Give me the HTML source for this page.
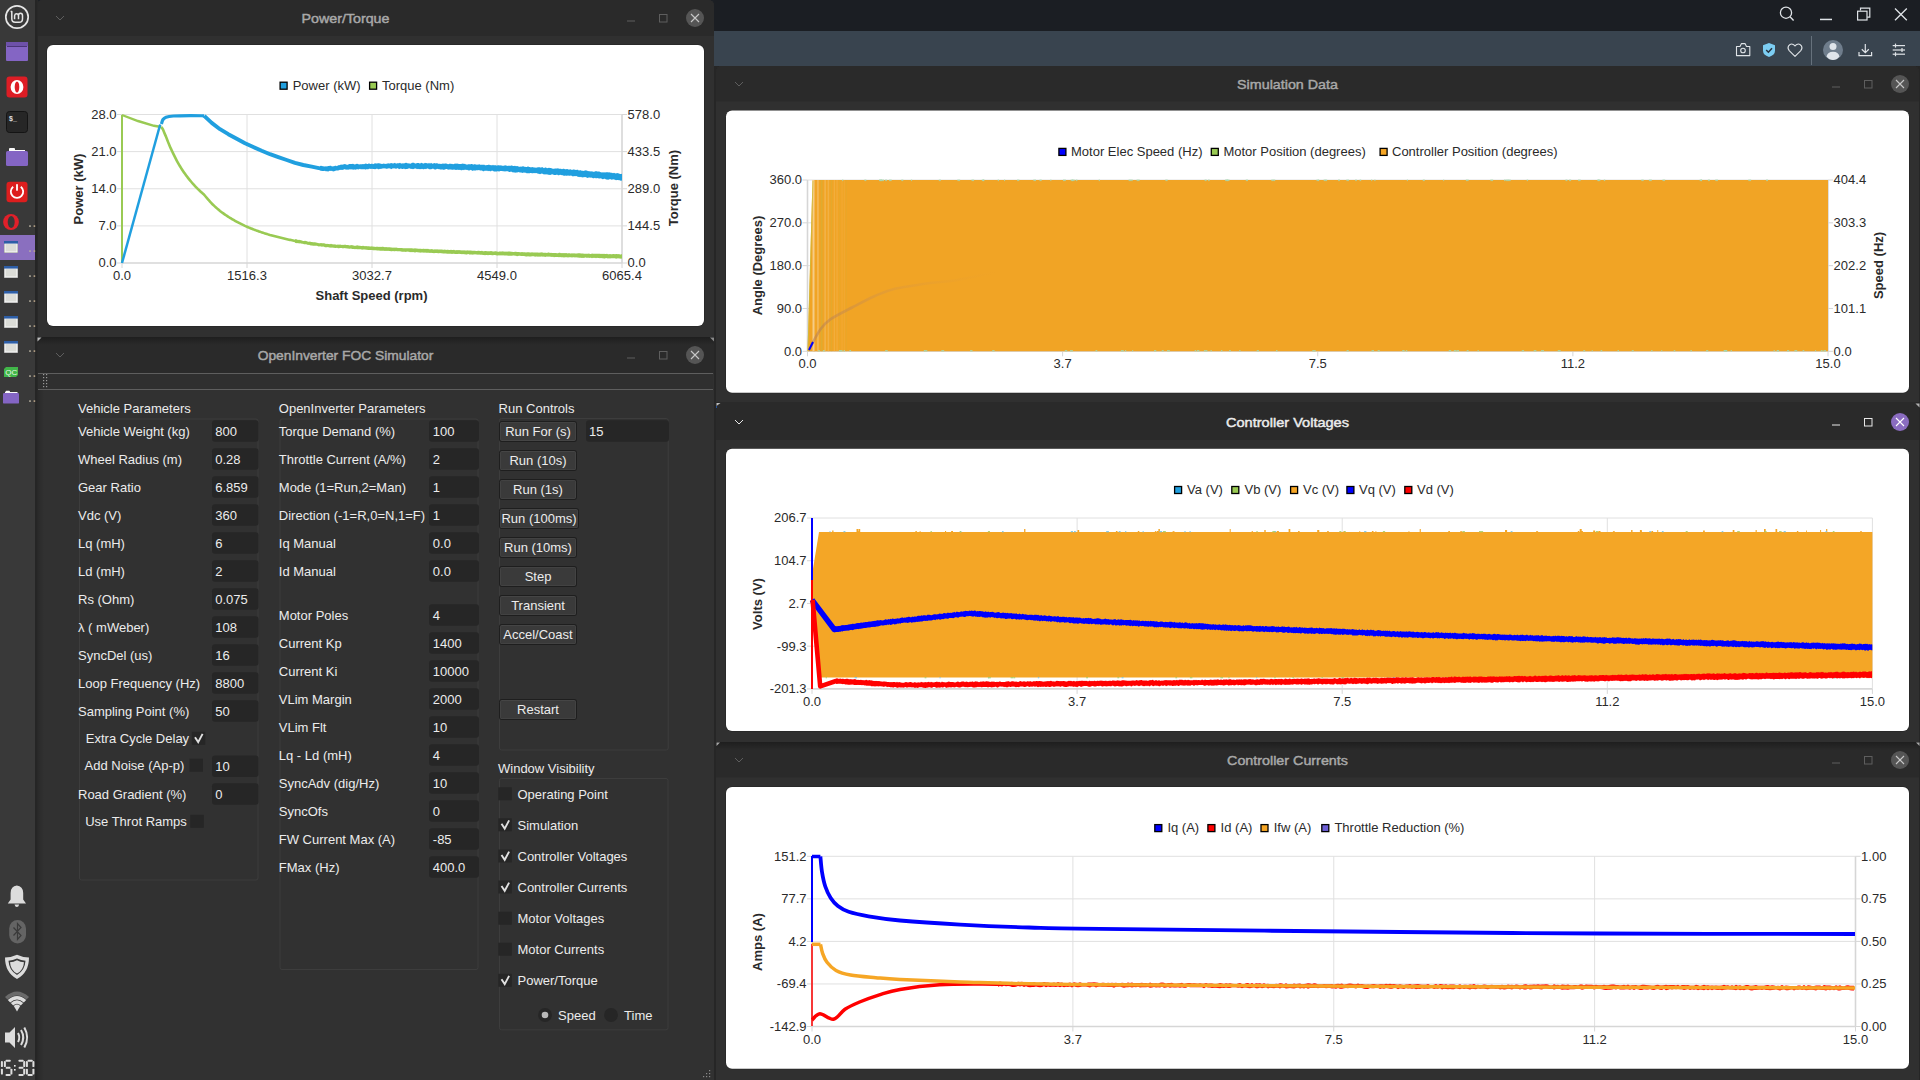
<!DOCTYPE html>
<html><head><meta charset="utf-8">
<style>
*{margin:0;padding:0}
html,body{width:1920px;height:1080px;overflow:hidden;background:#1c1f24}
.a{position:absolute}
svg text{font-family:"Liberation Sans",sans-serif}
</style></head><body>
<svg class="a" style="left:0;top:0" width="36" height="1080" viewBox="0 0 36 1080">
<rect x="0" y="0" width="35" height="1080" fill="#393939"/>
<rect x="35" y="0" width="3" height="1080" fill="#252525"/>
<!-- mint logo -->
<circle cx="17" cy="17" r="11.2" fill="none" stroke="#e6e6e6" stroke-width="1.7"/>
<path d="M10.6 11.6 H11.8 V18.8 Q11.8 22.3 15.2 22.3 H19.2 Q22.5 22.3 22.5 19 V15.6 A2 2.4 0 0 0 18.5 15.6 V19.3 M18.5 15.6 A2 2.4 0 0 0 14.6 15.6 V19.3" fill="none" stroke="#e6e6e6" stroke-width="1.5" stroke-linejoin="round"/>
<!-- purple window -->
<rect x="6" y="42" width="22" height="19" rx="1" fill="#8465c4"/>
<rect x="6" y="42" width="22" height="4" rx="1" fill="#6e51aa"/>
<rect x="7" y="46" width="20" height="1" fill="#4a3578"/>
<!-- opera -->
<rect x="6.5" y="76.5" width="21" height="21" rx="3" fill="#dd1d25"/>
<ellipse cx="17" cy="87" rx="6.4" ry="7" fill="#fff"/>
<ellipse cx="17" cy="87" rx="2.3" ry="5.6" fill="#dd1d25"/>
<!-- terminal -->
<rect x="6.5" y="111.5" width="21" height="21" rx="3" fill="#262626" stroke="#141414" stroke-width="1"/>
<text x="9" y="121" font-family="Liberation Mono" font-size="7" font-weight="bold" fill="#e0e0e0">$_</text>
<!-- folder -->
<rect x="9" y="148" width="6" height="3" rx="1" fill="#fafafa"/>
<rect x="9" y="150" width="16" height="2" fill="#fafafa"/>
<rect x="6" y="151" width="22" height="15" rx="1.5" fill="#8465c4"/>
<!-- power -->
<rect x="6.5" y="181.8" width="21" height="20.5" rx="3" fill="#dd1e1e"/>
<path d="M13.2 186.8 A6.2 6.2 0 1 0 20.8 186.8" fill="none" stroke="#fff" stroke-width="1.8"/>
<rect x="16.1" y="184.2" width="1.8" height="6.5" fill="#fff"/>
<!-- opera ring -->
<ellipse cx="11" cy="222" rx="7.9" ry="8" fill="#e1202a"/>
<ellipse cx="11.2" cy="222" rx="3.5" ry="6" fill="#393939"/>
<!-- highlight -->
<rect x="0" y="235" width="35" height="25" fill="#8a6fbf"/>
<rect x="4" y="241" width="14" height="12" fill="#8f8f8f"/><rect x="4.5" y="241.5" width="13" height="11" fill="#fafafa"/><rect x="4" y="241" width="14" height="2.6" fill="#2d5ea6"/><rect x="5.5" y="244" width="11" height="7.5" fill="#dcddd8"/>
<rect x="4" y="266" width="14" height="12" fill="#8f8f8f"/><rect x="4.5" y="266.5" width="13" height="11" fill="#fafafa"/><rect x="4" y="266" width="14" height="2.6" fill="#2d5ea6"/><rect x="5.5" y="269" width="11" height="7.5" fill="#dcddd8"/>
<rect x="4" y="291" width="14" height="12" fill="#8f8f8f"/><rect x="4.5" y="291.5" width="13" height="11" fill="#fafafa"/><rect x="4" y="291" width="14" height="2.6" fill="#2d5ea6"/><rect x="5.5" y="294" width="11" height="7.5" fill="#dcddd8"/>
<rect x="4" y="316" width="14" height="12" fill="#8f8f8f"/><rect x="4.5" y="316.5" width="13" height="11" fill="#fafafa"/><rect x="4" y="316" width="14" height="2.6" fill="#2d5ea6"/><rect x="5.5" y="319" width="11" height="7.5" fill="#dcddd8"/>
<rect x="4" y="341" width="14" height="12" fill="#8f8f8f"/><rect x="4.5" y="341.5" width="13" height="11" fill="#fafafa"/><rect x="4" y="341" width="14" height="2.6" fill="#2d5ea6"/><rect x="5.5" y="344" width="11" height="7.5" fill="#dcddd8"/>
<!-- QC -->
<path d="M6 367 H18 V375 L16 377 H4 V369 Z" fill="#41b649"/>
<text x="5.3" y="375" font-family="Liberation Sans" font-size="7.6" fill="#e8f5e8" textLength="12" lengthAdjust="spacingAndGlyphs">QC</text>
<!-- folder2 -->
<rect x="5.5" y="390.8" width="4.5" height="2.5" rx="1" fill="#fafafa"/>
<rect x="5" y="392" width="12.5" height="1.5" fill="#fafafa"/>
<rect x="3" y="393" width="16" height="10.6" rx="1.2" fill="#8465c4"/>
<rect x="29.2" y="225.3" width="1.6" height="1.6" fill="#b8b0a0"/><rect x="33.6" y="225.3" width="1.6" height="1.6" fill="#b8a488"/>
<rect x="29.2" y="250.3" width="1.6" height="1.6" fill="#b8b0a0"/><rect x="33.6" y="250.3" width="1.6" height="1.6" fill="#b8a488"/>
<rect x="29.2" y="275.3" width="1.6" height="1.6" fill="#b8b0a0"/><rect x="33.6" y="275.3" width="1.6" height="1.6" fill="#b8a488"/>
<rect x="29.2" y="300.3" width="1.6" height="1.6" fill="#b8b0a0"/><rect x="33.6" y="300.3" width="1.6" height="1.6" fill="#b8a488"/>
<rect x="29.2" y="325.3" width="1.6" height="1.6" fill="#b8b0a0"/><rect x="33.6" y="325.3" width="1.6" height="1.6" fill="#b8a488"/>
<rect x="29.2" y="350.3" width="1.6" height="1.6" fill="#b8b0a0"/><rect x="33.6" y="350.3" width="1.6" height="1.6" fill="#b8a488"/>
<rect x="29.2" y="375.3" width="1.6" height="1.6" fill="#b8b0a0"/><rect x="33.6" y="375.3" width="1.6" height="1.6" fill="#b8a488"/>
<rect x="29.2" y="400.3" width="1.6" height="1.6" fill="#b8b0a0"/><rect x="33.6" y="400.3" width="1.6" height="1.6" fill="#b8a488"/>
<!-- bell -->
<path d="M16.8 885.5 Q23 886 23.2 893 V899.5 L26 903.5 H7.8 L10.6 899.5 V893 Q10.8 886 16.8 885.5 Z" fill="#dcdcdc"/>
<path d="M14.5 904.5 H19.2 Q18.5 907 16.8 907 Q15.2 907 14.5 904.5 Z" fill="#dcdcdc"/>
<!-- bluetooth -->
<rect x="9.2" y="920" width="16.8" height="23.4" rx="8.4" fill="#646464"/>
<path d="M13.5 927.5 L21 935.5 L17.5 939.5 V923.5 L21 927.5 L13.5 935.5" fill="none" stroke="#3a3a3a" stroke-width="1.2"/>
<!-- shield -->
<path d="M17 954.8 Q22.5 957.5 29 957.5 Q29 972.5 17 979 Q5 972.5 5 957.5 Q11.5 957.5 17 954.8 Z" fill="#dcdcdc"/>
<path d="M17 958.6 Q21 960.6 25.5 960.8 Q25 970.5 17 975 Q9 970.5 8.5 960.8 Q13 960.6 17 958.6 Z" fill="#393939"/>
<path d="M17 960.2 Q20.5 962 24 962.2 Q23.5 970 17 973.6 Q10.5 970 10 962.2 Q13.5 962 17 960.2 Z" fill="#dcdcdc"/>
<!-- wifi -->
<path d="M5 997 Q17 986 29 997 L26.5 999.6 Q17 991.5 7.5 999.6 Z" fill="#6a6a6a"/>
<path d="M7.8 1000 Q17 991.8 26.2 1000 L23.8 1002.5 Q17 996.5 10.2 1002.5 Z" fill="#dcdcdc"/>
<path d="M10.8 1003 Q17 997.5 23.2 1003 L20.8 1005.4 Q17 1002 13.2 1005.4 Z" fill="#dcdcdc"/>
<path d="M13.8 1006 Q17 1003.2 20.2 1006 L17 1011.5 Z" fill="#dcdcdc"/>
<!-- speaker -->
<path d="M5 1032.5 H9.5 L15 1027 V1048 L9.5 1042.5 H5 Z" fill="#dcdcdc"/>
<path d="M18 1033 Q20.5 1037.5 18 1042" fill="none" stroke="#dcdcdc" stroke-width="2"/>
<path d="M21 1030 Q25.5 1037.5 21 1045" fill="none" stroke="#dcdcdc" stroke-width="2"/>
<path d="M24.3 1027.5 Q30 1037.5 24.3 1047.5" fill="none" stroke="#dcdcdc" stroke-width="2"/>
<!-- clock -->
<rect x="0.90" y="1061.10" width="2.00" height="5.95" rx="0.9" fill="#dedede"/><rect x="0.90" y="1068.65" width="2.00" height="5.95" rx="0.9" fill="#dedede"/><rect x="5.50" y="1059.70" width="5.30" height="2.00" rx="0.9" fill="#dedede"/><rect x="3.90" y="1061.10" width="2.00" height="5.95" rx="0.9" fill="#dedede"/><rect x="5.70" y="1066.85" width="4.90" height="2.00" rx="0.9" fill="#dedede"/><rect x="10.40" y="1068.65" width="2.00" height="5.95" rx="0.9" fill="#dedede"/><rect x="5.50" y="1074.00" width="5.30" height="2.00" rx="0.9" fill="#dedede"/><rect x="14" y="1065" width="1.6" height="1.6" fill="#f0f0f0"/><rect x="14" y="1069" width="1.6" height="1.6" fill="#f0f0f0"/><rect x="18.4" y="1059.70" width="5.30" height="2.00" rx="0.9" fill="#dedede"/><rect x="23.2" y="1061.10" width="2.00" height="5.95" rx="0.9" fill="#dedede"/><rect x="18.6" y="1066.85" width="4.90" height="2.00" rx="0.9" fill="#dedede"/><rect x="23.2" y="1068.65" width="2.00" height="5.95" rx="0.9" fill="#dedede"/><rect x="18.4" y="1074.00" width="5.30" height="2.00" rx="0.9" fill="#dedede"/><rect x="27.50" y="1059.70" width="5.30" height="2.00" rx="0.9" fill="#dedede"/><rect x="32.40" y="1061.10" width="2.00" height="5.95" rx="0.9" fill="#dedede"/><rect x="32.40" y="1068.65" width="2.00" height="5.95" rx="0.9" fill="#dedede"/><rect x="27.50" y="1074.00" width="5.30" height="2.00" rx="0.9" fill="#dedede"/><rect x="25.90" y="1068.65" width="2.00" height="5.95" rx="0.9" fill="#dedede"/><rect x="25.90" y="1061.10" width="2.00" height="5.95" rx="0.9" fill="#dedede"/>
</svg>
<svg class="a" style="left:0;top:0" width="1920" height="1080" viewBox="0 0 1920 1080" font-family="Liberation Sans">
<rect x="36" y="0" width="1884" height="1080" fill="#1c1f24"/>
<rect x="714" y="0" width="1206" height="31" fill="#1b1e23"/>
<rect x="714" y="31" width="1206" height="35" fill="#39444f"/>
<rect x="714" y="66" width="1206" height="1014" fill="#262626"/>
<rect x="36" y="0" width="2" height="1080" fill="#252525"/>
<defs><linearGradient id="tshade" x1="0" y1="0" x2="0" y2="1"><stop offset="0" stop-color="#000" stop-opacity="0.28"/><stop offset="1" stop-color="#000" stop-opacity="0"/></linearGradient></defs>
<path d="M37 337 V6 Q37 0 43 0 H708 Q714 0 714 6 V337 Z" fill="#303030"/>
<path d="M37 36 V6 Q37 0 43 0 H708 Q714 0 714 6 V36 Z" fill="#2a2a2a"/>
<path d="M56 16 L60 20 L64 16" fill="none" stroke="#5e5e5e" stroke-width="1"/>
<text x="301.55" y="22.7" font-size="13.2" fill="#a8a8a8" stroke="#a8a8a8" stroke-width="0.45" textLength="87.9" lengthAdjust="spacingAndGlyphs">Power/Torque</text>
<rect x="627" y="20.5" width="8" height="1" fill="#5e5e5e"/>
<rect x="659.5" y="14.5" width="7.5" height="7.5" fill="none" stroke="#5e5e5e" stroke-width="1"/>
<circle cx="695" cy="18" r="9" fill="#555555"/>
<path d="M691 14 L699 22 M699 14 L691 22" stroke="#c8c8c8" stroke-width="1.1"/>
<path d="M37 1080 V343 Q37 337 43 337 H708 Q714 337 714 343 V1080 Z" fill="#313131"/>
<path d="M37 373 V343 Q37 337 43 337 H708 Q714 337 714 343 V373 Z" fill="#2a2a2a"/>
<rect x="37" y="337" width="677" height="8" fill="url(#tshade)"/>
<path d="M56 353 L60 357 L64 353" fill="none" stroke="#5e5e5e" stroke-width="1"/>
<text x="257.65" y="359.7" font-size="13.2" fill="#a8a8a8" stroke="#a8a8a8" stroke-width="0.45" textLength="175.7" lengthAdjust="spacingAndGlyphs">OpenInverter FOC Simulator</text>
<rect x="627" y="357.5" width="8" height="1" fill="#5e5e5e"/>
<rect x="659.5" y="351.5" width="7.5" height="7.5" fill="none" stroke="#5e5e5e" stroke-width="1"/>
<circle cx="695" cy="355" r="9" fill="#555555"/>
<path d="M691 351 L699 359 M699 351 L691 359" stroke="#c8c8c8" stroke-width="1.1"/>
<defs><linearGradient id="lshade" x1="0" y1="0" x2="1" y2="0"><stop offset="0" stop-color="#000" stop-opacity="0.18"/><stop offset="1" stop-color="#000" stop-opacity="0"/></linearGradient></defs>
<rect x="37" y="373" width="7" height="707" fill="url(#lshade)"/>
<path d="M716 402 V72 Q716 66 722 66 H1913 Q1919 66 1919 72 V402 Z" fill="#303030"/>
<path d="M716 101.4 V72 Q716 66 722 66 H1913 Q1919 66 1919 72 V101.4 Z" fill="#2a2a2a"/>
<path d="M735 82 L739 86 L743 82" fill="none" stroke="#5e5e5e" stroke-width="1"/>
<text x="1237.10" y="88.7" font-size="13.2" fill="#a8a8a8" stroke="#a8a8a8" stroke-width="0.45" textLength="100.8" lengthAdjust="spacingAndGlyphs">Simulation Data</text>
<rect x="1832" y="86.5" width="8" height="1" fill="#5e5e5e"/>
<rect x="1864.5" y="80.5" width="7.5" height="7.5" fill="none" stroke="#5e5e5e" stroke-width="1"/>
<circle cx="1900" cy="84" r="9" fill="#555555"/>
<path d="M1896 80 L1904 88 M1904 80 L1896 88" stroke="#c8c8c8" stroke-width="1.1"/>
<path d="M716 742 V408 Q716 402 722 402 H1913 Q1919 402 1919 408 V742 Z" fill="#303030"/>
<path d="M716 440 V408 Q716 402 722 402 H1913 Q1919 402 1919 408 V440 Z" fill="#2a2a2a"/>
<path d="M735 420 L739 424 L743 420" fill="none" stroke="#e8e8e8" stroke-width="1"/>
<text x="1226.00" y="426.7" font-size="13.2" fill="#ececec" stroke="#ececec" stroke-width="0.45" textLength="123" lengthAdjust="spacingAndGlyphs">Controller Voltages</text>
<rect x="1832" y="424.5" width="8" height="1" fill="#e8e8e8"/>
<rect x="1864.5" y="418.5" width="7.5" height="7.5" fill="none" stroke="#e8e8e8" stroke-width="1"/>
<circle cx="1900" cy="422" r="9" fill="#8a6cc0"/>
<path d="M1896 418 L1904 426 M1904 418 L1896 426" stroke="#ffffff" stroke-width="1.1"/>
<path d="M716 1080 V748 Q716 742 722 742 H1913 Q1919 742 1919 748 V1080 Z" fill="#303030"/>
<path d="M716 777.5 V748 Q716 742 722 742 H1913 Q1919 742 1919 748 V777.5 Z" fill="#2a2a2a"/>
<rect x="716" y="742" width="1203" height="8" fill="url(#tshade)"/>
<path d="M735 758 L739 762 L743 758" fill="none" stroke="#5e5e5e" stroke-width="1"/>
<text x="1227.05" y="764.7" font-size="13.2" fill="#a8a8a8" stroke="#a8a8a8" stroke-width="0.45" textLength="120.9" lengthAdjust="spacingAndGlyphs">Controller Currents</text>
<rect x="1832" y="762.5" width="8" height="1" fill="#5e5e5e"/>
<rect x="1864.5" y="756.5" width="7.5" height="7.5" fill="none" stroke="#5e5e5e" stroke-width="1"/>
<circle cx="1900" cy="760" r="9" fill="#555555"/>
<path d="M1896 756 L1904 764 M1904 756 L1896 764" stroke="#c8c8c8" stroke-width="1.1"/>
<rect x="46.5" y="44.5" width="658" height="282" rx="6.5" fill="#222222"/>
<rect x="47" y="45" width="657" height="281" rx="6" fill="#ffffff"/>
<line x1="247.00" y1="114.5" x2="247.00" y2="263" stroke="#e0e0e0" stroke-width="1"/>
<line x1="372.00" y1="114.5" x2="372.00" y2="263" stroke="#e0e0e0" stroke-width="1"/>
<line x1="497.00" y1="114.5" x2="497.00" y2="263" stroke="#e0e0e0" stroke-width="1"/>
<line x1="122" y1="114.50" x2="622" y2="114.50" stroke="#e0e0e0" stroke-width="1"/>
<line x1="122" y1="151.62" x2="622" y2="151.62" stroke="#e0e0e0" stroke-width="1"/>
<line x1="122" y1="188.75" x2="622" y2="188.75" stroke="#e0e0e0" stroke-width="1"/>
<line x1="122" y1="225.88" x2="622" y2="225.88" stroke="#e0e0e0" stroke-width="1"/>
<line x1="122" y1="263" x2="622" y2="263" stroke="#d6d6d6" stroke-width="1.6"/>
<line x1="122" y1="114.5" x2="122" y2="263" stroke="#d6d6d6" stroke-width="1.6"/>
<line x1="622" y1="114.5" x2="622" y2="263" stroke="#d6d6d6" stroke-width="1.6"/>
<text x="116.5" y="118.9" font-size="13" fill="#2a2a2a" text-anchor="end" >28.0</text>
<line x1="117" y1="114.50" x2="122" y2="114.50" stroke="#d6d6d6" stroke-width="1"/>
<text x="116.5" y="156.025" font-size="13" fill="#2a2a2a" text-anchor="end" >21.0</text>
<line x1="117" y1="151.62" x2="122" y2="151.62" stroke="#d6d6d6" stroke-width="1"/>
<text x="116.5" y="193.15" font-size="13" fill="#2a2a2a" text-anchor="end" >14.0</text>
<line x1="117" y1="188.75" x2="122" y2="188.75" stroke="#d6d6d6" stroke-width="1"/>
<text x="116.5" y="230.275" font-size="13" fill="#2a2a2a" text-anchor="end" >7.0</text>
<line x1="117" y1="225.88" x2="122" y2="225.88" stroke="#d6d6d6" stroke-width="1"/>
<text x="116.5" y="267.4" font-size="13" fill="#2a2a2a" text-anchor="end" >0.0</text>
<line x1="117" y1="263.00" x2="122" y2="263.00" stroke="#d6d6d6" stroke-width="1"/>
<text x="627.6" y="118.9" font-size="13" fill="#2a2a2a" text-anchor="start" >578.0</text>
<line x1="622" y1="114.50" x2="627" y2="114.50" stroke="#d6d6d6" stroke-width="1"/>
<text x="627.6" y="156.025" font-size="13" fill="#2a2a2a" text-anchor="start" >433.5</text>
<line x1="622" y1="151.62" x2="627" y2="151.62" stroke="#d6d6d6" stroke-width="1"/>
<text x="627.6" y="193.15" font-size="13" fill="#2a2a2a" text-anchor="start" >289.0</text>
<line x1="622" y1="188.75" x2="627" y2="188.75" stroke="#d6d6d6" stroke-width="1"/>
<text x="627.6" y="230.275" font-size="13" fill="#2a2a2a" text-anchor="start" >144.5</text>
<line x1="622" y1="225.88" x2="627" y2="225.88" stroke="#d6d6d6" stroke-width="1"/>
<text x="627.6" y="267.4" font-size="13" fill="#2a2a2a" text-anchor="start" >0.0</text>
<line x1="622" y1="263.00" x2="627" y2="263.00" stroke="#d6d6d6" stroke-width="1"/>
<text x="122.00" y="280" font-size="13" fill="#2a2a2a" text-anchor="middle" >0.0</text>
<line x1="122.00" y1="263" x2="122.00" y2="268" stroke="#d6d6d6" stroke-width="1"/>
<text x="247.00" y="280" font-size="13" fill="#2a2a2a" text-anchor="middle" >1516.3</text>
<line x1="247.00" y1="263" x2="247.00" y2="268" stroke="#d6d6d6" stroke-width="1"/>
<text x="372.00" y="280" font-size="13" fill="#2a2a2a" text-anchor="middle" >3032.7</text>
<line x1="372.00" y1="263" x2="372.00" y2="268" stroke="#d6d6d6" stroke-width="1"/>
<text x="497.00" y="280" font-size="13" fill="#2a2a2a" text-anchor="middle" >4549.0</text>
<line x1="497.00" y1="263" x2="497.00" y2="268" stroke="#d6d6d6" stroke-width="1"/>
<text x="622.00" y="280" font-size="13" fill="#2a2a2a" text-anchor="middle" >6065.4</text>
<line x1="622.00" y1="263" x2="622.00" y2="268" stroke="#d6d6d6" stroke-width="1"/>
<text transform="translate(78 189) rotate(-90)" x="0" y="4.5" font-size="13" font-weight="bold" fill="#2a2a2a" text-anchor="middle">Power (kW)</text>
<text transform="translate(673 188) rotate(-90)" x="0" y="4.5" font-size="13" font-weight="bold" fill="#2a2a2a" text-anchor="middle">Torque (Nm)</text>
<text x="371.5" y="300" font-size="13" fill="#2a2a2a" text-anchor="middle" font-weight="bold" >Shaft Speed (rpm)</text>
<rect x="280.1" y="82.19999999999999" width="7" height="7" fill="#209fdf" stroke="#000" stroke-width="1.3"/>
<text x="292.7" y="89.6" font-size="13" fill="#2a2a2a" text-anchor="start" >Power (kW)</text>
<rect x="369.6" y="82.19999999999999" width="7" height="7" fill="#99ca53" stroke="#000" stroke-width="1.3"/>
<text x="382" y="89.6" font-size="13" fill="#2a2a2a" text-anchor="start" >Torque (Nm)</text>
<path d="M122.00 263.00 L122.00 115.00" stroke="#99ca53" stroke-width="2" fill="none"/>
<path d="M122.00 115.00 L138.00 121.00 L154.00 125.80 L161.40 127.00" stroke="#99ca53" stroke-width="2.4" fill="none"/>
<path d="M161.40 127.00 L163.00 129.53 L164.00 132.01 L165.00 134.38 L166.00 136.64 L167.00 139.31 L168.00 141.86 L169.00 144.31 L170.00 146.65 L171.00 148.90 L172.00 151.06 L173.00 153.13 L174.00 155.19 L175.00 157.20 L176.00 159.15 L177.00 161.02 L178.00 162.82 L179.00 164.56 L180.00 166.25 L181.00 167.87 L182.00 169.44 L183.00 170.96 L184.00 172.43 L185.00 173.85 L186.00 175.23 L187.00 176.57 L188.00 177.86 L189.00 179.12 L190.00 180.34 L191.00 181.54 L192.00 182.72 L193.00 183.85 L194.00 184.96 L195.00 186.04 L196.00 187.08 L197.00 188.10 L198.00 189.10 L199.00 190.06 L200.00 191.01 L201.00 191.92 L202.00 192.82 L203.00 193.69 L204.00 194.54 L205.00 195.72 L206.00 196.95 L207.00 198.15 L208.00 199.32 L209.00 200.47 L210.00 201.59 L211.00 202.69 L212.00 203.73 L213.00 204.70 L214.00 205.65 L215.00 206.58 L216.00 207.49 L217.00 208.38 L218.00 209.25 L219.00 210.10 L220.00 210.94 L221.00 211.69 L222.00 212.44 L223.00 213.16 L224.00 213.88 L225.00 214.58 L226.00 215.26 L227.00 215.94 L228.00 216.60 L229.00 217.23 L230.00 217.85 L231.00 218.45 L232.00 219.04 L233.00 219.63 L234.00 220.20 L235.00 220.76 L236.00 221.31 L237.00 221.85 L238.00 222.39 L239.00 222.91 L240.00 223.43 L241.00 223.94 L242.00 224.44 L243.00 224.93 L244.00 225.41 L245.00 225.89 L246.00 226.33 L247.00 226.76 L248.00 227.19 L249.00 227.61 L250.00 228.02 L251.00 228.43 L252.00 228.83 L253.00 229.22 L254.00 229.61 L255.00 229.98 L256.00 230.36 L257.00 230.72 L258.00 231.08 L259.00 231.44 L260.00 231.79 L261.00 232.13 L262.00 232.47 L263.00 232.80 L264.00 233.12 L265.00 233.44 L266.00 233.75 L267.00 234.06 L268.00 234.37 L269.00 234.67 L270.00 234.97 L271.00 235.24 L272.00 235.52 L273.00 235.79 L274.00 236.05 L275.00 236.32 L276.00 236.58 L277.00 236.83 L278.00 237.09 L279.00 237.34 L280.00 237.58 L281.00 237.82 L282.00 238.06 L283.00 238.30 L284.00 238.53 L285.00 238.77 L286.00 238.99 L287.00 239.22 L288.00 239.44 L289.00 239.66 L290.00 239.88 L291.00 240.10 L292.00 240.31 L293.00 240.52 L294.00 240.73 L295.00 240.94 L296.00 241.12 L297.00 241.30 L298.00 241.48 L299.00 241.65" stroke="#99ca53" stroke-width="2.6" fill="none" stroke-linejoin="round"/>
<path d="M295.0 239.20 L296.0 239.30 L297.0 239.51 L298.0 240.05 L299.0 239.77 L300.0 239.96 L301.0 240.35 L302.0 240.48 L303.0 240.91 L304.0 240.93 L305.0 240.84 L306.0 240.98 L307.0 241.22 L308.0 241.68 L309.0 241.72 L310.0 241.48 L311.0 241.97 L312.0 241.98 L313.0 242.29 L314.0 242.18 L315.0 242.22 L316.0 242.62 L317.0 242.86 L318.0 242.91 L319.0 243.18 L320.0 243.14 L321.0 243.01 L322.0 243.37 L323.0 243.28 L324.0 243.25 L325.0 243.45 L326.0 243.91 L327.0 243.82 L328.0 244.08 L329.0 244.08 L330.0 244.15 L331.0 243.86 L332.0 244.23 L333.0 244.21 L334.0 244.49 L335.0 244.20 L336.0 244.64 L337.0 244.67 L338.0 244.45 L339.0 244.63 L340.0 244.56 L341.0 244.72 L342.0 244.88 L343.0 244.63 L344.0 244.95 L345.0 244.61 L346.0 244.97 L347.0 244.94 L348.0 245.07 L349.0 245.34 L350.0 245.42 L351.0 245.08 L352.0 245.19 L353.0 245.31 L354.0 245.63 L355.0 245.67 L356.0 245.66 L357.0 245.37 L358.0 245.44 L359.0 245.75 L360.0 245.81 L361.0 245.91 L362.0 245.98 L363.0 245.75 L364.0 246.04 L365.0 246.30 L366.0 246.01 L367.0 246.28 L368.0 246.13 L369.0 246.24 L370.0 246.45 L371.0 246.54 L372.0 246.35 L373.0 246.64 L374.0 246.52 L375.0 246.89 L376.0 246.83 L377.0 246.77 L378.0 246.73 L379.0 246.93 L380.0 246.79 L381.0 247.03 L382.0 246.82 L383.0 246.82 L384.0 247.10 L385.0 247.33 L386.0 246.99 L387.0 247.16 L388.0 247.19 L389.0 247.21 L390.0 247.32 L391.0 247.38 L392.0 247.42 L393.0 247.78 L394.0 247.62 L395.0 247.77 L396.0 247.62 L397.0 247.75 L398.0 248.00 L399.0 247.92 L400.0 248.03 L401.0 247.94 L402.0 247.91 L403.0 248.14 L404.0 248.31 L405.0 248.22 L406.0 248.34 L407.0 248.26 L408.0 248.18 L409.0 248.26 L410.0 248.29 L411.0 248.21 L412.0 248.26 L413.0 248.52 L414.0 248.45 L415.0 248.32 L416.0 248.53 L417.0 248.43 L418.0 248.87 L419.0 248.65 L420.0 248.69 L421.0 248.85 L422.0 248.97 L423.0 248.64 L424.0 248.68 L425.0 248.90 L426.0 248.75 L427.0 249.07 L428.0 248.83 L429.0 249.22 L430.0 249.34 L431.0 249.22 L432.0 249.09 L433.0 249.51 L434.0 249.42 L435.0 249.21 L436.0 249.50 L437.0 249.18 L438.0 249.41 L439.0 249.43 L440.0 249.42 L441.0 249.45 L442.0 249.60 L443.0 249.75 L444.0 249.71 L445.0 249.60 L446.0 249.99 L447.0 249.82 L448.0 249.64 L449.0 250.11 L450.0 249.94 L451.0 249.84 L452.0 249.99 L453.0 250.07 L454.0 249.87 L455.0 250.18 L456.0 250.33 L457.0 250.05 L458.0 250.29 L459.0 250.01 L460.0 250.26 L461.0 250.29 L462.0 250.49 L463.0 250.20 L464.0 250.52 L465.0 250.27 L466.0 250.69 L467.0 250.24 L468.0 250.42 L469.0 250.38 L470.0 250.51 L471.0 250.51 L472.0 250.75 L473.0 250.86 L474.0 250.75 L475.0 250.68 L476.0 250.97 L477.0 251.02 L478.0 250.80 L479.0 250.68 L480.0 250.93 L481.0 250.88 L482.0 250.74 L483.0 251.21 L484.0 251.20 L485.0 251.05 L486.0 251.05 L487.0 251.23 L488.0 251.26 L489.0 251.16 L490.0 251.33 L491.0 251.11 L492.0 251.15 L493.0 251.49 L494.0 251.52 L495.0 251.30 L496.0 251.18 L497.0 251.49 L498.0 251.66 L499.0 251.68 L500.0 251.26 L501.0 251.65 L502.0 251.30 L503.0 251.41 L504.0 251.53 L505.0 251.76 L506.0 251.60 L507.0 251.74 L508.0 251.55 L509.0 251.59 L510.0 251.59 L511.0 251.75 L512.0 251.70 L513.0 252.05 L514.0 252.03 L515.0 251.71 L516.0 251.80 L517.0 251.97 L518.0 251.93 L519.0 252.03 L520.0 252.21 L521.0 252.13 L522.0 251.90 L523.0 252.24 L524.0 252.31 L525.0 252.30 L526.0 252.43 L527.0 252.29 L528.0 252.15 L529.0 252.29 L530.0 252.49 L531.0 252.43 L532.0 252.23 L533.0 252.52 L534.0 252.53 L535.0 252.47 L536.0 252.51 L537.0 252.49 L538.0 252.38 L539.0 252.69 L540.0 252.46 L541.0 252.50 L542.0 252.36 L543.0 252.84 L544.0 252.69 L545.0 252.65 L546.0 252.68 L547.0 252.92 L548.0 252.54 L549.0 252.55 L550.0 252.92 L551.0 252.87 L552.0 252.96 L553.0 252.96 L554.0 253.12 L555.0 253.07 L556.0 252.98 L557.0 253.16 L558.0 253.17 L559.0 252.79 L560.0 252.84 L561.0 253.29 L562.0 253.07 L563.0 253.15 L564.0 253.00 L565.0 253.23 L566.0 252.99 L567.0 253.37 L568.0 253.41 L569.0 253.06 L570.0 253.43 L571.0 253.39 L572.0 253.32 L573.0 253.44 L574.0 253.23 L575.0 253.51 L576.0 253.44 L577.0 253.44 L578.0 253.30 L579.0 253.25 L580.0 253.34 L581.0 253.52 L582.0 253.43 L583.0 253.42 L584.0 253.67 L585.0 253.63 L586.0 253.81 L587.0 253.73 L588.0 253.74 L589.0 253.53 L590.0 253.92 L591.0 253.88 L592.0 253.54 L593.0 253.68 L594.0 253.80 L595.0 253.87 L596.0 253.76 L597.0 253.71 L598.0 253.83 L599.0 253.76 L600.0 253.66 L601.0 254.09 L602.0 253.71 L603.0 253.97 L604.0 253.83 L605.0 253.96 L606.0 253.95 L607.0 253.86 L608.0 254.26 L609.0 254.29 L610.0 254.09 L611.0 254.15 L612.0 254.23 L613.0 254.11 L614.0 254.03 L615.0 254.25 L616.0 253.96 L617.0 254.04 L618.0 254.29 L619.0 254.09 L620.0 254.51 L621.0 254.49 L622.0 254.10 L622.0 258.45 L621.0 258.70 L620.0 258.40 L619.0 258.54 L618.0 258.35 L617.0 258.56 L616.0 258.65 L615.0 258.33 L614.0 258.31 L613.0 258.34 L612.0 258.24 L611.0 258.22 L610.0 258.53 L609.0 258.36 L608.0 258.54 L607.0 258.23 L606.0 258.05 L605.0 258.46 L604.0 258.42 L603.0 258.15 L602.0 258.14 L601.0 258.05 L600.0 258.26 L599.0 258.07 L598.0 257.90 L597.0 257.84 L596.0 258.19 L595.0 257.76 L594.0 257.91 L593.0 257.82 L592.0 258.15 L591.0 257.83 L590.0 257.66 L589.0 257.89 L588.0 257.61 L587.0 257.90 L586.0 257.62 L585.0 257.58 L584.0 257.89 L583.0 257.81 L582.0 257.91 L581.0 257.82 L580.0 257.67 L579.0 257.69 L578.0 257.62 L577.0 257.47 L576.0 257.34 L575.0 257.40 L574.0 257.26 L573.0 257.24 L572.0 257.47 L571.0 257.20 L570.0 257.18 L569.0 257.27 L568.0 257.47 L567.0 257.22 L566.0 257.15 L565.0 257.24 L564.0 257.44 L563.0 257.27 L562.0 257.22 L561.0 257.18 L560.0 256.99 L559.0 257.16 L558.0 257.10 L557.0 256.96 L556.0 257.04 L555.0 257.01 L554.0 257.21 L553.0 256.73 L552.0 256.88 L551.0 256.68 L550.0 256.65 L549.0 256.62 L548.0 256.81 L547.0 256.57 L546.0 256.69 L545.0 256.98 L544.0 256.48 L543.0 256.82 L542.0 256.40 L541.0 256.59 L540.0 256.82 L539.0 256.44 L538.0 256.65 L537.0 256.40 L536.0 256.39 L535.0 256.69 L534.0 256.22 L533.0 256.16 L532.0 256.20 L531.0 256.43 L530.0 256.40 L529.0 256.51 L528.0 256.35 L527.0 256.45 L526.0 256.41 L525.0 256.16 L524.0 256.04 L523.0 256.00 L522.0 255.91 L521.0 256.00 L520.0 255.86 L519.0 255.80 L518.0 255.93 L517.0 256.13 L516.0 255.66 L515.0 255.87 L514.0 255.62 L513.0 255.58 L512.0 255.73 L511.0 255.79 L510.0 255.73 L509.0 255.66 L508.0 255.74 L507.0 255.45 L506.0 255.52 L505.0 255.48 L504.0 255.46 L503.0 255.32 L502.0 255.56 L501.0 255.25 L500.0 255.50 L499.0 255.20 L498.0 255.46 L497.0 255.46 L496.0 255.28 L495.0 255.12 L494.0 255.03 L493.0 255.27 L492.0 255.24 L491.0 254.97 L490.0 255.03 L489.0 254.88 L488.0 255.16 L487.0 255.02 L486.0 255.03 L485.0 255.14 L484.0 254.97 L483.0 254.97 L482.0 254.77 L481.0 254.79 L480.0 254.67 L479.0 254.55 L478.0 254.82 L477.0 254.44 L476.0 254.57 L475.0 254.37 L474.0 254.39 L473.0 254.58 L472.0 254.70 L471.0 254.27 L470.0 254.64 L469.0 254.24 L468.0 254.12 L467.0 254.56 L466.0 254.39 L465.0 254.32 L464.0 254.36 L463.0 253.95 L462.0 254.17 L461.0 254.01 L460.0 254.08 L459.0 253.84 L458.0 254.12 L457.0 253.91 L456.0 254.08 L455.0 254.04 L454.0 253.68 L453.0 253.74 L452.0 253.96 L451.0 253.79 L450.0 253.72 L449.0 253.78 L448.0 253.63 L447.0 253.77 L446.0 253.40 L445.0 253.53 L444.0 253.38 L443.0 253.42 L442.0 253.28 L441.0 253.22 L440.0 253.09 L439.0 253.29 L438.0 253.19 L437.0 253.06 L436.0 252.94 L435.0 252.95 L434.0 253.25 L433.0 253.01 L432.0 253.11 L431.0 252.80 L430.0 252.92 L429.0 252.81 L428.0 252.77 L427.0 252.64 L426.0 252.69 L425.0 252.53 L424.0 252.81 L423.0 252.50 L422.0 252.42 L421.0 252.44 L420.0 252.63 L419.0 252.21 L418.0 252.38 L417.0 252.05 L416.0 252.18 L415.0 252.44 L414.0 252.20 L413.0 251.94 L412.0 252.14 L411.0 251.99 L410.0 252.21 L409.0 251.85 L408.0 251.68 L407.0 251.61 L406.0 251.96 L405.0 251.70 L404.0 251.65 L403.0 251.85 L402.0 251.64 L401.0 251.49 L400.0 251.26 L399.0 251.29 L398.0 251.21 L397.0 251.21 L396.0 251.06 L395.0 251.33 L394.0 251.26 L393.0 250.97 L392.0 251.20 L391.0 251.18 L390.0 250.95 L389.0 250.98 L388.0 250.72 L387.0 250.95 L386.0 250.77 L385.0 250.90 L384.0 250.70 L383.0 250.86 L382.0 250.67 L381.0 250.69 L380.0 250.63 L379.0 250.49 L378.0 250.51 L377.0 250.46 L376.0 250.33 L375.0 250.22 L374.0 250.18 L373.0 250.30 L372.0 250.12 L371.0 249.96 L370.0 250.01 L369.0 249.98 L368.0 249.89 L367.0 249.87 L366.0 249.85 L365.0 249.49 L364.0 249.47 L363.0 249.55 L362.0 249.67 L361.0 249.18 L360.0 249.19 L359.0 249.35 L358.0 249.15 L357.0 249.28 L356.0 249.02 L355.0 249.15 L354.0 248.88 L353.0 248.99 L352.0 249.01 L351.0 248.53 L350.0 248.65 L349.0 248.79 L348.0 248.48 L347.0 248.61 L346.0 248.24 L345.0 248.32 L344.0 248.01 L343.0 248.42 L342.0 247.94 L341.0 247.90 L340.0 247.93 L339.0 248.20 L338.0 248.15 L337.0 247.81 L336.0 248.06 L335.0 247.96 L334.0 247.83 L333.0 247.78 L332.0 247.49 L331.0 247.70 L330.0 247.53 L329.0 247.55 L328.0 247.01 L327.0 247.19 L326.0 247.21 L325.0 247.14 L324.0 246.64 L323.0 246.55 L322.0 246.65 L321.0 246.54 L320.0 246.34 L319.0 246.39 L318.0 246.23 L317.0 245.83 L316.0 245.75 L315.0 245.68 L314.0 245.87 L313.0 245.72 L312.0 245.44 L311.0 245.44 L310.0 245.25 L309.0 244.78 L308.0 244.96 L307.0 244.43 L306.0 244.28 L305.0 244.14 L304.0 244.36 L303.0 243.85 L302.0 243.86 L301.0 243.53 L300.0 243.29 L299.0 243.38 L298.0 243.11 L297.0 243.15 L296.0 242.98 L295.0 242.68 Z" fill="#99ca53"/>
<path d="M122.00 263.00 L160.20 124.50" stroke="#209fdf" stroke-width="2.5" fill="none"/>
<path d="M161.40 124.00 C161.67 123.25 162.23 120.63 163.00 119.50 C163.77 118.37 164.27 117.78 166.00 117.20 C167.73 116.62 169.40 116.27 173.40 116.00 C177.40 115.73 184.87 115.63 190.00 115.60 C195.13 115.57 201.83 115.77 204.20 115.80" stroke="#209fdf" stroke-width="3.2" fill="none"/>
<path d="M204.20 115.80 L211.70 122.90 L220.00 129.20 L228.30 134.20 L236.70 138.75 L245.00 143.30 L253.30 147.10 L261.70 150.80 L270.00 154.20 L278.30 157.10 L286.70 160.00 L295.00 162.90 L303.30 165.00 L311.70 166.70 L320.00 168.30 L324.20 168.75" stroke="#209fdf" stroke-width="3.9" fill="none" stroke-linejoin="round"/>
<path d="M320.0 166.04 L321.0 165.77 L322.0 165.97 L323.0 166.54 L324.0 166.62 L325.0 166.62 L326.0 166.27 L327.0 166.55 L328.0 166.02 L329.0 166.05 L330.0 165.63 L331.0 165.72 L332.0 166.41 L333.0 166.23 L334.0 166.33 L335.0 165.84 L336.0 165.83 L337.0 166.15 L338.0 165.29 L339.0 165.35 L340.0 164.93 L341.0 164.38 L342.0 164.80 L343.0 164.44 L344.0 164.21 L345.0 163.93 L346.0 164.46 L347.0 164.69 L348.0 164.78 L349.0 164.02 L350.0 163.88 L351.0 164.03 L352.0 164.11 L353.0 163.82 L354.0 164.16 L355.0 164.54 L356.0 163.92 L357.0 163.72 L358.0 164.12 L359.0 164.46 L360.0 164.29 L361.0 164.37 L362.0 164.28 L363.0 164.00 L364.0 164.28 L365.0 163.79 L366.0 163.50 L367.0 164.02 L368.0 163.91 L369.0 163.29 L370.0 164.05 L371.0 163.97 L372.0 163.59 L373.0 164.16 L374.0 163.77 L375.0 163.16 L376.0 163.58 L377.0 163.39 L378.0 163.15 L379.0 163.15 L380.0 163.61 L381.0 163.87 L382.0 163.89 L383.0 163.72 L384.0 163.57 L385.0 163.89 L386.0 163.76 L387.0 163.82 L388.0 163.20 L389.0 163.54 L390.0 163.41 L391.0 162.90 L392.0 163.26 L393.0 163.62 L394.0 163.35 L395.0 162.86 L396.0 163.66 L397.0 163.16 L398.0 163.15 L399.0 163.16 L400.0 162.83 L401.0 163.44 L402.0 163.53 L403.0 163.17 L404.0 163.38 L405.0 162.90 L406.0 162.86 L407.0 162.90 L408.0 163.49 L409.0 163.36 L410.0 163.69 L411.0 163.47 L412.0 162.77 L413.0 162.79 L414.0 162.78 L415.0 163.51 L416.0 163.54 L417.0 163.12 L418.0 162.90 L419.0 163.09 L420.0 163.66 L421.0 162.84 L422.0 163.00 L423.0 163.58 L424.0 163.43 L425.0 162.79 L426.0 163.36 L427.0 163.04 L428.0 163.64 L429.0 162.87 L430.0 163.65 L431.0 162.83 L432.0 163.48 L433.0 163.72 L434.0 162.90 L435.0 163.37 L436.0 163.49 L437.0 163.12 L438.0 163.71 L439.0 163.75 L440.0 163.75 L441.0 163.90 L442.0 163.70 L443.0 163.49 L444.0 163.68 L445.0 163.62 L446.0 163.62 L447.0 163.73 L448.0 164.18 L449.0 164.04 L450.0 163.51 L451.0 163.93 L452.0 163.72 L453.0 164.19 L454.0 164.08 L455.0 163.57 L456.0 163.81 L457.0 163.48 L458.0 163.80 L459.0 163.92 L460.0 164.01 L461.0 164.00 L462.0 163.80 L463.0 163.58 L464.0 163.99 L465.0 163.74 L466.0 164.49 L467.0 164.57 L468.0 164.60 L469.0 163.92 L470.0 164.59 L471.0 164.11 L472.0 163.92 L473.0 164.62 L474.0 164.48 L475.0 163.92 L476.0 164.78 L477.0 164.46 L478.0 164.81 L479.0 164.32 L480.0 164.52 L481.0 165.09 L482.0 164.52 L483.0 165.11 L484.0 164.42 L485.0 165.14 L486.0 165.24 L487.0 165.04 L488.0 164.93 L489.0 164.56 L490.0 165.27 L491.0 164.88 L492.0 165.39 L493.0 164.83 L494.0 165.48 L495.0 164.95 L496.0 165.53 L497.0 165.58 L498.0 165.23 L499.0 165.17 L500.0 165.49 L501.0 165.28 L502.0 165.74 L503.0 165.86 L504.0 165.65 L505.0 165.25 L506.0 165.57 L507.0 165.77 L508.0 165.92 L509.0 165.50 L510.0 166.09 L511.0 165.40 L512.0 165.57 L513.0 165.95 L514.0 166.10 L515.0 165.86 L516.0 166.26 L517.0 165.95 L518.0 166.31 L519.0 166.71 L520.0 166.75 L521.0 166.61 L522.0 166.84 L523.0 166.11 L524.0 166.75 L525.0 166.79 L526.0 166.98 L527.0 166.93 L528.0 166.27 L529.0 167.05 L530.0 167.04 L531.0 167.40 L532.0 166.98 L533.0 167.31 L534.0 167.56 L535.0 167.53 L536.0 167.64 L537.0 167.44 L538.0 167.23 L539.0 167.13 L540.0 167.23 L541.0 167.63 L542.0 167.10 L543.0 167.43 L544.0 168.17 L545.0 167.39 L546.0 167.62 L547.0 168.28 L548.0 167.98 L549.0 167.75 L550.0 168.04 L551.0 168.01 L552.0 168.53 L553.0 168.69 L554.0 168.79 L555.0 168.40 L556.0 168.40 L557.0 168.60 L558.0 168.36 L559.0 168.73 L560.0 168.64 L561.0 168.63 L562.0 169.36 L563.0 168.77 L564.0 168.83 L565.0 169.14 L566.0 169.22 L567.0 169.00 L568.0 169.19 L569.0 169.76 L570.0 169.23 L571.0 169.48 L572.0 170.06 L573.0 169.53 L574.0 169.60 L575.0 169.85 L576.0 169.98 L577.0 169.63 L578.0 169.63 L579.0 170.67 L580.0 169.95 L581.0 170.40 L582.0 170.72 L583.0 170.81 L584.0 170.96 L585.0 170.23 L586.0 170.44 L587.0 170.46 L588.0 171.19 L589.0 171.02 L590.0 171.58 L591.0 171.22 L592.0 171.61 L593.0 171.52 L594.0 171.91 L595.0 171.16 L596.0 171.15 L597.0 171.26 L598.0 171.87 L599.0 171.33 L600.0 172.05 L601.0 172.21 L602.0 172.47 L603.0 172.37 L604.0 172.48 L605.0 172.30 L606.0 172.53 L607.0 172.10 L608.0 172.45 L609.0 172.23 L610.0 172.55 L611.0 172.63 L612.0 172.70 L613.0 173.26 L614.0 172.72 L615.0 173.27 L616.0 173.54 L617.0 172.95 L618.0 173.37 L619.0 173.56 L620.0 174.04 L621.0 174.08 L622.0 173.85 L622.0 180.37 L621.0 180.99 L620.0 180.16 L619.0 180.29 L618.0 180.10 L617.0 179.96 L616.0 180.34 L615.0 179.84 L614.0 179.52 L613.0 179.35 L612.0 179.84 L611.0 179.55 L610.0 179.04 L609.0 179.44 L608.0 179.71 L607.0 179.51 L606.0 179.56 L605.0 178.70 L604.0 178.69 L603.0 179.27 L602.0 179.09 L601.0 178.21 L600.0 178.50 L599.0 178.58 L598.0 178.29 L597.0 178.10 L596.0 178.44 L595.0 177.76 L594.0 178.30 L593.0 178.30 L592.0 177.72 L591.0 177.59 L590.0 177.69 L589.0 177.13 L588.0 177.92 L587.0 177.64 L586.0 177.36 L585.0 176.89 L584.0 177.20 L583.0 177.17 L582.0 177.44 L581.0 176.68 L580.0 177.29 L579.0 176.69 L578.0 177.08 L577.0 176.26 L576.0 176.09 L575.0 176.35 L574.0 176.09 L573.0 176.40 L572.0 175.89 L571.0 175.55 L570.0 175.77 L569.0 175.64 L568.0 175.39 L567.0 175.86 L566.0 175.85 L565.0 175.48 L564.0 176.00 L563.0 175.15 L562.0 175.14 L561.0 175.05 L560.0 174.79 L559.0 175.19 L558.0 175.33 L557.0 174.51 L556.0 175.11 L555.0 174.99 L554.0 175.12 L553.0 174.57 L552.0 174.17 L551.0 174.76 L550.0 174.89 L549.0 174.75 L548.0 174.68 L547.0 174.30 L546.0 174.51 L545.0 174.25 L544.0 174.39 L543.0 174.12 L542.0 173.55 L541.0 173.66 L540.0 174.14 L539.0 173.84 L538.0 173.64 L537.0 173.27 L536.0 172.99 L535.0 173.30 L534.0 173.11 L533.0 173.29 L532.0 173.23 L531.0 173.04 L530.0 172.96 L529.0 173.51 L528.0 173.03 L527.0 173.39 L526.0 172.81 L525.0 172.77 L524.0 172.49 L523.0 172.86 L522.0 172.97 L521.0 172.23 L520.0 172.75 L519.0 172.08 L518.0 172.24 L517.0 172.47 L516.0 172.60 L515.0 172.69 L514.0 172.16 L513.0 172.43 L512.0 171.97 L511.0 171.58 L510.0 171.89 L509.0 171.91 L508.0 171.31 L507.0 171.25 L506.0 171.35 L505.0 171.41 L504.0 171.36 L503.0 171.20 L502.0 171.10 L501.0 171.12 L500.0 170.96 L499.0 171.71 L498.0 171.09 L497.0 171.57 L496.0 171.52 L495.0 171.43 L494.0 171.53 L493.0 170.97 L492.0 170.57 L491.0 171.17 L490.0 171.35 L489.0 170.65 L488.0 171.26 L487.0 170.44 L486.0 171.05 L485.0 170.50 L484.0 171.16 L483.0 171.14 L482.0 170.62 L481.0 170.40 L480.0 170.47 L479.0 170.01 L478.0 170.27 L477.0 170.25 L476.0 170.30 L475.0 170.67 L474.0 170.28 L473.0 170.71 L472.0 170.68 L471.0 169.82 L470.0 170.35 L469.0 170.49 L468.0 170.22 L467.0 169.76 L466.0 169.92 L465.0 169.58 L464.0 170.35 L463.0 169.64 L462.0 170.23 L461.0 170.26 L460.0 169.83 L459.0 169.96 L458.0 169.74 L457.0 169.65 L456.0 169.94 L455.0 169.66 L454.0 169.40 L453.0 169.65 L452.0 169.85 L451.0 169.56 L450.0 169.57 L449.0 169.45 L448.0 169.75 L447.0 169.11 L446.0 168.91 L445.0 169.40 L444.0 169.76 L443.0 169.71 L442.0 169.24 L441.0 169.66 L440.0 169.14 L439.0 169.28 L438.0 168.96 L437.0 168.85 L436.0 169.48 L435.0 169.52 L434.0 169.20 L433.0 168.54 L432.0 169.05 L431.0 169.13 L430.0 169.27 L429.0 169.24 L428.0 168.57 L427.0 168.57 L426.0 169.34 L425.0 168.78 L424.0 169.18 L423.0 169.16 L422.0 168.84 L421.0 169.14 L420.0 169.00 L419.0 169.14 L418.0 168.81 L417.0 169.22 L416.0 168.51 L415.0 168.53 L414.0 168.66 L413.0 169.27 L412.0 168.72 L411.0 168.96 L410.0 168.54 L409.0 168.28 L408.0 168.76 L407.0 168.97 L406.0 169.03 L405.0 169.20 L404.0 168.43 L403.0 168.98 L402.0 168.96 L401.0 168.55 L400.0 168.87 L399.0 169.14 L398.0 168.18 L397.0 168.29 L396.0 169.09 L395.0 168.30 L394.0 168.40 L393.0 168.25 L392.0 168.64 L391.0 169.17 L390.0 168.31 L389.0 168.55 L388.0 168.37 L387.0 169.11 L386.0 168.62 L385.0 168.42 L384.0 168.34 L383.0 168.47 L382.0 168.39 L381.0 168.98 L380.0 168.76 L379.0 169.17 L378.0 169.17 L377.0 168.46 L376.0 169.04 L375.0 169.13 L374.0 169.02 L373.0 168.89 L372.0 168.75 L371.0 168.99 L370.0 168.76 L369.0 168.69 L368.0 169.44 L367.0 168.99 L366.0 169.46 L365.0 169.49 L364.0 169.08 L363.0 169.51 L362.0 168.91 L361.0 169.44 L360.0 168.81 L359.0 169.18 L358.0 169.40 L357.0 169.04 L356.0 169.78 L355.0 169.51 L354.0 169.50 L353.0 169.80 L352.0 169.34 L351.0 169.50 L350.0 169.25 L349.0 169.53 L348.0 169.65 L347.0 169.50 L346.0 169.79 L345.0 169.18 L344.0 169.37 L343.0 169.98 L342.0 169.74 L341.0 170.00 L340.0 169.81 L339.0 170.36 L338.0 170.51 L337.0 170.52 L336.0 170.54 L335.0 170.94 L334.0 171.18 L333.0 171.43 L332.0 170.75 L331.0 170.94 L330.0 170.71 L329.0 171.08 L328.0 171.65 L327.0 170.94 L326.0 171.56 L325.0 170.81 L324.0 171.11 L323.0 171.12 L322.0 170.89 L321.0 170.50 L320.0 170.51 Z" fill="#209fdf"/>
<rect x="725.5" y="110.1" width="1184" height="283.20000000000005" rx="6.5" fill="#222222"/>
<rect x="726" y="110.6" width="1183" height="282.20000000000005" rx="6" fill="#ffffff"/>
<line x1="1062.62" y1="180" x2="1062.62" y2="351.3" stroke="#e0e0e0" stroke-width="1"/>
<line x1="1317.75" y1="180" x2="1317.75" y2="351.3" stroke="#e0e0e0" stroke-width="1"/>
<line x1="1572.88" y1="180" x2="1572.88" y2="351.3" stroke="#e0e0e0" stroke-width="1"/>
<line x1="807.5" y1="180.00" x2="1828" y2="180.00" stroke="#e0e0e0" stroke-width="1"/>
<line x1="807.5" y1="222.82" x2="1828" y2="222.82" stroke="#e0e0e0" stroke-width="1"/>
<line x1="807.5" y1="265.65" x2="1828" y2="265.65" stroke="#e0e0e0" stroke-width="1"/>
<line x1="807.5" y1="308.48" x2="1828" y2="308.48" stroke="#e0e0e0" stroke-width="1"/>
<line x1="807.5" y1="351.3" x2="1828" y2="351.3" stroke="#d6d6d6" stroke-width="1.6"/>
<line x1="807.5" y1="180" x2="807.5" y2="351.3" stroke="#d6d6d6" stroke-width="1.6"/>
<line x1="1828" y1="180" x2="1828" y2="351.3" stroke="#d6d6d6" stroke-width="1.6"/>
<text x="802.0" y="184.4" font-size="13" fill="#2a2a2a" text-anchor="end" >360.0</text>
<line x1="802.5" y1="180.00" x2="807.5" y2="180.00" stroke="#d6d6d6" stroke-width="1"/>
<text x="802.0" y="227.225" font-size="13" fill="#2a2a2a" text-anchor="end" >270.0</text>
<line x1="802.5" y1="222.82" x2="807.5" y2="222.82" stroke="#d6d6d6" stroke-width="1"/>
<text x="802.0" y="270.04999999999995" font-size="13" fill="#2a2a2a" text-anchor="end" >180.0</text>
<line x1="802.5" y1="265.65" x2="807.5" y2="265.65" stroke="#d6d6d6" stroke-width="1"/>
<text x="802.0" y="312.875" font-size="13" fill="#2a2a2a" text-anchor="end" >90.0</text>
<line x1="802.5" y1="308.48" x2="807.5" y2="308.48" stroke="#d6d6d6" stroke-width="1"/>
<text x="802.0" y="355.7" font-size="13" fill="#2a2a2a" text-anchor="end" >0.0</text>
<line x1="802.5" y1="351.30" x2="807.5" y2="351.30" stroke="#d6d6d6" stroke-width="1"/>
<text x="1833.6" y="184.4" font-size="13" fill="#2a2a2a" text-anchor="start" >404.4</text>
<line x1="1828" y1="180.00" x2="1833" y2="180.00" stroke="#d6d6d6" stroke-width="1"/>
<text x="1833.6" y="227.225" font-size="13" fill="#2a2a2a" text-anchor="start" >303.3</text>
<line x1="1828" y1="222.82" x2="1833" y2="222.82" stroke="#d6d6d6" stroke-width="1"/>
<text x="1833.6" y="270.04999999999995" font-size="13" fill="#2a2a2a" text-anchor="start" >202.2</text>
<line x1="1828" y1="265.65" x2="1833" y2="265.65" stroke="#d6d6d6" stroke-width="1"/>
<text x="1833.6" y="312.875" font-size="13" fill="#2a2a2a" text-anchor="start" >101.1</text>
<line x1="1828" y1="308.48" x2="1833" y2="308.48" stroke="#d6d6d6" stroke-width="1"/>
<text x="1833.6" y="355.7" font-size="13" fill="#2a2a2a" text-anchor="start" >0.0</text>
<line x1="1828" y1="351.30" x2="1833" y2="351.30" stroke="#d6d6d6" stroke-width="1"/>
<text x="807.50" y="368" font-size="13" fill="#2a2a2a" text-anchor="middle" >0.0</text>
<line x1="807.50" y1="351.3" x2="807.50" y2="356.3" stroke="#d6d6d6" stroke-width="1"/>
<text x="1062.62" y="368" font-size="13" fill="#2a2a2a" text-anchor="middle" >3.7</text>
<line x1="1062.62" y1="351.3" x2="1062.62" y2="356.3" stroke="#d6d6d6" stroke-width="1"/>
<text x="1317.75" y="368" font-size="13" fill="#2a2a2a" text-anchor="middle" >7.5</text>
<line x1="1317.75" y1="351.3" x2="1317.75" y2="356.3" stroke="#d6d6d6" stroke-width="1"/>
<text x="1572.88" y="368" font-size="13" fill="#2a2a2a" text-anchor="middle" >11.2</text>
<line x1="1572.88" y1="351.3" x2="1572.88" y2="356.3" stroke="#d6d6d6" stroke-width="1"/>
<text x="1828.00" y="368" font-size="13" fill="#2a2a2a" text-anchor="middle" >15.0</text>
<line x1="1828.00" y1="351.3" x2="1828.00" y2="356.3" stroke="#d6d6d6" stroke-width="1"/>
<text transform="translate(757 265.5) rotate(-90)" x="0" y="4.5" font-size="13" font-weight="bold" fill="#2a2a2a" text-anchor="middle">Angle (Degrees)</text>
<text transform="translate(1878 265.5) rotate(-90)" x="0" y="4.5" font-size="13" font-weight="bold" fill="#2a2a2a" text-anchor="middle">Speed (Hz)</text>
<rect x="1058.8999999999999" y="148.4" width="7" height="7" fill="#0000ff" stroke="#000" stroke-width="1.3"/>
<text x="1071" y="155.8" font-size="13" fill="#2a2a2a" text-anchor="start" >Motor Elec Speed (Hz)</text>
<rect x="1211.3" y="148.4" width="7" height="7" fill="#99ca53" stroke="#000" stroke-width="1.3"/>
<text x="1223.4" y="155.8" font-size="13" fill="#2a2a2a" text-anchor="start" >Motor Position (degrees)</text>
<rect x="1380.1" y="148.4" width="7" height="7" fill="#f6a625" stroke="#000" stroke-width="1.3"/>
<text x="1392" y="155.8" font-size="13" fill="#2a2a2a" text-anchor="start" >Controller Position (degrees)</text>
<path d="M807.5 351.3 L812.5 180 L1828 180 L1828 351.3 Z" fill="#f1a425"/>
<rect x="813.00" y="180" width="2.00" height="171.3" fill="#f3ba5c" opacity="0.90"/>
<rect x="817.00" y="180" width="1.88" height="171.3" fill="#f3ba5c" opacity="0.81"/>
<rect x="820.76" y="180" width="1.77" height="171.3" fill="#d8ae34" opacity="0.73"/>
<rect x="824.29" y="180" width="1.66" height="171.3" fill="#f3ba5c" opacity="0.65"/>
<rect x="827.62" y="180" width="1.56" height="171.3" fill="#f3ba5c" opacity="0.58"/>
<rect x="830.74" y="180" width="1.47" height="171.3" fill="#d8ae34" opacity="0.51"/>
<rect x="833.68" y="180" width="1.38" height="171.3" fill="#f3ba5c" opacity="0.44"/>
<rect x="836.43" y="180" width="1.30" height="171.3" fill="#f3ba5c" opacity="0.38"/>
<rect x="839.03" y="180" width="1.22" height="171.3" fill="#d8ae34" opacity="0.32"/>
<rect x="841.47" y="180" width="1.15" height="171.3" fill="#f3ba5c" opacity="0.27"/>
<rect x="843.76" y="180" width="1.08" height="171.3" fill="#f3ba5c" opacity="0.25"/>
<rect x="845.91" y="180" width="1.01" height="171.3" fill="#d8ae34" opacity="0.25"/>
<rect x="812.6" y="180" width="1" height="171.3" fill="#f9e2b8" opacity="0.8"/>
<path d="M808 351 L813 181" stroke="#c8c040" stroke-width="1" opacity="0.7"/>
<defs><linearGradient id="spg" x1="811" y1="0" x2="1000" y2="0" gradientUnits="userSpaceOnUse"><stop offset="0" stop-color="#b07a58" stop-opacity="0.55"/><stop offset="0.35" stop-color="#c08a5a" stop-opacity="0.28"/><stop offset="1" stop-color="#e09a40" stop-opacity="0"/></linearGradient></defs>
<path d="M811.00 346.00 C812.50 343.33 816.83 334.40 820.00 330.00 C823.17 325.60 824.50 323.43 830.00 319.60 C835.50 315.77 845.50 310.93 853.00 307.00 C860.50 303.07 868.00 299.04 875.00 296.00 C882.00 292.96 885.83 290.92 895.00 288.75 C904.17 286.58 919.58 284.46 930.00 283.00 C940.42 281.54 946.67 281.75 957.50 280.00 C968.33 278.25 988.75 273.75 995.00 272.50" stroke="url(#spg)" stroke-width="2.6" fill="none"/>
<rect x="981.8" y="179.5" width="2.4" height="1.6" fill="#a8d8b0" opacity="0.8"/>
<rect x="1457.0" y="350" width="2.0" height="1.6" fill="#a8d8b0" opacity="0.8"/>
<rect x="1033.4" y="179.5" width="2.6" height="1.6" fill="#a8d8b0" opacity="0.8"/>
<rect x="1631.7" y="350" width="2.0" height="1.6" fill="#a8d8b0" opacity="0.8"/>
<rect x="1325.6" y="179.5" width="1.5" height="1.6" fill="#a8d8b0" opacity="0.8"/>
<rect x="818.2" y="350" width="1.7" height="1.6" fill="#a8d8b0" opacity="0.8"/>
<rect x="1406.8" y="179.5" width="1.1" height="1.6" fill="#a8d8b0" opacity="0.8"/>
<rect x="1617.5" y="350" width="1.5" height="1.6" fill="#a8d8b0" opacity="0.8"/>
<rect x="1050.3" y="179.5" width="1.1" height="1.6" fill="#a8d8b0" opacity="0.8"/>
<rect x="1823.5" y="350" width="2.5" height="1.6" fill="#a8d8b0" opacity="0.8"/>
<rect x="1699.7" y="179.5" width="2.2" height="1.6" fill="#a8d8b0" opacity="0.8"/>
<rect x="849.4" y="350" width="1.7" height="1.6" fill="#a8d8b0" opacity="0.8"/>
<rect x="1318.0" y="179.5" width="1.2" height="1.6" fill="#a8d8b0" opacity="0.8"/>
<rect x="1777.4" y="350" width="1.7" height="1.6" fill="#a8d8b0" opacity="0.8"/>
<rect x="971.5" y="179.5" width="2.6" height="1.6" fill="#a8d8b0" opacity="0.8"/>
<rect x="941.3" y="350" width="2.9" height="1.6" fill="#a8d8b0" opacity="0.8"/>
<rect x="1273.1" y="179.5" width="2.1" height="1.6" fill="#a8d8b0" opacity="0.8"/>
<rect x="1161.7" y="350" width="2.0" height="1.6" fill="#a8d8b0" opacity="0.8"/>
<rect x="1004.0" y="179.5" width="1.1" height="1.6" fill="#a8d8b0" opacity="0.8"/>
<rect x="1690.4" y="350" width="1.5" height="1.6" fill="#a8d8b0" opacity="0.8"/>
<rect x="1603.8" y="179.5" width="1.4" height="1.6" fill="#a8d8b0" opacity="0.8"/>
<rect x="1794.4" y="350" width="2.8" height="1.6" fill="#a8d8b0" opacity="0.8"/>
<rect x="1578.1" y="179.5" width="2.5" height="1.6" fill="#a8d8b0" opacity="0.8"/>
<rect x="1402.2" y="350" width="2.5" height="1.6" fill="#a8d8b0" opacity="0.8"/>
<rect x="938.8" y="179.5" width="2.0" height="1.6" fill="#a8d8b0" opacity="0.8"/>
<rect x="1651.1" y="350" width="1.4" height="1.6" fill="#a8d8b0" opacity="0.8"/>
<rect x="1748.3" y="179.5" width="2.8" height="1.6" fill="#a8d8b0" opacity="0.8"/>
<rect x="1229.1" y="350" width="1.7" height="1.6" fill="#a8d8b0" opacity="0.8"/>
<rect x="1271.3" y="179.5" width="1.8" height="1.6" fill="#a8d8b0" opacity="0.8"/>
<rect x="1820.8" y="350" width="1.8" height="1.6" fill="#a8d8b0" opacity="0.8"/>
<rect x="842.1" y="179.5" width="1.2" height="1.6" fill="#a8d8b0" opacity="0.8"/>
<rect x="1541.0" y="350" width="3.0" height="1.6" fill="#a8d8b0" opacity="0.8"/>
<rect x="1316.5" y="179.5" width="2.0" height="1.6" fill="#a8d8b0" opacity="0.8"/>
<rect x="1371.5" y="350" width="2.5" height="1.6" fill="#a8d8b0" opacity="0.8"/>
<rect x="1039.5" y="179.5" width="2.2" height="1.6" fill="#a8d8b0" opacity="0.8"/>
<rect x="1377.6" y="350" width="2.2" height="1.6" fill="#a8d8b0" opacity="0.8"/>
<rect x="997.7" y="179.5" width="1.3" height="1.6" fill="#a8d8b0" opacity="0.8"/>
<rect x="1167.0" y="350" width="2.9" height="1.6" fill="#a8d8b0" opacity="0.8"/>
<rect x="1165.4" y="179.5" width="2.2" height="1.6" fill="#a8d8b0" opacity="0.8"/>
<rect x="1125.0" y="350" width="1.2" height="1.6" fill="#a8d8b0" opacity="0.8"/>
<rect x="881.4" y="179.5" width="2.6" height="1.6" fill="#a8d8b0" opacity="0.8"/>
<rect x="1600.6" y="350" width="1.7" height="1.6" fill="#a8d8b0" opacity="0.8"/>
<rect x="1505.9" y="179.5" width="2.4" height="1.6" fill="#a8d8b0" opacity="0.8"/>
<rect x="1723.6" y="350" width="2.9" height="1.6" fill="#a8d8b0" opacity="0.8"/>
<rect x="1226.5" y="179.5" width="3.0" height="1.6" fill="#a8d8b0" opacity="0.8"/>
<rect x="1787.0" y="350" width="2.2" height="1.6" fill="#a8d8b0" opacity="0.8"/>
<rect x="1707.9" y="179.5" width="2.0" height="1.6" fill="#a8d8b0" opacity="0.8"/>
<rect x="1194.7" y="350" width="1.5" height="1.6" fill="#a8d8b0" opacity="0.8"/>
<rect x="1700.8" y="179.5" width="1.3" height="1.6" fill="#a8d8b0" opacity="0.8"/>
<rect x="885.1" y="350" width="2.6" height="1.6" fill="#a8d8b0" opacity="0.8"/>
<rect x="1597.4" y="179.5" width="2.0" height="1.6" fill="#a8d8b0" opacity="0.8"/>
<rect x="1661.2" y="350" width="1.1" height="1.6" fill="#a8d8b0" opacity="0.8"/>
<rect x="1075.8" y="179.5" width="1.6" height="1.6" fill="#a8d8b0" opacity="0.8"/>
<rect x="1239.2" y="350" width="1.3" height="1.6" fill="#a8d8b0" opacity="0.8"/>
<rect x="885.2" y="179.5" width="1.7" height="1.6" fill="#a8d8b0" opacity="0.8"/>
<rect x="1724.0" y="350" width="3.0" height="1.6" fill="#a8d8b0" opacity="0.8"/>
<rect x="1569.1" y="179.5" width="2.0" height="1.6" fill="#a8d8b0" opacity="0.8"/>
<rect x="1070.0" y="350" width="2.9" height="1.6" fill="#a8d8b0" opacity="0.8"/>
<rect x="1346.4" y="179.5" width="2.5" height="1.6" fill="#a8d8b0" opacity="0.8"/>
<rect x="843.6" y="350" width="1.4" height="1.6" fill="#a8d8b0" opacity="0.8"/>
<rect x="1662.5" y="179.5" width="2.6" height="1.6" fill="#a8d8b0" opacity="0.8"/>
<rect x="1706.1" y="350" width="2.2" height="1.6" fill="#a8d8b0" opacity="0.8"/>
<rect x="1245.8" y="179.5" width="2.2" height="1.6" fill="#a8d8b0" opacity="0.8"/>
<rect x="1673.7" y="350" width="1.6" height="1.6" fill="#a8d8b0" opacity="0.8"/>
<rect x="1355.2" y="179.5" width="1.6" height="1.6" fill="#a8d8b0" opacity="0.8"/>
<rect x="1591.7" y="350" width="1.0" height="1.6" fill="#a8d8b0" opacity="0.8"/>
<rect x="1507.8" y="179.5" width="2.9" height="1.6" fill="#a8d8b0" opacity="0.8"/>
<rect x="838.8" y="350" width="2.2" height="1.6" fill="#a8d8b0" opacity="0.8"/>
<rect x="1465.9" y="179.5" width="2.7" height="1.6" fill="#a8d8b0" opacity="0.8"/>
<rect x="1405.8" y="350" width="1.5" height="1.6" fill="#a8d8b0" opacity="0.8"/>
<rect x="1225.1" y="179.5" width="2.9" height="1.6" fill="#a8d8b0" opacity="0.8"/>
<rect x="1730.6" y="350" width="1.3" height="1.6" fill="#a8d8b0" opacity="0.8"/>
<rect x="910.9" y="179.5" width="1.2" height="1.6" fill="#a8d8b0" opacity="0.8"/>
<rect x="840.6" y="350" width="1.9" height="1.6" fill="#a8d8b0" opacity="0.8"/>
<rect x="957.4" y="179.5" width="2.7" height="1.6" fill="#a8d8b0" opacity="0.8"/>
<rect x="1477.5" y="350" width="1.3" height="1.6" fill="#a8d8b0" opacity="0.8"/>
<rect x="1359.6" y="179.5" width="1.6" height="1.6" fill="#a8d8b0" opacity="0.8"/>
<rect x="1314.3" y="350" width="1.4" height="1.6" fill="#a8d8b0" opacity="0.8"/>
<rect x="982.9" y="179.5" width="1.4" height="1.6" fill="#a8d8b0" opacity="0.8"/>
<rect x="1197.0" y="350" width="2.4" height="1.6" fill="#a8d8b0" opacity="0.8"/>
<rect x="1371.1" y="179.5" width="1.1" height="1.6" fill="#a8d8b0" opacity="0.8"/>
<rect x="1533.7" y="350" width="2.7" height="1.6" fill="#a8d8b0" opacity="0.8"/>
<rect x="1597.8" y="179.5" width="2.6" height="1.6" fill="#a8d8b0" opacity="0.8"/>
<rect x="822.9" y="350" width="1.9" height="1.6" fill="#a8d8b0" opacity="0.8"/>
<rect x="879.2" y="179.5" width="2.5" height="1.6" fill="#a8d8b0" opacity="0.8"/>
<rect x="992.2" y="350" width="2.4" height="1.6" fill="#a8d8b0" opacity="0.8"/>
<rect x="1070.7" y="179.5" width="2.4" height="1.6" fill="#a8d8b0" opacity="0.8"/>
<rect x="1132.1" y="350" width="1.1" height="1.6" fill="#a8d8b0" opacity="0.8"/>
<rect x="1208.1" y="179.5" width="1.6" height="1.6" fill="#a8d8b0" opacity="0.8"/>
<rect x="1725.7" y="350" width="1.6" height="1.6" fill="#a8d8b0" opacity="0.8"/>
<rect x="1323.7" y="179.5" width="2.1" height="1.6" fill="#a8d8b0" opacity="0.8"/>
<rect x="1773.6" y="350" width="1.2" height="1.6" fill="#a8d8b0" opacity="0.8"/>
<rect x="1422.8" y="179.5" width="2.0" height="1.6" fill="#a8d8b0" opacity="0.8"/>
<rect x="1557.7" y="350" width="2.9" height="1.6" fill="#a8d8b0" opacity="0.8"/>
<rect x="1128.6" y="179.5" width="2.4" height="1.6" fill="#a8d8b0" opacity="0.8"/>
<rect x="1346.6" y="350" width="2.1" height="1.6" fill="#a8d8b0" opacity="0.8"/>
<rect x="879.4" y="179.5" width="2.6" height="1.6" fill="#a8d8b0" opacity="0.8"/>
<rect x="1802.6" y="350" width="1.7" height="1.6" fill="#a8d8b0" opacity="0.8"/>
<rect x="1136.6" y="179.5" width="3.0" height="1.6" fill="#a8d8b0" opacity="0.8"/>
<rect x="923.8" y="350" width="1.2" height="1.6" fill="#a8d8b0" opacity="0.8"/>
<rect x="889.1" y="179.5" width="2.6" height="1.6" fill="#a8d8b0" opacity="0.8"/>
<rect x="1583.3" y="350" width="1.9" height="1.6" fill="#a8d8b0" opacity="0.8"/>
<rect x="1443.2" y="179.5" width="1.0" height="1.6" fill="#a8d8b0" opacity="0.8"/>
<rect x="1466.7" y="350" width="1.9" height="1.6" fill="#a8d8b0" opacity="0.8"/>
<rect x="1338.1" y="179.5" width="1.8" height="1.6" fill="#a8d8b0" opacity="0.8"/>
<rect x="1220.9" y="350" width="1.5" height="1.6" fill="#a8d8b0" opacity="0.8"/>
<rect x="864.4" y="179.5" width="1.9" height="1.6" fill="#a8d8b0" opacity="0.8"/>
<rect x="1064.8" y="350" width="2.4" height="1.6" fill="#a8d8b0" opacity="0.8"/>
<rect x="1641.3" y="179.5" width="2.4" height="1.6" fill="#a8d8b0" opacity="0.8"/>
<rect x="1276.0" y="350" width="1.5" height="1.6" fill="#a8d8b0" opacity="0.8"/>
<rect x="1204.6" y="179.5" width="2.0" height="1.6" fill="#a8d8b0" opacity="0.8"/>
<rect x="1453.8" y="350" width="2.9" height="1.6" fill="#a8d8b0" opacity="0.8"/>
<rect x="901.3" y="179.5" width="2.0" height="1.6" fill="#a8d8b0" opacity="0.8"/>
<rect x="1312.3" y="350" width="2.4" height="1.6" fill="#a8d8b0" opacity="0.8"/>
<rect x="1715.3" y="179.5" width="2.6" height="1.6" fill="#a8d8b0" opacity="0.8"/>
<rect x="1448.7" y="350" width="2.5" height="1.6" fill="#a8d8b0" opacity="0.8"/>
<rect x="1490.4" y="179.5" width="2.7" height="1.6" fill="#a8d8b0" opacity="0.8"/>
<rect x="1521.7" y="350" width="2.4" height="1.6" fill="#a8d8b0" opacity="0.8"/>
<rect x="1063.0" y="179.5" width="2.8" height="1.6" fill="#a8d8b0" opacity="0.8"/>
<rect x="1205.2" y="350" width="2.2" height="1.6" fill="#a8d8b0" opacity="0.8"/>
<rect x="1648.9" y="179.5" width="2.9" height="1.6" fill="#a8d8b0" opacity="0.8"/>
<rect x="1815.1" y="350" width="1.0" height="1.6" fill="#a8d8b0" opacity="0.8"/>
<rect x="1131.1" y="179.5" width="1.6" height="1.6" fill="#a8d8b0" opacity="0.8"/>
<rect x="1210.5" y="350" width="1.3" height="1.6" fill="#a8d8b0" opacity="0.8"/>
<rect x="1374.3" y="179.5" width="1.2" height="1.6" fill="#a8d8b0" opacity="0.8"/>
<rect x="1120.9" y="350" width="2.9" height="1.6" fill="#a8d8b0" opacity="0.8"/>
<rect x="1565.5" y="179.5" width="1.9" height="1.6" fill="#a8d8b0" opacity="0.8"/>
<rect x="924.4" y="350" width="2.9" height="1.6" fill="#a8d8b0" opacity="0.8"/>
<rect x="1526.7" y="179.5" width="1.4" height="1.6" fill="#a8d8b0" opacity="0.8"/>
<rect x="1154.0" y="350" width="2.3" height="1.6" fill="#a8d8b0" opacity="0.8"/>
<rect x="1504.1" y="179.5" width="1.5" height="1.6" fill="#a8d8b0" opacity="0.8"/>
<rect x="1776.7" y="350" width="1.6" height="1.6" fill="#a8d8b0" opacity="0.8"/>
<rect x="1072.0" y="179.5" width="2.7" height="1.6" fill="#a8d8b0" opacity="0.8"/>
<rect x="970.1" y="350" width="2.4" height="1.6" fill="#a8d8b0" opacity="0.8"/>
<rect x="1017.1" y="179.5" width="2.2" height="1.6" fill="#a8d8b0" opacity="0.8"/>
<rect x="1095.5" y="350" width="1.8" height="1.6" fill="#a8d8b0" opacity="0.8"/>
<rect x="1766.1" y="179.5" width="1.9" height="1.6" fill="#a8d8b0" opacity="0.8"/>
<rect x="1256.7" y="350" width="2.2" height="1.6" fill="#a8d8b0" opacity="0.8"/>
<rect x="1098.7" y="179.5" width="1.3" height="1.6" fill="#a8d8b0" opacity="0.8"/>
<rect x="1203.9" y="350" width="1.5" height="1.6" fill="#a8d8b0" opacity="0.8"/>
<path d="M809 350 L813 342" stroke="#0000ff" stroke-width="2"/>
<rect x="725.5" y="448.3" width="1184" height="283.09999999999997" rx="6.5" fill="#222222"/>
<rect x="726" y="448.8" width="1183" height="282.09999999999997" rx="6" fill="#ffffff"/>
<line x1="1077.10" y1="518" x2="1077.10" y2="688.9" stroke="#e0e0e0" stroke-width="1"/>
<line x1="1342.20" y1="518" x2="1342.20" y2="688.9" stroke="#e0e0e0" stroke-width="1"/>
<line x1="1607.30" y1="518" x2="1607.30" y2="688.9" stroke="#e0e0e0" stroke-width="1"/>
<line x1="812" y1="518.00" x2="1872.4" y2="518.00" stroke="#e0e0e0" stroke-width="1"/>
<line x1="812" y1="560.73" x2="1872.4" y2="560.73" stroke="#e0e0e0" stroke-width="1"/>
<line x1="812" y1="603.45" x2="1872.4" y2="603.45" stroke="#e0e0e0" stroke-width="1"/>
<line x1="812" y1="646.17" x2="1872.4" y2="646.17" stroke="#e0e0e0" stroke-width="1"/>
<line x1="812" y1="688.9" x2="1872.4" y2="688.9" stroke="#d6d6d6" stroke-width="1.6"/>
<line x1="812" y1="518" x2="812" y2="688.9" stroke="#d6d6d6" stroke-width="1.6"/>
<line x1="1872.4" y1="518" x2="1872.4" y2="688.9" stroke="#e0e0e0" stroke-width="1"/>
<text x="806.5" y="522.4" font-size="13" fill="#2a2a2a" text-anchor="end" >206.7</text>
<line x1="807" y1="518.00" x2="812" y2="518.00" stroke="#d6d6d6" stroke-width="1"/>
<text x="806.5" y="565.125" font-size="13" fill="#2a2a2a" text-anchor="end" >104.7</text>
<line x1="807" y1="560.73" x2="812" y2="560.73" stroke="#d6d6d6" stroke-width="1"/>
<text x="806.5" y="607.85" font-size="13" fill="#2a2a2a" text-anchor="end" >2.7</text>
<line x1="807" y1="603.45" x2="812" y2="603.45" stroke="#d6d6d6" stroke-width="1"/>
<text x="806.5" y="650.5749999999999" font-size="13" fill="#2a2a2a" text-anchor="end" >-99.3</text>
<line x1="807" y1="646.17" x2="812" y2="646.17" stroke="#d6d6d6" stroke-width="1"/>
<text x="806.5" y="693.3" font-size="13" fill="#2a2a2a" text-anchor="end" >-201.3</text>
<line x1="807" y1="688.90" x2="812" y2="688.90" stroke="#d6d6d6" stroke-width="1"/>
<text x="812.00" y="706" font-size="13" fill="#2a2a2a" text-anchor="middle" >0.0</text>
<line x1="812.00" y1="688.9" x2="812.00" y2="693.9" stroke="#d6d6d6" stroke-width="1"/>
<text x="1077.10" y="706" font-size="13" fill="#2a2a2a" text-anchor="middle" >3.7</text>
<line x1="1077.10" y1="688.9" x2="1077.10" y2="693.9" stroke="#d6d6d6" stroke-width="1"/>
<text x="1342.20" y="706" font-size="13" fill="#2a2a2a" text-anchor="middle" >7.5</text>
<line x1="1342.20" y1="688.9" x2="1342.20" y2="693.9" stroke="#d6d6d6" stroke-width="1"/>
<text x="1607.30" y="706" font-size="13" fill="#2a2a2a" text-anchor="middle" >11.2</text>
<line x1="1607.30" y1="688.9" x2="1607.30" y2="693.9" stroke="#d6d6d6" stroke-width="1"/>
<text x="1872.40" y="706" font-size="13" fill="#2a2a2a" text-anchor="middle" >15.0</text>
<line x1="1872.40" y1="688.9" x2="1872.40" y2="693.9" stroke="#d6d6d6" stroke-width="1"/>
<text transform="translate(757 604) rotate(-90)" x="0" y="4.5" font-size="13" font-weight="bold" fill="#2a2a2a" text-anchor="middle">Volts (V)</text>
<rect x="1174.6" y="486.5" width="7" height="7" fill="#209fdf" stroke="#000" stroke-width="1.3"/>
<text x="1187" y="493.9" font-size="13" fill="#2a2a2a" text-anchor="start" >Va (V)</text>
<rect x="1231.8" y="486.5" width="7" height="7" fill="#99ca53" stroke="#000" stroke-width="1.3"/>
<text x="1244.5" y="493.9" font-size="13" fill="#2a2a2a" text-anchor="start" >Vb (V)</text>
<rect x="1290.6" y="486.5" width="7" height="7" fill="#f6a625" stroke="#000" stroke-width="1.3"/>
<text x="1303" y="493.9" font-size="13" fill="#2a2a2a" text-anchor="start" >Vc (V)</text>
<rect x="1346.8999999999999" y="486.5" width="7" height="7" fill="#0000ff" stroke="#000" stroke-width="1.3"/>
<text x="1359" y="493.9" font-size="13" fill="#2a2a2a" text-anchor="start" >Vq (V)</text>
<rect x="1404.8" y="486.5" width="7" height="7" fill="#ff0000" stroke="#000" stroke-width="1.3"/>
<text x="1417" y="493.9" font-size="13" fill="#2a2a2a" text-anchor="start" >Vd (V)</text>
<path d="M812 575 L819 532 L1872.4 532 L1872.4 677.5 L821 677.5 L812 610 Z" fill="#f4a626"/>
<rect x="1419.7" y="529.0" width="1.1" height="3.5" fill="#f4a626"/>
<rect x="1703.1" y="530.5" width="1.7" height="2.0" fill="#f4a626"/>
<rect x="1755.6" y="530.0" width="1.1" height="2.5" fill="#f4a626"/>
<rect x="1505.0" y="530.0" width="2.1" height="2.5" fill="#f4a626"/>
<rect x="1158.4" y="529.0" width="1.5" height="3.5" fill="#f4a626"/>
<rect x="1288.6" y="529.0" width="1.7" height="3.5" fill="#f4a626"/>
<rect x="1137.8" y="531.0" width="1.5" height="1.5" fill="#f4a626"/>
<rect x="1764.0" y="529.0" width="1.7" height="3.5" fill="#f4a626"/>
<rect x="1593.2" y="530.5" width="1.9" height="2.0" fill="#f4a626"/>
<rect x="1115.9" y="531.0" width="1.6" height="1.5" fill="#f4a626"/>
<rect x="1536.1" y="531.2" width="2.0" height="1.3" fill="#f4a626"/>
<rect x="1156.6" y="531.0" width="2.2" height="1.5" fill="#f4a626"/>
<rect x="1860.1" y="531.2" width="1.8" height="1.3" fill="#f4a626"/>
<rect x="951.1" y="531.0" width="1.9" height="1.5" fill="#f4a626"/>
<rect x="1359.4" y="531.0" width="0.8" height="1.5" fill="#f4a626"/>
<rect x="1371.9" y="531.0" width="1.6" height="1.5" fill="#f4a626"/>
<rect x="1229.7" y="529.0" width="1.0" height="3.5" fill="#f4a626"/>
<rect x="856.5" y="529.0" width="1.8" height="3.5" fill="#f4a626"/>
<rect x="1408.5" y="531.2" width="0.9" height="1.3" fill="#f4a626"/>
<rect x="919.7" y="531.0" width="0.8" height="1.5" fill="#f4a626"/>
<rect x="1251.7" y="531.0" width="1.1" height="1.5" fill="#f4a626"/>
<rect x="1024.1" y="529.0" width="1.3" height="3.5" fill="#f4a626"/>
<rect x="1448.3" y="531.0" width="1.6" height="1.5" fill="#f4a626"/>
<rect x="1298.1" y="531.0" width="1.5" height="1.5" fill="#f4a626"/>
<rect x="832.2" y="530.5" width="1.3" height="2.0" fill="#f4a626"/>
<rect x="1640.0" y="531.2" width="1.7" height="1.3" fill="#f4a626"/>
<rect x="1077.5" y="530.0" width="1.7" height="2.5" fill="#f4a626"/>
<rect x="1579.7" y="529.0" width="2.0" height="3.5" fill="#f4a626"/>
<rect x="1775.5" y="529.0" width="1.7" height="3.5" fill="#f4a626"/>
<rect x="857.1" y="531.2" width="2.0" height="1.3" fill="#f4a626"/>
<rect x="1796.9" y="531.0" width="1.4" height="1.5" fill="#f4a626"/>
<rect x="1264.3" y="530.0" width="1.4" height="2.5" fill="#f4a626"/>
<rect x="1317.2" y="530.0" width="2.1" height="2.5" fill="#f4a626"/>
<rect x="1327.0" y="531.2" width="1.9" height="1.3" fill="#f4a626"/>
<rect x="1154.9" y="531.0" width="1.0" height="1.5" fill="#f4a626"/>
<rect x="1826.1" y="529.0" width="1.2" height="3.5" fill="#f4a626"/>
<rect x="1820.1" y="530.0" width="1.0" height="2.5" fill="#f4a626"/>
<rect x="1580.9" y="531.0" width="2.0" height="1.5" fill="#f4a626"/>
<rect x="1276.8" y="531.0" width="2.1" height="1.5" fill="#f4a626"/>
<rect x="1732.7" y="530.0" width="1.7" height="2.5" fill="#f4a626"/>
<rect x="858.5" y="529.0" width="1.7" height="3.5" fill="#f4a626"/>
<rect x="1577.8" y="531.0" width="1.5" height="1.5" fill="#f4a626"/>
<rect x="1657.3" y="530.0" width="0.9" height="2.5" fill="#f4a626"/>
<rect x="945.0" y="531.0" width="1.1" height="1.5" fill="#f4a626"/>
<rect x="1460.2" y="531.2" width="2.1" height="1.3" fill="#f4a626"/>
<rect x="1631.1" y="530.0" width="1.4" height="2.5" fill="#f4a626"/>
<rect x="1375.5" y="531.0" width="0.8" height="1.5" fill="#f4a626"/>
<rect x="1806.2" y="530.5" width="0.8" height="2.0" fill="#f4a626"/>
<rect x="915.4" y="531.0" width="1.4" height="1.5" fill="#f4a626"/>
<rect x="1639.9" y="530.0" width="1.9" height="2.5" fill="#f4a626"/>
<rect x="1651.4" y="531.0" width="1.7" height="1.5" fill="#f4a626"/>
<rect x="1172.6" y="531.2" width="1.9" height="1.3" fill="#f4a626"/>
<rect x="1598.3" y="531.0" width="2.2" height="1.5" fill="#f4a626"/>
<rect x="1612.9" y="531.2" width="1.9" height="1.3" fill="#f4a626"/>
<rect x="1343.5" y="531.0" width="1.7" height="1.5" fill="#f4a626"/>
<rect x="1164.5" y="531" width="1.3" height="1.3" fill="#a8d070" opacity="0.9"/>
<rect x="924.6" y="677" width="1.8" height="1.3" fill="#a8d070" opacity="0.9"/>
<rect x="1106.2" y="531" width="2.7" height="1.3" fill="#7cc8e8" opacity="0.9"/>
<rect x="1700.1" y="677" width="1.5" height="1.3" fill="#7cc8e8" opacity="0.9"/>
<rect x="1256.4" y="531" width="1.3" height="1.3" fill="#a8d070" opacity="0.9"/>
<rect x="1392.9" y="677" width="1.9" height="1.3" fill="#7cc8e8" opacity="0.9"/>
<rect x="829.5" y="531" width="1.0" height="1.3" fill="#7cc8e8" opacity="0.9"/>
<rect x="1175.4" y="677" width="1.7" height="1.3" fill="#a8d070" opacity="0.9"/>
<rect x="1070.8" y="531" width="2.2" height="1.3" fill="#7cc8e8" opacity="0.9"/>
<rect x="1341.6" y="677" width="2.2" height="1.3" fill="#a8d070" opacity="0.9"/>
<rect x="1825.5" y="531" width="1.5" height="1.3" fill="#7cc8e8" opacity="0.9"/>
<rect x="1121.7" y="677" width="1.8" height="1.3" fill="#7cc8e8" opacity="0.9"/>
<rect x="1184.4" y="531" width="1.2" height="1.3" fill="#7cc8e8" opacity="0.9"/>
<rect x="1498.0" y="677" width="2.9" height="1.3" fill="#a8d070" opacity="0.9"/>
<rect x="1074.0" y="531" width="1.8" height="1.3" fill="#7cc8e8" opacity="0.9"/>
<rect x="1526.9" y="677" width="1.3" height="1.3" fill="#7cc8e8" opacity="0.9"/>
<rect x="1649.3" y="531" width="1.8" height="1.3" fill="#7cc8e8" opacity="0.9"/>
<rect x="1708.3" y="677" width="2.0" height="1.3" fill="#7cc8e8" opacity="0.9"/>
<rect x="1737.2" y="531" width="2.6" height="1.3" fill="#a8d070" opacity="0.9"/>
<rect x="1117.4" y="677" width="1.8" height="1.3" fill="#a8d070" opacity="0.9"/>
<rect x="1479.0" y="531" width="1.5" height="1.3" fill="#a8d070" opacity="0.9"/>
<rect x="1661.6" y="677" width="1.9" height="1.3" fill="#a8d070" opacity="0.9"/>
<rect x="1832.8" y="531" width="1.7" height="1.3" fill="#a8d070" opacity="0.9"/>
<rect x="987.9" y="677" width="1.4" height="1.3" fill="#7cc8e8" opacity="0.9"/>
<rect x="930.5" y="531" width="1.4" height="1.3" fill="#a8d070" opacity="0.9"/>
<rect x="1321.5" y="677" width="1.4" height="1.3" fill="#a8d070" opacity="0.9"/>
<rect x="959.9" y="531" width="1.5" height="1.3" fill="#7cc8e8" opacity="0.9"/>
<rect x="1814.1" y="677" width="1.8" height="1.3" fill="#7cc8e8" opacity="0.9"/>
<rect x="1783.7" y="531" width="2.1" height="1.3" fill="#7cc8e8" opacity="0.9"/>
<rect x="1654.7" y="677" width="1.8" height="1.3" fill="#7cc8e8" opacity="0.9"/>
<rect x="1764.5" y="531" width="2.1" height="1.3" fill="#a8d070" opacity="0.9"/>
<rect x="825.7" y="677" width="1.2" height="1.3" fill="#a8d070" opacity="0.9"/>
<rect x="1339.3" y="531" width="2.0" height="1.3" fill="#a8d070" opacity="0.9"/>
<rect x="1010.6" y="677" width="3.0" height="1.3" fill="#a8d070" opacity="0.9"/>
<rect x="1118.7" y="531" width="1.9" height="1.3" fill="#7cc8e8" opacity="0.9"/>
<rect x="1256.2" y="677" width="1.0" height="1.3" fill="#7cc8e8" opacity="0.9"/>
<rect x="1721.7" y="531" width="1.6" height="1.3" fill="#7cc8e8" opacity="0.9"/>
<rect x="1795.5" y="677" width="2.8" height="1.3" fill="#7cc8e8" opacity="0.9"/>
<rect x="1142.6" y="531" width="1.1" height="1.3" fill="#7cc8e8" opacity="0.9"/>
<rect x="1086.1" y="677" width="1.9" height="1.3" fill="#a8d070" opacity="0.9"/>
<rect x="1189.5" y="531" width="1.2" height="1.3" fill="#7cc8e8" opacity="0.9"/>
<rect x="1274.2" y="677" width="1.5" height="1.3" fill="#a8d070" opacity="0.9"/>
<rect x="1480.1" y="531" width="3.0" height="1.3" fill="#a8d070" opacity="0.9"/>
<rect x="1683.7" y="677" width="1.5" height="1.3" fill="#7cc8e8" opacity="0.9"/>
<rect x="1125.1" y="531" width="1.2" height="1.3" fill="#7cc8e8" opacity="0.9"/>
<rect x="854.6" y="677" width="2.4" height="1.3" fill="#7cc8e8" opacity="0.9"/>
<rect x="1685.7" y="531" width="2.0" height="1.3" fill="#a8d070" opacity="0.9"/>
<rect x="1768.1" y="677" width="1.9" height="1.3" fill="#a8d070" opacity="0.9"/>
<rect x="1661.9" y="531" width="1.7" height="1.3" fill="#7cc8e8" opacity="0.9"/>
<rect x="1446.3" y="677" width="2.1" height="1.3" fill="#a8d070" opacity="0.9"/>
<rect x="1595.8" y="531" width="2.3" height="1.3" fill="#a8d070" opacity="0.9"/>
<rect x="1292.4" y="677" width="1.6" height="1.3" fill="#a8d070" opacity="0.9"/>
<rect x="1274.4" y="531" width="1.7" height="1.3" fill="#7cc8e8" opacity="0.9"/>
<rect x="1228.3" y="677" width="1.3" height="1.3" fill="#a8d070" opacity="0.9"/>
<rect x="959.7" y="531" width="1.4" height="1.3" fill="#a8d070" opacity="0.9"/>
<rect x="1189.9" y="677" width="2.5" height="1.3" fill="#a8d070" opacity="0.9"/>
<rect x="1163.0" y="531" width="2.2" height="1.3" fill="#a8d070" opacity="0.9"/>
<rect x="988.0" y="677" width="2.9" height="1.3" fill="#a8d070" opacity="0.9"/>
<rect x="1382.9" y="531" width="2.2" height="1.3" fill="#a8d070" opacity="0.9"/>
<rect x="1013.9" y="677" width="1.3" height="1.3" fill="#a8d070" opacity="0.9"/>
<rect x="1510.7" y="531" width="1.8" height="1.3" fill="#7cc8e8" opacity="0.9"/>
<rect x="1833.7" y="677" width="2.7" height="1.3" fill="#7cc8e8" opacity="0.9"/>
<rect x="1272.4" y="531" width="2.8" height="1.3" fill="#a8d070" opacity="0.9"/>
<rect x="1618.2" y="677" width="1.0" height="1.3" fill="#7cc8e8" opacity="0.9"/>
<rect x="987.9" y="531" width="2.1" height="1.3" fill="#a8d070" opacity="0.9"/>
<rect x="1833.6" y="677" width="1.6" height="1.3" fill="#a8d070" opacity="0.9"/>
<rect x="1002.0" y="531" width="1.6" height="1.3" fill="#7cc8e8" opacity="0.9"/>
<rect x="939.5" y="677" width="1.1" height="1.3" fill="#7cc8e8" opacity="0.9"/>
<rect x="1779.1" y="531" width="2.5" height="1.3" fill="#a8d070" opacity="0.9"/>
<rect x="1388.0" y="677" width="1.2" height="1.3" fill="#a8d070" opacity="0.9"/>
<rect x="1462.5" y="531" width="2.4" height="1.3" fill="#a8d070" opacity="0.9"/>
<rect x="1220.4" y="677" width="2.6" height="1.3" fill="#a8d070" opacity="0.9"/>
<rect x="843.5" y="531" width="1.9" height="1.3" fill="#7cc8e8" opacity="0.9"/>
<rect x="1761.9" y="677" width="2.8" height="1.3" fill="#7cc8e8" opacity="0.9"/>
<rect x="1344.1" y="531" width="1.6" height="1.3" fill="#a8d070" opacity="0.9"/>
<rect x="1757.4" y="677" width="1.7" height="1.3" fill="#7cc8e8" opacity="0.9"/>
<rect x="1364.1" y="531" width="2.3" height="1.3" fill="#7cc8e8" opacity="0.9"/>
<rect x="1037.9" y="677" width="1.3" height="1.3" fill="#7cc8e8" opacity="0.9"/>
<rect x="1159.3" y="531" width="2.8" height="1.3" fill="#7cc8e8" opacity="0.9"/>
<rect x="1839.6" y="677" width="1.3" height="1.3" fill="#7cc8e8" opacity="0.9"/>
<line x1="812" y1="518" x2="812" y2="580" stroke="#0000ff" stroke-width="2"/>
<line x1="812" y1="580" x2="812" y2="689" stroke="#ff0000" stroke-width="2"/>
<path d="M812.00 599.80 L834.30 629.50 L880.00 623.00" stroke="#0000ff" stroke-width="5.5" fill="none" stroke-linejoin="round"/>
<path d="M834.3 626.77 L835.3 626.21 L836.3 626.51 L837.3 626.69 L838.3 626.10 L839.3 626.49 L840.3 626.35 L841.3 625.61 L842.3 625.18 L843.3 625.36 L844.3 625.72 L845.3 625.20 L846.3 625.40 L847.3 625.42 L848.3 624.86 L849.3 624.64 L850.3 624.52 L851.3 624.42 L852.3 623.74 L853.3 623.75 L854.3 624.13 L855.3 624.02 L856.3 623.40 L857.3 623.18 L858.3 622.92 L859.3 623.74 L860.3 622.68 L861.3 622.47 L862.3 623.24 L863.3 622.39 L864.3 622.94 L865.3 621.92 L866.3 622.62 L867.3 622.50 L868.3 621.66 L869.3 621.75 L870.3 621.98 L871.3 621.90 L872.3 621.77 L873.3 621.53 L874.3 620.63 L875.3 621.15 L876.3 621.10 L877.3 620.32 L878.3 620.93 L879.3 620.68 L880.3 619.99 L881.3 620.34 L882.3 620.43 L883.3 620.16 L884.3 619.92 L885.3 619.22 L886.3 619.49 L887.3 619.76 L888.3 618.92 L889.3 619.47 L890.3 618.86 L891.3 619.29 L892.3 618.49 L893.3 618.83 L894.3 619.10 L895.3 618.78 L896.3 618.65 L897.3 618.20 L898.3 618.50 L899.3 618.50 L900.3 617.90 L901.3 617.73 L902.3 617.32 L903.3 618.12 L904.3 617.59 L905.3 617.75 L906.3 617.25 L907.3 617.36 L908.3 616.64 L909.3 616.82 L910.3 617.27 L911.3 617.29 L912.3 616.50 L913.3 617.07 L914.3 616.51 L915.3 616.57 L916.3 616.71 L917.3 615.94 L918.3 615.84 L919.3 615.68 L920.3 616.02 L921.3 615.36 L922.3 615.74 L923.3 615.19 L924.3 615.33 L925.3 615.26 L926.3 615.66 L927.3 614.64 L928.3 614.81 L929.3 614.69 L930.3 614.89 L931.3 615.14 L932.3 615.09 L933.3 614.53 L934.3 614.21 L935.3 614.19 L936.3 614.45 L937.3 614.30 L938.3 614.29 L939.3 613.48 L940.3 613.84 L941.3 613.85 L942.3 613.88 L943.3 613.17 L944.3 612.99 L945.3 613.18 L946.3 613.52 L947.3 612.72 L948.3 612.74 L949.3 613.07 L950.3 612.79 L951.3 612.93 L952.3 612.41 L953.3 612.62 L954.3 611.84 L955.3 612.65 L956.3 611.75 L957.3 611.81 L958.3 612.10 L959.3 612.29 L960.3 611.75 L961.3 611.27 L962.3 611.85 L963.3 611.26 L964.3 611.16 L965.3 610.87 L966.3 610.89 L967.3 611.00 L968.3 611.36 L969.3 610.58 L970.3 610.98 L971.3 610.56 L972.3 610.68 L973.3 610.97 L974.3 610.52 L975.3 610.56 L976.3 611.43 L977.3 611.00 L978.3 611.32 L979.3 610.88 L980.3 610.89 L981.3 611.25 L982.3 611.24 L983.3 611.39 L984.3 611.88 L985.3 611.18 L986.3 611.69 L987.3 611.98 L988.3 611.51 L989.3 612.35 L990.3 611.95 L991.3 612.08 L992.3 611.82 L993.3 611.90 L994.3 612.43 L995.3 612.69 L996.3 612.38 L997.3 612.13 L998.3 612.09 L999.3 612.15 L1000.3 612.95 L1001.3 612.94 L1002.3 612.66 L1003.3 612.52 L1004.3 613.12 L1005.3 612.66 L1006.3 613.36 L1007.3 612.67 L1008.3 613.13 L1009.3 613.23 L1010.3 613.23 L1011.3 612.93 L1012.3 613.57 L1013.3 613.47 L1014.3 613.41 L1015.3 613.63 L1016.3 613.28 L1017.3 614.03 L1018.3 614.24 L1019.3 613.62 L1020.3 614.03 L1021.3 614.38 L1022.3 613.71 L1023.3 613.93 L1024.3 614.58 L1025.3 614.15 L1026.3 614.55 L1027.3 614.87 L1028.3 614.92 L1029.3 614.86 L1030.3 614.64 L1031.3 614.86 L1032.3 614.78 L1033.3 615.17 L1034.3 614.80 L1035.3 614.66 L1036.3 614.72 L1037.3 614.90 L1038.3 614.81 L1039.3 615.46 L1040.3 615.62 L1041.3 615.02 L1042.3 615.74 L1043.3 615.78 L1044.3 615.28 L1045.3 615.39 L1046.3 615.84 L1047.3 616.29 L1048.3 615.70 L1049.3 615.48 L1050.3 616.01 L1051.3 616.08 L1052.3 616.46 L1053.3 616.61 L1054.3 616.23 L1055.3 616.28 L1056.3 616.73 L1057.3 616.14 L1058.3 616.12 L1059.3 617.05 L1060.3 616.72 L1061.3 616.92 L1062.3 616.80 L1063.3 616.78 L1064.3 616.75 L1065.3 617.33 L1066.3 616.84 L1067.3 617.45 L1068.3 617.20 L1069.3 616.89 L1070.3 617.14 L1071.3 617.29 L1072.3 617.38 L1073.3 617.07 L1074.3 617.86 L1075.3 617.43 L1076.3 617.42 L1077.3 617.39 L1078.3 617.64 L1079.3 617.62 L1080.3 617.70 L1081.3 618.13 L1082.3 618.51 L1083.3 617.92 L1084.3 618.38 L1085.3 617.99 L1086.3 618.04 L1087.3 618.21 L1088.3 617.79 L1089.3 618.14 L1090.3 617.90 L1091.3 618.31 L1092.3 618.72 L1093.3 618.97 L1094.3 618.69 L1095.3 618.86 L1096.3 618.61 L1097.3 618.24 L1098.3 618.25 L1099.3 618.48 L1100.3 618.74 L1101.3 619.34 L1102.3 619.27 L1103.3 619.31 L1104.3 618.91 L1105.3 618.62 L1106.3 619.09 L1107.3 619.29 L1108.3 619.05 L1109.3 619.47 L1110.3 619.50 L1111.3 619.60 L1112.3 619.73 L1113.3 619.54 L1114.3 619.23 L1115.3 619.04 L1116.3 620.00 L1117.3 619.69 L1118.3 619.19 L1119.3 619.68 L1120.3 619.53 L1121.3 619.32 L1122.3 619.74 L1123.3 619.77 L1124.3 620.23 L1125.3 619.95 L1126.3 620.08 L1127.3 620.12 L1128.3 620.04 L1129.3 619.89 L1130.3 619.71 L1131.3 620.02 L1132.3 620.69 L1133.3 620.06 L1134.3 620.53 L1135.3 620.25 L1136.3 620.39 L1137.3 620.28 L1138.3 620.83 L1139.3 620.20 L1140.3 621.13 L1141.3 620.94 L1142.3 620.63 L1143.3 620.76 L1144.3 621.26 L1145.3 620.84 L1146.3 621.07 L1147.3 621.27 L1148.3 620.79 L1149.3 621.50 L1150.3 620.82 L1151.3 620.90 L1152.3 621.30 L1153.3 620.96 L1154.3 621.16 L1155.3 621.54 L1156.3 621.17 L1157.3 621.53 L1158.3 621.91 L1159.3 621.98 L1160.3 621.54 L1161.3 621.47 L1162.3 621.43 L1163.3 622.04 L1164.3 622.22 L1165.3 621.63 L1166.3 622.12 L1167.3 622.09 L1168.3 622.13 L1169.3 621.83 L1170.3 621.67 L1171.3 621.73 L1172.3 621.89 L1173.3 622.42 L1174.3 621.85 L1175.3 622.59 L1176.3 622.52 L1177.3 622.54 L1178.3 622.79 L1179.3 622.23 L1180.3 622.24 L1181.3 622.95 L1182.3 622.29 L1183.3 623.20 L1184.3 622.73 L1185.3 622.35 L1186.3 622.56 L1187.3 622.87 L1188.3 623.38 L1189.3 622.78 L1190.3 623.48 L1191.3 623.47 L1192.3 623.01 L1193.3 623.49 L1194.3 623.23 L1195.3 623.41 L1196.3 622.88 L1197.3 623.41 L1198.3 623.23 L1199.3 623.08 L1200.3 623.22 L1201.3 623.24 L1202.3 623.31 L1203.3 623.23 L1204.3 623.72 L1205.3 623.49 L1206.3 623.92 L1207.3 623.64 L1208.3 624.06 L1209.3 624.28 L1210.3 624.24 L1211.3 624.52 L1212.3 624.51 L1213.3 623.90 L1214.3 624.66 L1215.3 624.19 L1216.3 624.79 L1217.3 624.69 L1218.3 624.68 L1219.3 624.37 L1220.3 624.83 L1221.3 624.89 L1222.3 624.80 L1223.3 624.34 L1224.3 624.95 L1225.3 624.34 L1226.3 624.76 L1227.3 624.87 L1228.3 625.35 L1229.3 624.65 L1230.3 624.96 L1231.3 625.25 L1232.3 624.91 L1233.3 625.59 L1234.3 625.26 L1235.3 624.96 L1236.3 625.55 L1237.3 625.42 L1238.3 624.90 L1239.3 625.17 L1240.3 625.57 L1241.3 625.73 L1242.3 625.91 L1243.3 625.10 L1244.3 625.90 L1245.3 625.30 L1246.3 625.57 L1247.3 625.13 L1248.3 625.26 L1249.3 625.36 L1250.3 625.27 L1251.3 625.39 L1252.3 625.71 L1253.3 626.13 L1254.3 626.01 L1255.3 626.28 L1256.3 625.93 L1257.3 626.07 L1258.3 626.36 L1259.3 626.04 L1260.3 625.70 L1261.3 626.55 L1262.3 625.89 L1263.3 626.07 L1264.3 626.66 L1265.3 625.91 L1266.3 626.12 L1267.3 626.40 L1268.3 626.51 L1269.3 626.45 L1270.3 626.62 L1271.3 626.18 L1272.3 626.00 L1273.3 626.26 L1274.3 626.19 L1275.3 626.91 L1276.3 626.41 L1277.3 626.94 L1278.3 626.32 L1279.3 627.10 L1280.3 627.07 L1281.3 626.85 L1282.3 626.37 L1283.3 626.81 L1284.3 626.59 L1285.3 627.01 L1286.3 627.02 L1287.3 627.06 L1288.3 626.52 L1289.3 626.87 L1290.3 627.55 L1291.3 627.26 L1292.3 627.53 L1293.3 627.16 L1294.3 626.88 L1295.3 627.58 L1296.3 626.87 L1297.3 627.46 L1298.3 627.70 L1299.3 626.89 L1300.3 627.20 L1301.3 627.75 L1302.3 627.36 L1303.3 627.93 L1304.3 627.47 L1305.3 627.76 L1306.3 627.76 L1307.3 628.03 L1308.3 628.05 L1309.3 627.68 L1310.3 627.70 L1311.3 627.38 L1312.3 627.51 L1313.3 628.24 L1314.3 628.11 L1315.3 628.19 L1316.3 627.64 L1317.3 627.95 L1318.3 628.50 L1319.3 627.58 L1320.3 627.95 L1321.3 627.97 L1322.3 628.29 L1323.3 627.90 L1324.3 628.54 L1325.3 628.63 L1326.3 628.24 L1327.3 628.33 L1328.3 628.31 L1329.3 628.27 L1330.3 628.28 L1331.3 628.02 L1332.3 628.55 L1333.3 628.43 L1334.3 628.33 L1335.3 628.64 L1336.3 628.32 L1337.3 628.78 L1338.3 628.66 L1339.3 628.73 L1340.3 628.86 L1341.3 629.01 L1342.3 628.65 L1343.3 628.68 L1344.3 628.70 L1345.3 628.91 L1346.3 629.42 L1347.3 629.09 L1348.3 629.58 L1349.3 629.15 L1350.3 629.42 L1351.3 629.53 L1352.3 628.90 L1353.3 629.19 L1354.3 629.48 L1355.3 629.72 L1356.3 629.42 L1357.3 629.94 L1358.3 629.96 L1359.3 629.17 L1360.3 629.92 L1361.3 629.89 L1362.3 629.36 L1363.3 629.90 L1364.3 629.76 L1365.3 630.36 L1366.3 630.13 L1367.3 629.55 L1368.3 630.05 L1369.3 630.27 L1370.3 629.72 L1371.3 629.82 L1372.3 630.23 L1373.3 629.87 L1374.3 630.59 L1375.3 630.64 L1376.3 630.83 L1377.3 630.20 L1378.3 630.07 L1379.3 630.30 L1380.3 630.36 L1381.3 630.66 L1382.3 630.92 L1383.3 630.48 L1384.3 631.06 L1385.3 630.62 L1386.3 630.95 L1387.3 630.49 L1388.3 631.19 L1389.3 630.53 L1390.3 631.23 L1391.3 631.46 L1392.3 631.15 L1393.3 631.11 L1394.3 631.08 L1395.3 631.48 L1396.3 631.68 L1397.3 631.06 L1398.3 631.58 L1399.3 631.71 L1400.3 630.95 L1401.3 631.51 L1402.3 631.62 L1403.3 631.53 L1404.3 631.51 L1405.3 631.73 L1406.3 631.34 L1407.3 631.64 L1408.3 631.49 L1409.3 631.26 L1410.3 631.46 L1411.3 631.66 L1412.3 631.85 L1413.3 631.54 L1414.3 632.12 L1415.3 632.16 L1416.3 631.91 L1417.3 631.84 L1418.3 631.90 L1419.3 632.32 L1420.3 632.51 L1421.3 632.12 L1422.3 632.32 L1423.3 632.54 L1424.3 632.08 L1425.3 631.88 L1426.3 632.56 L1427.3 632.69 L1428.3 632.14 L1429.3 632.53 L1430.3 632.73 L1431.3 632.68 L1432.3 632.72 L1433.3 632.08 L1434.3 632.88 L1435.3 632.60 L1436.3 632.03 L1437.3 632.54 L1438.3 632.07 L1439.3 632.63 L1440.3 633.07 L1441.3 632.25 L1442.3 632.78 L1443.3 632.78 L1444.3 633.19 L1445.3 632.50 L1446.3 633.06 L1447.3 632.76 L1448.3 632.88 L1449.3 633.01 L1450.3 632.42 L1451.3 633.39 L1452.3 632.81 L1453.3 633.15 L1454.3 632.66 L1455.3 632.66 L1456.3 633.19 L1457.3 633.23 L1458.3 633.42 L1459.3 633.48 L1460.3 633.53 L1461.3 633.51 L1462.3 633.45 L1463.3 632.79 L1464.3 632.95 L1465.3 633.46 L1466.3 633.18 L1467.3 633.63 L1468.3 633.75 L1469.3 633.57 L1470.3 633.27 L1471.3 633.66 L1472.3 633.11 L1473.3 633.31 L1474.3 633.20 L1475.3 633.81 L1476.3 634.08 L1477.3 633.87 L1478.3 633.70 L1479.3 633.86 L1480.3 634.24 L1481.3 633.71 L1482.3 634.03 L1483.3 633.82 L1484.3 633.69 L1485.3 633.70 L1486.3 634.31 L1487.3 634.20 L1488.3 634.11 L1489.3 633.68 L1490.3 634.28 L1491.3 634.38 L1492.3 634.61 L1493.3 634.09 L1494.3 633.71 L1495.3 634.05 L1496.3 634.53 L1497.3 634.11 L1498.3 633.94 L1499.3 634.20 L1500.3 634.44 L1501.3 634.83 L1502.3 634.59 L1503.3 634.67 L1504.3 634.58 L1505.3 634.84 L1506.3 634.80 L1507.3 634.73 L1508.3 634.95 L1509.3 634.42 L1510.3 634.45 L1511.3 634.79 L1512.3 635.15 L1513.3 635.19 L1514.3 634.69 L1515.3 634.98 L1516.3 635.31 L1517.3 634.47 L1518.3 635.13 L1519.3 635.23 L1520.3 634.83 L1521.3 635.11 L1522.3 634.56 L1523.3 634.91 L1524.3 635.15 L1525.3 635.32 L1526.3 634.74 L1527.3 634.74 L1528.3 635.54 L1529.3 635.40 L1530.3 634.76 L1531.3 635.58 L1532.3 635.12 L1533.3 635.83 L1534.3 635.46 L1535.3 635.39 L1536.3 635.37 L1537.3 635.38 L1538.3 635.00 L1539.3 635.65 L1540.3 635.72 L1541.3 635.36 L1542.3 635.12 L1543.3 635.96 L1544.3 635.66 L1545.3 635.81 L1546.3 635.46 L1547.3 636.00 L1548.3 635.94 L1549.3 635.78 L1550.3 636.26 L1551.3 636.25 L1552.3 636.27 L1553.3 635.64 L1554.3 636.28 L1555.3 635.60 L1556.3 636.24 L1557.3 635.73 L1558.3 635.84 L1559.3 635.87 L1560.3 636.28 L1561.3 635.80 L1562.3 636.10 L1563.3 635.99 L1564.3 635.90 L1565.3 636.63 L1566.3 636.12 L1567.3 636.63 L1568.3 636.26 L1569.3 635.91 L1570.3 636.22 L1571.3 636.30 L1572.3 636.03 L1573.3 636.94 L1574.3 636.90 L1575.3 636.77 L1576.3 636.09 L1577.3 636.78 L1578.3 636.60 L1579.3 636.79 L1580.3 636.40 L1581.3 636.94 L1582.3 636.64 L1583.3 636.30 L1584.3 636.62 L1585.3 636.54 L1586.3 637.20 L1587.3 636.47 L1588.3 636.94 L1589.3 637.14 L1590.3 636.92 L1591.3 636.89 L1592.3 637.32 L1593.3 637.21 L1594.3 637.55 L1595.3 636.74 L1596.3 637.59 L1597.3 637.21 L1598.3 637.52 L1599.3 637.27 L1600.3 636.97 L1601.3 637.75 L1602.3 637.18 L1603.3 637.59 L1604.3 637.03 L1605.3 637.48 L1606.3 637.23 L1607.3 637.96 L1608.3 637.89 L1609.3 637.68 L1610.3 637.75 L1611.3 638.08 L1612.3 637.16 L1613.3 637.61 L1614.3 637.38 L1615.3 637.79 L1616.3 637.39 L1617.3 637.26 L1618.3 637.32 L1619.3 637.59 L1620.3 637.41 L1621.3 637.77 L1622.3 637.99 L1623.3 637.75 L1624.3 638.06 L1625.3 638.10 L1626.3 637.58 L1627.3 638.41 L1628.3 637.79 L1629.3 637.82 L1630.3 637.91 L1631.3 638.51 L1632.3 638.29 L1633.3 638.65 L1634.3 638.29 L1635.3 638.18 L1636.3 638.54 L1637.3 638.45 L1638.3 638.69 L1639.3 638.39 L1640.3 638.63 L1641.3 638.17 L1642.3 638.63 L1643.3 637.98 L1644.3 638.77 L1645.3 637.99 L1646.3 638.37 L1647.3 638.39 L1648.3 638.44 L1649.3 638.23 L1650.3 638.60 L1651.3 639.02 L1652.3 638.47 L1653.3 638.52 L1654.3 638.83 L1655.3 638.64 L1656.3 638.75 L1657.3 638.66 L1658.3 638.72 L1659.3 638.41 L1660.3 638.90 L1661.3 638.66 L1662.3 638.68 L1663.3 639.05 L1664.3 639.35 L1665.3 639.01 L1666.3 638.69 L1667.3 638.61 L1668.3 638.78 L1669.3 638.61 L1670.3 638.76 L1671.3 639.41 L1672.3 639.23 L1673.3 638.84 L1674.3 639.46 L1675.3 639.69 L1676.3 639.00 L1677.3 639.57 L1678.3 638.98 L1679.3 639.32 L1680.3 639.09 L1681.3 639.55 L1682.3 639.91 L1683.3 639.11 L1684.3 639.88 L1685.3 639.63 L1686.3 639.43 L1687.3 640.00 L1688.3 639.89 L1689.3 639.25 L1690.3 639.96 L1691.3 639.75 L1692.3 639.87 L1693.3 639.60 L1694.3 639.65 L1695.3 640.10 L1696.3 639.62 L1697.3 640.21 L1698.3 639.42 L1699.3 640.03 L1700.3 639.42 L1701.3 639.70 L1702.3 640.16 L1703.3 640.35 L1704.3 640.09 L1705.3 640.14 L1706.3 640.06 L1707.3 640.25 L1708.3 640.39 L1709.3 640.36 L1710.3 640.39 L1711.3 640.02 L1712.3 639.79 L1713.3 640.01 L1714.3 640.33 L1715.3 640.39 L1716.3 640.39 L1717.3 640.57 L1718.3 640.21 L1719.3 640.50 L1720.3 640.04 L1721.3 640.54 L1722.3 640.17 L1723.3 640.42 L1724.3 640.94 L1725.3 640.98 L1726.3 640.72 L1727.3 640.45 L1728.3 640.25 L1729.3 641.15 L1730.3 640.73 L1731.3 640.76 L1732.3 640.58 L1733.3 640.31 L1734.3 640.31 L1735.3 640.50 L1736.3 640.65 L1737.3 641.31 L1738.3 641.01 L1739.3 641.22 L1740.3 641.25 L1741.3 641.34 L1742.3 640.77 L1743.3 641.37 L1744.3 640.94 L1745.3 641.34 L1746.3 640.89 L1747.3 641.52 L1748.3 641.65 L1749.3 640.75 L1750.3 641.70 L1751.3 641.21 L1752.3 641.66 L1753.3 641.50 L1754.3 641.70 L1755.3 641.72 L1756.3 641.37 L1757.3 641.13 L1758.3 641.52 L1759.3 641.74 L1760.3 641.42 L1761.3 641.16 L1762.3 641.18 L1763.3 641.09 L1764.3 641.68 L1765.3 641.25 L1766.3 641.73 L1767.3 642.01 L1768.3 641.46 L1769.3 642.06 L1770.3 642.21 L1771.3 641.97 L1772.3 641.65 L1773.3 642.28 L1774.3 642.27 L1775.3 642.26 L1776.3 642.07 L1777.3 641.77 L1778.3 641.51 L1779.3 641.98 L1780.3 642.11 L1781.3 641.79 L1782.3 642.19 L1783.3 642.11 L1784.3 642.18 L1785.3 642.59 L1786.3 642.60 L1787.3 642.14 L1788.3 642.49 L1789.3 642.37 L1790.3 642.28 L1791.3 642.04 L1792.3 642.81 L1793.3 641.88 L1794.3 642.28 L1795.3 642.53 L1796.3 642.55 L1797.3 642.34 L1798.3 642.66 L1799.3 642.48 L1800.3 642.97 L1801.3 642.80 L1802.3 642.28 L1803.3 642.25 L1804.3 642.85 L1805.3 643.07 L1806.3 642.35 L1807.3 642.89 L1808.3 642.45 L1809.3 643.21 L1810.3 643.24 L1811.3 642.76 L1812.3 642.70 L1813.3 642.43 L1814.3 642.81 L1815.3 642.68 L1816.3 642.77 L1817.3 642.55 L1818.3 642.72 L1819.3 642.77 L1820.3 643.10 L1821.3 643.46 L1822.3 642.87 L1823.3 643.51 L1824.3 642.99 L1825.3 643.57 L1826.3 643.40 L1827.3 643.17 L1828.3 643.55 L1829.3 643.25 L1830.3 643.69 L1831.3 643.36 L1832.3 643.43 L1833.3 643.21 L1834.3 643.42 L1835.3 643.55 L1836.3 643.86 L1837.3 643.83 L1838.3 643.82 L1839.3 643.88 L1840.3 643.48 L1841.3 643.71 L1842.3 643.28 L1843.3 643.57 L1844.3 643.20 L1845.3 643.51 L1846.3 643.97 L1847.3 643.68 L1848.3 644.22 L1849.3 643.93 L1850.3 643.90 L1851.3 643.80 L1852.3 643.48 L1853.3 643.92 L1854.3 643.68 L1855.3 644.16 L1856.3 644.45 L1857.3 643.95 L1858.3 644.21 L1859.3 643.62 L1860.3 643.79 L1861.3 643.84 L1862.3 644.45 L1863.3 644.06 L1864.3 643.93 L1865.3 643.83 L1866.3 644.06 L1867.3 643.83 L1868.3 644.51 L1869.3 644.10 L1870.3 644.61 L1871.3 644.34 L1872.3 644.59 L1872.3 650.13 L1871.3 650.13 L1870.3 649.87 L1869.3 650.09 L1868.3 650.66 L1867.3 650.49 L1866.3 650.11 L1865.3 650.64 L1864.3 650.28 L1863.3 649.79 L1862.3 650.18 L1861.3 649.83 L1860.3 649.69 L1859.3 650.33 L1858.3 649.69 L1857.3 650.06 L1856.3 650.18 L1855.3 650.30 L1854.3 649.53 L1853.3 649.63 L1852.3 649.83 L1851.3 650.32 L1850.3 649.94 L1849.3 650.01 L1848.3 650.09 L1847.3 649.50 L1846.3 649.94 L1845.3 649.42 L1844.3 649.49 L1843.3 649.61 L1842.3 649.47 L1841.3 649.65 L1840.3 649.57 L1839.3 649.38 L1838.3 649.35 L1837.3 649.56 L1836.3 649.69 L1835.3 649.70 L1834.3 649.58 L1833.3 649.79 L1832.3 649.22 L1831.3 648.84 L1830.3 649.66 L1829.3 649.60 L1828.3 649.15 L1827.3 649.63 L1826.3 649.63 L1825.3 648.77 L1824.3 649.17 L1823.3 649.43 L1822.3 648.64 L1821.3 648.87 L1820.3 648.96 L1819.3 648.87 L1818.3 648.91 L1817.3 648.51 L1816.3 649.40 L1815.3 648.80 L1814.3 648.36 L1813.3 649.09 L1812.3 648.33 L1811.3 649.21 L1810.3 648.88 L1809.3 648.99 L1808.3 648.84 L1807.3 648.99 L1806.3 648.47 L1805.3 649.10 L1804.3 648.77 L1803.3 648.47 L1802.3 648.46 L1801.3 648.28 L1800.3 648.08 L1799.3 648.71 L1798.3 648.43 L1797.3 648.49 L1796.3 648.18 L1795.3 648.45 L1794.3 648.79 L1793.3 647.81 L1792.3 648.18 L1791.3 648.23 L1790.3 647.95 L1789.3 648.01 L1788.3 647.76 L1787.3 648.04 L1786.3 648.14 L1785.3 648.42 L1784.3 648.01 L1783.3 647.89 L1782.3 647.93 L1781.3 647.74 L1780.3 647.75 L1779.3 648.33 L1778.3 647.97 L1777.3 648.26 L1776.3 647.83 L1775.3 648.24 L1774.3 647.55 L1773.3 647.68 L1772.3 648.09 L1771.3 648.18 L1770.3 647.29 L1769.3 647.69 L1768.3 647.84 L1767.3 647.92 L1766.3 647.09 L1765.3 648.01 L1764.3 647.64 L1763.3 647.52 L1762.3 647.13 L1761.3 647.05 L1760.3 647.38 L1759.3 647.34 L1758.3 646.92 L1757.3 647.08 L1756.3 647.10 L1755.3 646.87 L1754.3 647.32 L1753.3 647.24 L1752.3 647.49 L1751.3 647.21 L1750.3 647.00 L1749.3 647.52 L1748.3 647.46 L1747.3 647.04 L1746.3 647.32 L1745.3 647.33 L1744.3 647.23 L1743.3 647.11 L1742.3 646.52 L1741.3 646.80 L1740.3 646.75 L1739.3 647.35 L1738.3 646.99 L1737.3 646.77 L1736.3 647.27 L1735.3 646.90 L1734.3 646.62 L1733.3 647.17 L1732.3 646.77 L1731.3 646.46 L1730.3 646.48 L1729.3 646.72 L1728.3 647.01 L1727.3 646.38 L1726.3 646.73 L1725.3 646.35 L1724.3 646.85 L1723.3 646.47 L1722.3 646.75 L1721.3 646.22 L1720.3 646.10 L1719.3 645.95 L1718.3 646.04 L1717.3 646.46 L1716.3 646.70 L1715.3 646.00 L1714.3 645.75 L1713.3 646.26 L1712.3 646.02 L1711.3 646.06 L1710.3 646.44 L1709.3 646.43 L1708.3 646.11 L1707.3 646.21 L1706.3 646.42 L1705.3 645.91 L1704.3 646.24 L1703.3 646.03 L1702.3 645.78 L1701.3 645.70 L1700.3 646.01 L1699.3 645.48 L1698.3 645.87 L1697.3 645.35 L1696.3 645.67 L1695.3 645.31 L1694.3 645.85 L1693.3 645.41 L1692.3 645.42 L1691.3 645.09 L1690.3 645.72 L1689.3 645.75 L1688.3 645.62 L1687.3 645.96 L1686.3 645.84 L1685.3 645.76 L1684.3 645.07 L1683.3 645.69 L1682.3 645.18 L1681.3 644.91 L1680.3 644.93 L1679.3 645.66 L1678.3 645.50 L1677.3 645.50 L1676.3 645.16 L1675.3 645.20 L1674.3 645.26 L1673.3 644.79 L1672.3 645.10 L1671.3 645.35 L1670.3 645.23 L1669.3 644.55 L1668.3 644.97 L1667.3 645.26 L1666.3 645.06 L1665.3 644.61 L1664.3 645.34 L1663.3 645.19 L1662.3 645.29 L1661.3 644.59 L1660.3 645.24 L1659.3 644.37 L1658.3 644.79 L1657.3 644.61 L1656.3 644.17 L1655.3 644.69 L1654.3 644.32 L1653.3 644.48 L1652.3 644.49 L1651.3 644.84 L1650.3 644.55 L1649.3 644.58 L1648.3 644.81 L1647.3 644.11 L1646.3 644.25 L1645.3 643.99 L1644.3 644.18 L1643.3 644.11 L1642.3 644.44 L1641.3 643.92 L1640.3 644.12 L1639.3 644.65 L1638.3 644.65 L1637.3 644.39 L1636.3 644.49 L1635.3 644.53 L1634.3 643.87 L1633.3 644.03 L1632.3 643.93 L1631.3 643.62 L1630.3 643.62 L1629.3 643.97 L1628.3 643.60 L1627.3 643.70 L1626.3 643.66 L1625.3 643.59 L1624.3 643.92 L1623.3 644.07 L1622.3 643.60 L1621.3 643.43 L1620.3 643.20 L1619.3 643.40 L1618.3 643.53 L1617.3 643.20 L1616.3 643.84 L1615.3 643.85 L1614.3 643.75 L1613.3 643.80 L1612.3 642.98 L1611.3 643.15 L1610.3 643.43 L1609.3 643.64 L1608.3 642.93 L1607.3 643.00 L1606.3 642.98 L1605.3 643.61 L1604.3 643.74 L1603.3 643.65 L1602.3 643.31 L1601.3 643.20 L1600.3 643.02 L1599.3 643.01 L1598.3 643.43 L1597.3 643.53 L1596.3 642.69 L1595.3 642.78 L1594.3 642.51 L1593.3 642.68 L1592.3 642.87 L1591.3 642.63 L1590.3 642.47 L1589.3 642.32 L1588.3 642.39 L1587.3 642.49 L1586.3 642.31 L1585.3 642.32 L1584.3 642.69 L1583.3 642.51 L1582.3 642.85 L1581.3 642.45 L1580.3 642.87 L1579.3 642.31 L1578.3 642.45 L1577.3 641.97 L1576.3 642.03 L1575.3 642.61 L1574.3 641.89 L1573.3 642.53 L1572.3 642.78 L1571.3 642.16 L1570.3 642.15 L1569.3 641.84 L1568.3 642.61 L1567.3 641.66 L1566.3 641.84 L1565.3 641.96 L1564.3 642.35 L1563.3 642.15 L1562.3 641.91 L1561.3 642.29 L1560.3 642.19 L1559.3 641.73 L1558.3 641.63 L1557.3 641.74 L1556.3 641.82 L1555.3 641.34 L1554.3 642.12 L1553.3 641.71 L1552.3 641.65 L1551.3 641.87 L1550.3 641.20 L1549.3 641.23 L1548.3 641.25 L1547.3 641.30 L1546.3 641.55 L1545.3 641.27 L1544.3 641.52 L1543.3 641.55 L1542.3 641.72 L1541.3 641.55 L1540.3 641.55 L1539.3 641.70 L1538.3 641.11 L1537.3 641.58 L1536.3 641.34 L1535.3 641.34 L1534.3 640.90 L1533.3 641.17 L1532.3 640.83 L1531.3 640.80 L1530.3 640.69 L1529.3 640.87 L1528.3 640.99 L1527.3 640.49 L1526.3 640.80 L1525.3 641.22 L1524.3 640.78 L1523.3 640.95 L1522.3 641.07 L1521.3 640.85 L1520.3 641.20 L1519.3 640.68 L1518.3 640.85 L1517.3 640.72 L1516.3 640.47 L1515.3 640.35 L1514.3 640.53 L1513.3 640.53 L1512.3 640.41 L1511.3 640.34 L1510.3 639.97 L1509.3 640.47 L1508.3 640.47 L1507.3 640.28 L1506.3 639.92 L1505.3 640.46 L1504.3 640.24 L1503.3 639.90 L1502.3 640.20 L1501.3 640.06 L1500.3 640.04 L1499.3 639.71 L1498.3 639.82 L1497.3 640.51 L1496.3 640.22 L1495.3 640.42 L1494.3 639.77 L1493.3 640.25 L1492.3 640.04 L1491.3 639.42 L1490.3 639.70 L1489.3 639.55 L1488.3 639.68 L1487.3 639.97 L1486.3 639.44 L1485.3 639.87 L1484.3 639.43 L1483.3 639.28 L1482.3 639.54 L1481.3 639.11 L1480.3 639.20 L1479.3 639.26 L1478.3 639.05 L1477.3 639.73 L1476.3 639.82 L1475.3 639.29 L1474.3 638.89 L1473.3 639.57 L1472.3 639.17 L1471.3 638.94 L1470.3 639.02 L1469.3 639.65 L1468.3 638.96 L1467.3 638.68 L1466.3 639.00 L1465.3 638.68 L1464.3 638.78 L1463.3 639.23 L1462.3 638.96 L1461.3 638.96 L1460.3 638.66 L1459.3 638.98 L1458.3 638.75 L1457.3 639.15 L1456.3 639.18 L1455.3 638.77 L1454.3 638.87 L1453.3 638.94 L1452.3 638.28 L1451.3 638.59 L1450.3 638.77 L1449.3 638.47 L1448.3 639.03 L1447.3 638.31 L1446.3 638.29 L1445.3 638.75 L1444.3 638.98 L1443.3 638.03 L1442.3 638.22 L1441.3 638.03 L1440.3 638.10 L1439.3 638.58 L1438.3 637.95 L1437.3 638.53 L1436.3 637.79 L1435.3 637.93 L1434.3 638.09 L1433.3 638.44 L1432.3 638.32 L1431.3 637.85 L1430.3 638.39 L1429.3 638.12 L1428.3 638.03 L1427.3 637.79 L1426.3 637.76 L1425.3 637.65 L1424.3 637.93 L1423.3 638.26 L1422.3 638.13 L1421.3 637.74 L1420.3 637.76 L1419.3 637.39 L1418.3 638.08 L1417.3 637.89 L1416.3 637.18 L1415.3 637.70 L1414.3 637.58 L1413.3 637.85 L1412.3 637.80 L1411.3 637.24 L1410.3 637.14 L1409.3 637.11 L1408.3 637.43 L1407.3 637.73 L1406.3 637.37 L1405.3 637.48 L1404.3 637.44 L1403.3 636.94 L1402.3 637.66 L1401.3 637.45 L1400.3 636.70 L1399.3 637.52 L1398.3 637.13 L1397.3 636.79 L1396.3 636.78 L1395.3 637.25 L1394.3 636.69 L1393.3 636.41 L1392.3 636.84 L1391.3 637.25 L1390.3 636.87 L1389.3 636.85 L1388.3 636.44 L1387.3 636.68 L1386.3 636.71 L1385.3 636.79 L1384.3 636.19 L1383.3 636.11 L1382.3 636.17 L1381.3 635.90 L1380.3 636.71 L1379.3 635.86 L1378.3 636.55 L1377.3 635.95 L1376.3 635.70 L1375.3 636.43 L1374.3 636.14 L1373.3 636.45 L1372.3 635.59 L1371.3 635.72 L1370.3 635.52 L1369.3 636.20 L1368.3 635.44 L1367.3 636.17 L1366.3 635.64 L1365.3 636.00 L1364.3 635.10 L1363.3 635.36 L1362.3 635.78 L1361.3 634.98 L1360.3 635.17 L1359.3 634.83 L1358.3 635.32 L1357.3 635.53 L1356.3 635.60 L1355.3 635.39 L1354.3 635.41 L1353.3 635.42 L1352.3 635.48 L1351.3 634.53 L1350.3 634.82 L1349.3 634.62 L1348.3 635.03 L1347.3 634.68 L1346.3 634.69 L1345.3 634.27 L1344.3 634.46 L1343.3 634.70 L1342.3 634.96 L1341.3 634.08 L1340.3 634.89 L1339.3 634.48 L1338.3 634.82 L1337.3 634.32 L1336.3 634.70 L1335.3 634.81 L1334.3 634.53 L1333.3 634.43 L1332.3 634.12 L1331.3 634.27 L1330.3 633.78 L1329.3 633.64 L1328.3 633.90 L1327.3 633.79 L1326.3 633.67 L1325.3 633.85 L1324.3 633.89 L1323.3 633.41 L1322.3 633.95 L1321.3 634.06 L1320.3 633.59 L1319.3 634.19 L1318.3 633.39 L1317.3 633.26 L1316.3 633.33 L1315.3 633.68 L1314.3 633.97 L1313.3 633.86 L1312.3 633.61 L1311.3 633.96 L1310.3 633.20 L1309.3 633.46 L1308.3 633.77 L1307.3 633.80 L1306.3 633.26 L1305.3 633.69 L1304.3 633.42 L1303.3 632.93 L1302.3 632.85 L1301.3 633.56 L1300.3 633.42 L1299.3 633.06 L1298.3 633.23 L1297.3 632.98 L1296.3 632.99 L1295.3 633.17 L1294.3 632.98 L1293.3 633.13 L1292.3 632.68 L1291.3 632.92 L1290.3 632.56 L1289.3 632.81 L1288.3 632.95 L1287.3 632.83 L1286.3 632.11 L1285.3 632.39 L1284.3 632.84 L1283.3 632.63 L1282.3 632.38 L1281.3 631.99 L1280.3 632.00 L1279.3 632.07 L1278.3 632.40 L1277.3 632.18 L1276.3 632.45 L1275.3 631.80 L1274.3 631.76 L1273.3 631.97 L1272.3 632.16 L1271.3 631.89 L1270.3 631.73 L1269.3 632.16 L1268.3 631.80 L1267.3 631.96 L1266.3 631.68 L1265.3 631.56 L1264.3 632.31 L1263.3 631.74 L1262.3 631.49 L1261.3 631.59 L1260.3 631.83 L1259.3 632.11 L1258.3 631.50 L1257.3 631.76 L1256.3 631.75 L1255.3 631.31 L1254.3 631.28 L1253.3 631.76 L1252.3 631.42 L1251.3 631.07 L1250.3 630.92 L1249.3 631.21 L1248.3 631.06 L1247.3 631.31 L1246.3 631.16 L1245.3 630.75 L1244.3 630.89 L1243.3 631.40 L1242.3 631.37 L1241.3 631.28 L1240.3 631.01 L1239.3 631.43 L1238.3 630.92 L1237.3 630.63 L1236.3 630.49 L1235.3 630.91 L1234.3 631.06 L1233.3 630.70 L1232.3 630.43 L1231.3 631.15 L1230.3 630.63 L1229.3 630.46 L1228.3 630.98 L1227.3 630.20 L1226.3 630.89 L1225.3 630.23 L1224.3 630.72 L1223.3 630.27 L1222.3 630.28 L1221.3 630.45 L1220.3 629.92 L1219.3 629.81 L1218.3 630.26 L1217.3 629.71 L1216.3 629.55 L1215.3 630.30 L1214.3 629.80 L1213.3 629.47 L1212.3 629.89 L1211.3 629.51 L1210.3 630.12 L1209.3 629.52 L1208.3 629.22 L1207.3 629.99 L1206.3 629.10 L1205.3 629.32 L1204.3 629.56 L1203.3 629.45 L1202.3 629.64 L1201.3 629.51 L1200.3 629.32 L1199.3 629.02 L1198.3 629.27 L1197.3 629.05 L1196.3 629.13 L1195.3 628.75 L1194.3 629.13 L1193.3 629.08 L1192.3 628.51 L1191.3 628.96 L1190.3 628.80 L1189.3 629.02 L1188.3 628.15 L1187.3 628.81 L1186.3 628.04 L1185.3 628.57 L1184.3 628.44 L1183.3 628.34 L1182.3 628.06 L1181.3 628.49 L1180.3 628.24 L1179.3 628.17 L1178.3 628.14 L1177.3 627.92 L1176.3 627.84 L1175.3 627.79 L1174.3 628.28 L1173.3 627.73 L1172.3 627.59 L1171.3 627.67 L1170.3 628.13 L1169.3 627.71 L1168.3 627.21 L1167.3 627.77 L1166.3 627.13 L1165.3 627.64 L1164.3 627.20 L1163.3 627.51 L1162.3 626.87 L1161.3 627.04 L1160.3 627.18 L1159.3 626.73 L1158.3 627.47 L1157.3 626.92 L1156.3 627.42 L1155.3 627.00 L1154.3 627.39 L1153.3 626.72 L1152.3 626.56 L1151.3 626.47 L1150.3 626.83 L1149.3 626.28 L1148.3 626.95 L1147.3 626.41 L1146.3 626.50 L1145.3 626.61 L1144.3 626.60 L1143.3 625.95 L1142.3 625.94 L1141.3 626.21 L1140.3 625.80 L1139.3 626.58 L1138.3 626.63 L1137.3 625.79 L1136.3 626.19 L1135.3 626.08 L1134.3 625.74 L1133.3 626.04 L1132.3 626.27 L1131.3 625.57 L1130.3 626.23 L1129.3 625.76 L1128.3 625.61 L1127.3 625.40 L1126.3 625.76 L1125.3 625.17 L1124.3 625.06 L1123.3 625.41 L1122.3 625.03 L1121.3 625.68 L1120.3 625.29 L1119.3 625.71 L1118.3 624.97 L1117.3 625.16 L1116.3 625.54 L1115.3 625.53 L1114.3 624.59 L1113.3 625.39 L1112.3 625.20 L1111.3 624.44 L1110.3 624.37 L1109.3 625.03 L1108.3 624.82 L1107.3 624.50 L1106.3 624.77 L1105.3 624.55 L1104.3 624.14 L1103.3 624.53 L1102.3 624.46 L1101.3 624.87 L1100.3 624.65 L1099.3 623.92 L1098.3 624.44 L1097.3 624.32 L1096.3 624.22 L1095.3 624.57 L1094.3 623.71 L1093.3 623.77 L1092.3 623.93 L1091.3 624.22 L1090.3 623.45 L1089.3 624.15 L1088.3 623.98 L1087.3 623.68 L1086.3 623.82 L1085.3 623.54 L1084.3 624.10 L1083.3 623.73 L1082.3 623.42 L1081.3 623.48 L1080.3 623.04 L1079.3 623.33 L1078.3 623.64 L1077.3 623.71 L1076.3 623.18 L1075.3 623.49 L1074.3 623.57 L1073.3 623.39 L1072.3 623.02 L1071.3 622.86 L1070.3 623.25 L1069.3 623.12 L1068.3 622.27 L1067.3 622.35 L1066.3 622.52 L1065.3 622.50 L1064.3 622.82 L1063.3 621.93 L1062.3 622.28 L1061.3 622.25 L1060.3 622.48 L1059.3 622.59 L1058.3 621.67 L1057.3 622.50 L1056.3 621.64 L1055.3 621.52 L1054.3 621.82 L1053.3 621.28 L1052.3 621.24 L1051.3 621.79 L1050.3 621.79 L1049.3 621.08 L1048.3 621.81 L1047.3 621.03 L1046.3 621.45 L1045.3 620.82 L1044.3 621.05 L1043.3 620.66 L1042.3 621.22 L1041.3 620.56 L1040.3 621.36 L1039.3 621.22 L1038.3 620.54 L1037.3 620.97 L1036.3 620.32 L1035.3 620.64 L1034.3 620.49 L1033.3 620.52 L1032.3 619.98 L1031.3 620.17 L1030.3 620.12 L1029.3 619.82 L1028.3 620.06 L1027.3 620.22 L1026.3 620.04 L1025.3 619.67 L1024.3 619.51 L1023.3 619.24 L1022.3 619.28 L1021.3 619.70 L1020.3 619.33 L1019.3 619.85 L1018.3 619.31 L1017.3 619.28 L1016.3 619.67 L1015.3 619.09 L1014.3 618.67 L1013.3 619.03 L1012.3 619.27 L1011.3 618.92 L1010.3 618.37 L1009.3 618.77 L1008.3 618.40 L1007.3 618.66 L1006.3 618.92 L1005.3 618.90 L1004.3 618.31 L1003.3 618.43 L1002.3 618.32 L1001.3 618.46 L1000.3 618.19 L999.3 617.68 L998.3 618.02 L997.3 618.15 L996.3 618.12 L995.3 617.47 L994.3 618.05 L993.3 617.36 L992.3 617.19 L991.3 617.08 L990.3 617.76 L989.3 617.36 L988.3 617.20 L987.3 617.70 L986.3 617.51 L985.3 617.63 L984.3 617.48 L983.3 617.23 L982.3 617.27 L981.3 616.59 L980.3 616.78 L979.3 617.04 L978.3 616.75 L977.3 617.02 L976.3 616.50 L975.3 616.70 L974.3 616.00 L973.3 616.63 L972.3 616.53 L971.3 616.26 L970.3 616.08 L969.3 615.95 L968.3 616.32 L967.3 616.13 L966.3 616.25 L965.3 617.12 L964.3 616.92 L963.3 616.81 L962.3 616.51 L961.3 616.81 L960.3 616.70 L959.3 616.91 L958.3 617.67 L957.3 617.56 L956.3 617.13 L955.3 617.22 L954.3 617.75 L953.3 618.24 L952.3 618.00 L951.3 618.02 L950.3 617.99 L949.3 617.98 L948.3 618.87 L947.3 618.87 L946.3 618.62 L945.3 618.54 L944.3 618.72 L943.3 619.35 L942.3 618.97 L941.3 619.31 L940.3 619.64 L939.3 619.51 L938.3 619.12 L937.3 619.73 L936.3 619.17 L935.3 620.18 L934.3 619.86 L933.3 619.70 L932.3 620.18 L931.3 620.43 L930.3 620.62 L929.3 620.47 L928.3 620.38 L927.3 620.97 L926.3 620.83 L925.3 620.91 L924.3 620.79 L923.3 621.08 L922.3 621.40 L921.3 621.58 L920.3 621.50 L919.3 621.84 L918.3 621.73 L917.3 622.03 L916.3 621.78 L915.3 622.33 L914.3 622.17 L913.3 622.18 L912.3 622.61 L911.3 622.66 L910.3 621.89 L909.3 622.54 L908.3 622.72 L907.3 623.05 L906.3 622.40 L905.3 622.74 L904.3 622.53 L903.3 622.85 L902.3 622.88 L901.3 623.07 L900.3 623.75 L899.3 623.23 L898.3 623.83 L897.3 623.52 L896.3 624.17 L895.3 624.16 L894.3 624.54 L893.3 623.79 L892.3 624.41 L891.3 624.87 L890.3 624.97 L889.3 624.34 L888.3 625.08 L887.3 624.53 L886.3 625.36 L885.3 625.09 L884.3 625.17 L883.3 625.44 L882.3 625.53 L881.3 625.14 L880.3 625.52 L879.3 625.58 L878.3 626.44 L877.3 626.24 L876.3 626.13 L875.3 626.77 L874.3 626.83 L873.3 626.43 L872.3 626.73 L871.3 627.09 L870.3 627.32 L869.3 627.18 L868.3 627.05 L867.3 627.08 L866.3 627.40 L865.3 628.06 L864.3 627.77 L863.3 627.85 L862.3 628.36 L861.3 628.26 L860.3 628.48 L859.3 628.36 L858.3 629.14 L857.3 628.82 L856.3 628.98 L855.3 628.79 L854.3 629.09 L853.3 629.71 L852.3 630.14 L851.3 629.57 L850.3 630.09 L849.3 630.21 L848.3 630.56 L847.3 630.32 L846.3 630.24 L845.3 630.20 L844.3 630.30 L843.3 631.04 L842.3 631.53 L841.3 630.75 L840.3 631.66 L839.3 631.29 L838.3 631.93 L837.3 631.79 L836.3 632.00 L835.3 632.00 L834.3 632.18 Z" fill="#0000ff"/>
<path d="M812.60 600.00 L820.20 686.40 L836.00 681.00 L880.00 683.70" stroke="#ff0000" stroke-width="4.6" fill="none" stroke-linejoin="round" stroke-linecap="butt"/>
<path d="M836.0 678.68 L837.0 678.29 L838.0 678.84 L839.0 678.94 L840.0 678.41 L841.0 678.67 L842.0 678.97 L843.0 678.49 L844.0 679.37 L845.0 679.30 L846.0 678.70 L847.0 678.74 L848.0 678.68 L849.0 679.43 L850.0 679.27 L851.0 679.25 L852.0 679.51 L853.0 679.62 L854.0 679.18 L855.0 679.07 L856.0 679.56 L857.0 680.04 L858.0 679.80 L859.0 680.10 L860.0 680.11 L861.0 679.82 L862.0 680.35 L863.0 680.31 L864.0 680.41 L865.0 680.59 L866.0 679.77 L867.0 680.07 L868.0 680.80 L869.0 680.10 L870.0 680.33 L871.0 680.62 L872.0 680.21 L873.0 680.95 L874.0 680.84 L875.0 681.14 L876.0 680.73 L877.0 681.18 L878.0 680.88 L879.0 681.16 L880.0 681.24 L881.0 681.48 L882.0 681.60 L883.0 681.70 L884.0 681.28 L885.0 681.86 L886.0 681.62 L887.0 682.03 L888.0 681.97 L889.0 681.89 L890.0 682.15 L891.0 681.92 L892.0 682.35 L893.0 681.92 L894.0 681.97 L895.0 681.88 L896.0 682.58 L897.0 681.77 L898.0 682.48 L899.0 681.94 L900.0 682.24 L901.0 682.61 L902.0 682.65 L903.0 682.81 L904.0 682.75 L905.0 682.23 L906.0 682.05 L907.0 682.34 L908.0 682.48 L909.0 682.37 L910.0 681.93 L911.0 681.96 L912.0 682.47 L913.0 682.74 L914.0 682.40 L915.0 681.88 L916.0 682.70 L917.0 682.61 L918.0 682.41 L919.0 682.18 L920.0 682.71 L921.0 681.84 L922.0 682.22 L923.0 682.35 L924.0 682.47 L925.0 682.01 L926.0 682.15 L927.0 682.22 L928.0 682.04 L929.0 681.75 L930.0 682.50 L931.0 681.82 L932.0 682.33 L933.0 682.32 L934.0 682.56 L935.0 681.88 L936.0 681.88 L937.0 681.59 L938.0 682.16 L939.0 681.74 L940.0 682.28 L941.0 682.45 L942.0 681.55 L943.0 682.28 L944.0 682.09 L945.0 682.50 L946.0 682.19 L947.0 682.27 L948.0 681.65 L949.0 681.50 L950.0 682.01 L951.0 682.02 L952.0 681.94 L953.0 682.09 L954.0 682.27 L955.0 682.42 L956.0 682.27 L957.0 681.85 L958.0 681.54 L959.0 681.90 L960.0 682.20 L961.0 681.76 L962.0 681.44 L963.0 681.53 L964.0 681.54 L965.0 682.32 L966.0 681.44 L967.0 681.87 L968.0 682.11 L969.0 682.34 L970.0 681.58 L971.0 682.11 L972.0 681.62 L973.0 681.40 L974.0 682.21 L975.0 681.37 L976.0 681.46 L977.0 681.56 L978.0 681.69 L979.0 682.14 L980.0 681.67 L981.0 681.61 L982.0 681.74 L983.0 681.36 L984.0 681.42 L985.0 681.65 L986.0 681.28 L987.0 681.26 L988.0 681.53 L989.0 681.51 L990.0 682.11 L991.0 681.76 L992.0 681.39 L993.0 681.72 L994.0 681.59 L995.0 682.07 L996.0 682.00 L997.0 681.83 L998.0 681.92 L999.0 681.82 L1000.0 681.14 L1001.0 681.99 L1002.0 682.03 L1003.0 681.88 L1004.0 682.06 L1005.0 682.02 L1006.0 681.50 L1007.0 681.40 L1008.0 681.35 L1009.0 681.19 L1010.0 681.98 L1011.0 681.51 L1012.0 681.24 L1013.0 681.31 L1014.0 681.58 L1015.0 681.72 L1016.0 681.44 L1017.0 681.70 L1018.0 681.88 L1019.0 681.81 L1020.0 680.99 L1021.0 681.14 L1022.0 681.64 L1023.0 681.49 L1024.0 681.22 L1025.0 681.50 L1026.0 681.68 L1027.0 681.54 L1028.0 681.01 L1029.0 681.79 L1030.0 681.06 L1031.0 681.45 L1032.0 681.87 L1033.0 681.62 L1034.0 680.95 L1035.0 681.48 L1036.0 681.09 L1037.0 681.09 L1038.0 681.19 L1039.0 681.02 L1040.0 681.04 L1041.0 681.25 L1042.0 681.17 L1043.0 681.76 L1044.0 681.44 L1045.0 681.48 L1046.0 681.36 L1047.0 681.16 L1048.0 680.96 L1049.0 681.20 L1050.0 681.01 L1051.0 680.83 L1052.0 681.16 L1053.0 681.47 L1054.0 681.20 L1055.0 681.65 L1056.0 680.95 L1057.0 680.83 L1058.0 680.90 L1059.0 681.10 L1060.0 681.25 L1061.0 680.91 L1062.0 681.22 L1063.0 680.93 L1064.0 680.90 L1065.0 681.22 L1066.0 681.48 L1067.0 681.52 L1068.0 681.01 L1069.0 680.65 L1070.0 681.07 L1071.0 680.77 L1072.0 681.32 L1073.0 681.14 L1074.0 680.68 L1075.0 681.51 L1076.0 681.33 L1077.0 681.03 L1078.0 681.37 L1079.0 680.79 L1080.0 680.93 L1081.0 680.79 L1082.0 680.81 L1083.0 680.87 L1084.0 680.99 L1085.0 680.73 L1086.0 680.91 L1087.0 680.87 L1088.0 681.40 L1089.0 680.69 L1090.0 680.73 L1091.0 681.25 L1092.0 680.75 L1093.0 681.24 L1094.0 680.84 L1095.0 680.65 L1096.0 681.27 L1097.0 680.83 L1098.0 680.71 L1099.0 681.01 L1100.0 680.56 L1101.0 680.86 L1102.0 680.62 L1103.0 681.02 L1104.0 680.81 L1105.0 680.99 L1106.0 680.45 L1107.0 681.25 L1108.0 680.66 L1109.0 680.99 L1110.0 680.53 L1111.0 681.07 L1112.0 680.76 L1113.0 680.30 L1114.0 680.82 L1115.0 680.51 L1116.0 680.99 L1117.0 680.28 L1118.0 680.43 L1119.0 680.42 L1120.0 680.79 L1121.0 680.77 L1122.0 680.34 L1123.0 680.23 L1124.0 680.14 L1125.0 680.51 L1126.0 680.49 L1127.0 680.78 L1128.0 680.64 L1129.0 680.85 L1130.0 680.65 L1131.0 680.72 L1132.0 680.54 L1133.0 680.58 L1134.0 680.39 L1135.0 680.87 L1136.0 680.30 L1137.0 680.02 L1138.0 680.79 L1139.0 680.15 L1140.0 680.20 L1141.0 680.02 L1142.0 679.96 L1143.0 680.76 L1144.0 680.14 L1145.0 680.65 L1146.0 680.37 L1147.0 680.78 L1148.0 680.81 L1149.0 680.50 L1150.0 680.02 L1151.0 680.21 L1152.0 680.09 L1153.0 679.87 L1154.0 680.75 L1155.0 680.56 L1156.0 679.92 L1157.0 680.49 L1158.0 680.71 L1159.0 680.12 L1160.0 680.63 L1161.0 680.64 L1162.0 680.41 L1163.0 680.64 L1164.0 680.32 L1165.0 680.20 L1166.0 680.02 L1167.0 680.23 L1168.0 680.28 L1169.0 680.26 L1170.0 680.37 L1171.0 680.18 L1172.0 680.50 L1173.0 680.28 L1174.0 680.01 L1175.0 680.26 L1176.0 680.19 L1177.0 679.66 L1178.0 680.38 L1179.0 679.65 L1180.0 679.71 L1181.0 679.84 L1182.0 679.71 L1183.0 680.06 L1184.0 680.33 L1185.0 679.66 L1186.0 680.08 L1187.0 680.32 L1188.0 679.66 L1189.0 680.11 L1190.0 680.14 L1191.0 680.21 L1192.0 680.15 L1193.0 680.31 L1194.0 679.79 L1195.0 680.17 L1196.0 679.84 L1197.0 680.33 L1198.0 679.94 L1199.0 679.98 L1200.0 680.13 L1201.0 680.14 L1202.0 679.55 L1203.0 679.95 L1204.0 680.15 L1205.0 679.38 L1206.0 680.00 L1207.0 679.89 L1208.0 679.89 L1209.0 679.91 L1210.0 679.85 L1211.0 679.39 L1212.0 680.02 L1213.0 679.79 L1214.0 679.79 L1215.0 679.52 L1216.0 679.87 L1217.0 679.39 L1218.0 679.35 L1219.0 679.80 L1220.0 679.93 L1221.0 679.27 L1222.0 680.10 L1223.0 679.75 L1224.0 679.31 L1225.0 679.86 L1226.0 679.20 L1227.0 679.49 L1228.0 679.65 L1229.0 679.21 L1230.0 679.36 L1231.0 679.23 L1232.0 680.01 L1233.0 679.52 L1234.0 679.82 L1235.0 679.84 L1236.0 680.02 L1237.0 679.06 L1238.0 679.91 L1239.0 679.09 L1240.0 679.70 L1241.0 679.25 L1242.0 679.52 L1243.0 679.86 L1244.0 679.07 L1245.0 679.45 L1246.0 679.04 L1247.0 679.77 L1248.0 679.23 L1249.0 679.36 L1250.0 678.93 L1251.0 679.23 L1252.0 679.49 L1253.0 679.28 L1254.0 679.75 L1255.0 679.78 L1256.0 679.60 L1257.0 679.17 L1258.0 679.31 L1259.0 679.68 L1260.0 679.06 L1261.0 678.83 L1262.0 679.09 L1263.0 678.78 L1264.0 678.78 L1265.0 679.11 L1266.0 679.17 L1267.0 679.29 L1268.0 679.20 L1269.0 679.43 L1270.0 679.17 L1271.0 678.78 L1272.0 678.98 L1273.0 679.28 L1274.0 679.25 L1275.0 679.02 L1276.0 679.06 L1277.0 679.04 L1278.0 679.33 L1279.0 678.79 L1280.0 679.13 L1281.0 678.66 L1282.0 678.91 L1283.0 679.16 L1284.0 679.42 L1285.0 678.54 L1286.0 678.78 L1287.0 679.02 L1288.0 679.16 L1289.0 678.72 L1290.0 678.62 L1291.0 679.34 L1292.0 678.91 L1293.0 679.12 L1294.0 678.69 L1295.0 678.67 L1296.0 678.92 L1297.0 678.45 L1298.0 678.64 L1299.0 678.65 L1300.0 678.97 L1301.0 678.38 L1302.0 678.61 L1303.0 678.93 L1304.0 678.70 L1305.0 678.57 L1306.0 678.82 L1307.0 678.50 L1308.0 678.62 L1309.0 678.28 L1310.0 679.12 L1311.0 679.06 L1312.0 678.64 L1313.0 678.90 L1314.0 678.16 L1315.0 678.65 L1316.0 678.82 L1317.0 678.53 L1318.0 678.57 L1319.0 678.07 L1320.0 678.71 L1321.0 678.43 L1322.0 678.90 L1323.0 678.45 L1324.0 678.78 L1325.0 678.41 L1326.0 678.80 L1327.0 678.40 L1328.0 678.64 L1329.0 678.83 L1330.0 678.87 L1331.0 678.67 L1332.0 678.79 L1333.0 678.86 L1334.0 678.35 L1335.0 677.98 L1336.0 678.81 L1337.0 678.80 L1338.0 678.69 L1339.0 677.88 L1340.0 677.81 L1341.0 678.41 L1342.0 678.57 L1343.0 678.36 L1344.0 678.47 L1345.0 677.76 L1346.0 678.24 L1347.0 677.78 L1348.0 677.83 L1349.0 678.61 L1350.0 678.32 L1351.0 677.73 L1352.0 678.02 L1353.0 678.53 L1354.0 677.73 L1355.0 677.76 L1356.0 677.95 L1357.0 677.97 L1358.0 678.55 L1359.0 678.01 L1360.0 678.00 L1361.0 678.31 L1362.0 678.07 L1363.0 678.31 L1364.0 677.79 L1365.0 678.36 L1366.0 678.15 L1367.0 677.52 L1368.0 677.69 L1369.0 677.67 L1370.0 677.52 L1371.0 678.23 L1372.0 678.31 L1373.0 677.87 L1374.0 677.67 L1375.0 677.91 L1376.0 677.45 L1377.0 677.99 L1378.0 678.06 L1379.0 678.24 L1380.0 678.32 L1381.0 677.85 L1382.0 677.84 L1383.0 678.09 L1384.0 678.04 L1385.0 677.47 L1386.0 678.26 L1387.0 677.29 L1388.0 677.71 L1389.0 677.72 L1390.0 677.54 L1391.0 677.64 L1392.0 677.71 L1393.0 677.66 L1394.0 677.45 L1395.0 677.91 L1396.0 677.37 L1397.0 677.32 L1398.0 677.56 L1399.0 677.19 L1400.0 677.96 L1401.0 677.48 L1402.0 677.42 L1403.0 677.24 L1404.0 677.68 L1405.0 677.42 L1406.0 677.03 L1407.0 677.67 L1408.0 677.42 L1409.0 677.68 L1410.0 677.25 L1411.0 677.51 L1412.0 677.33 L1413.0 677.26 L1414.0 677.69 L1415.0 677.91 L1416.0 677.89 L1417.0 677.62 L1418.0 677.14 L1419.0 677.19 L1420.0 677.65 L1421.0 677.28 L1422.0 677.48 L1423.0 677.80 L1424.0 677.42 L1425.0 677.15 L1426.0 677.44 L1427.0 677.09 L1428.0 677.40 L1429.0 677.15 L1430.0 677.60 L1431.0 677.40 L1432.0 676.95 L1433.0 676.97 L1434.0 677.11 L1435.0 677.47 L1436.0 677.07 L1437.0 677.12 L1438.0 677.14 L1439.0 676.76 L1440.0 677.17 L1441.0 677.56 L1442.0 677.50 L1443.0 676.91 L1444.0 677.53 L1445.0 677.25 L1446.0 676.97 L1447.0 677.44 L1448.0 677.19 L1449.0 676.71 L1450.0 677.22 L1451.0 676.71 L1452.0 676.59 L1453.0 677.41 L1454.0 676.56 L1455.0 676.47 L1456.0 676.75 L1457.0 677.00 L1458.0 677.07 L1459.0 676.46 L1460.0 677.04 L1461.0 677.22 L1462.0 676.96 L1463.0 676.53 L1464.0 677.12 L1465.0 676.64 L1466.0 676.81 L1467.0 676.70 L1468.0 676.45 L1469.0 677.01 L1470.0 676.33 L1471.0 676.77 L1472.0 677.16 L1473.0 676.82 L1474.0 676.57 L1475.0 676.69 L1476.0 676.46 L1477.0 676.97 L1478.0 676.71 L1479.0 676.45 L1480.0 676.38 L1481.0 676.46 L1482.0 676.57 L1483.0 676.99 L1484.0 676.67 L1485.0 676.89 L1486.0 676.96 L1487.0 676.98 L1488.0 676.30 L1489.0 676.77 L1490.0 676.13 L1491.0 676.45 L1492.0 676.52 L1493.0 676.39 L1494.0 676.35 L1495.0 676.74 L1496.0 676.73 L1497.0 676.52 L1498.0 676.91 L1499.0 676.43 L1500.0 676.24 L1501.0 676.75 L1502.0 676.21 L1503.0 676.74 L1504.0 676.62 L1505.0 676.57 L1506.0 676.59 L1507.0 675.97 L1508.0 676.68 L1509.0 675.89 L1510.0 676.24 L1511.0 676.75 L1512.0 676.55 L1513.0 676.64 L1514.0 675.94 L1515.0 676.06 L1516.0 676.23 L1517.0 676.03 L1518.0 676.03 L1519.0 675.75 L1520.0 675.96 L1521.0 676.22 L1522.0 675.84 L1523.0 676.30 L1524.0 676.22 L1525.0 675.70 L1526.0 676.54 L1527.0 676.41 L1528.0 676.57 L1529.0 676.16 L1530.0 675.80 L1531.0 676.34 L1532.0 676.47 L1533.0 676.46 L1534.0 676.03 L1535.0 675.55 L1536.0 675.82 L1537.0 676.39 L1538.0 676.11 L1539.0 675.69 L1540.0 676.03 L1541.0 676.32 L1542.0 675.68 L1543.0 675.95 L1544.0 675.74 L1545.0 675.70 L1546.0 675.51 L1547.0 675.90 L1548.0 676.16 L1549.0 675.81 L1550.0 675.38 L1551.0 675.48 L1552.0 675.70 L1553.0 675.88 L1554.0 676.07 L1555.0 675.68 L1556.0 675.38 L1557.0 675.69 L1558.0 675.32 L1559.0 675.26 L1560.0 676.08 L1561.0 675.69 L1562.0 675.29 L1563.0 675.18 L1564.0 676.00 L1565.0 675.29 L1566.0 675.36 L1567.0 675.72 L1568.0 675.39 L1569.0 675.31 L1570.0 675.86 L1571.0 675.96 L1572.0 675.36 L1573.0 675.45 L1574.0 675.34 L1575.0 675.05 L1576.0 675.70 L1577.0 675.64 L1578.0 675.14 L1579.0 675.02 L1580.0 675.60 L1581.0 675.15 L1582.0 675.77 L1583.0 675.17 L1584.0 675.48 L1585.0 675.05 L1586.0 675.84 L1587.0 675.62 L1588.0 675.70 L1589.0 675.55 L1590.0 675.28 L1591.0 675.47 L1592.0 675.01 L1593.0 675.74 L1594.0 675.56 L1595.0 675.35 L1596.0 675.34 L1597.0 675.56 L1598.0 675.63 L1599.0 675.19 L1600.0 674.88 L1601.0 675.34 L1602.0 674.91 L1603.0 674.98 L1604.0 675.06 L1605.0 675.48 L1606.0 674.80 L1607.0 675.26 L1608.0 675.26 L1609.0 675.48 L1610.0 675.14 L1611.0 675.31 L1612.0 675.09 L1613.0 674.75 L1614.0 675.32 L1615.0 674.81 L1616.0 675.36 L1617.0 674.95 L1618.0 674.74 L1619.0 674.62 L1620.0 675.08 L1621.0 674.57 L1622.0 674.75 L1623.0 674.99 L1624.0 675.07 L1625.0 674.70 L1626.0 674.47 L1627.0 674.54 L1628.0 675.21 L1629.0 674.64 L1630.0 674.80 L1631.0 674.77 L1632.0 674.49 L1633.0 674.40 L1634.0 674.76 L1635.0 674.81 L1636.0 674.94 L1637.0 674.83 L1638.0 675.07 L1639.0 674.51 L1640.0 674.62 L1641.0 675.09 L1642.0 674.32 L1643.0 674.35 L1644.0 674.71 L1645.0 674.15 L1646.0 674.14 L1647.0 674.43 L1648.0 674.92 L1649.0 674.75 L1650.0 674.18 L1651.0 674.92 L1652.0 674.44 L1653.0 674.21 L1654.0 674.52 L1655.0 674.96 L1656.0 674.35 L1657.0 674.05 L1658.0 674.35 L1659.0 674.25 L1660.0 674.47 L1661.0 674.85 L1662.0 674.37 L1663.0 674.24 L1664.0 674.20 L1665.0 674.13 L1666.0 673.87 L1667.0 674.39 L1668.0 674.37 L1669.0 674.17 L1670.0 674.20 L1671.0 674.38 L1672.0 673.84 L1673.0 674.66 L1674.0 674.17 L1675.0 673.91 L1676.0 673.88 L1677.0 674.52 L1678.0 674.46 L1679.0 674.44 L1680.0 674.16 L1681.0 674.54 L1682.0 674.07 L1683.0 674.46 L1684.0 673.86 L1685.0 674.20 L1686.0 673.67 L1687.0 674.35 L1688.0 673.91 L1689.0 674.27 L1690.0 674.18 L1691.0 674.03 L1692.0 674.00 L1693.0 674.18 L1694.0 673.65 L1695.0 674.30 L1696.0 674.26 L1697.0 673.84 L1698.0 674.08 L1699.0 673.60 L1700.0 674.07 L1701.0 674.25 L1702.0 673.73 L1703.0 673.73 L1704.0 673.51 L1705.0 673.63 L1706.0 673.98 L1707.0 673.32 L1708.0 673.52 L1709.0 673.34 L1710.0 673.38 L1711.0 673.81 L1712.0 673.79 L1713.0 673.61 L1714.0 673.36 L1715.0 674.11 L1716.0 673.96 L1717.0 673.18 L1718.0 673.58 L1719.0 673.54 L1720.0 673.61 L1721.0 674.00 L1722.0 673.33 L1723.0 674.01 L1724.0 673.10 L1725.0 673.18 L1726.0 673.75 L1727.0 673.65 L1728.0 673.83 L1729.0 673.51 L1730.0 673.19 L1731.0 673.23 L1732.0 673.88 L1733.0 673.56 L1734.0 673.38 L1735.0 673.03 L1736.0 673.44 L1737.0 673.66 L1738.0 673.84 L1739.0 673.28 L1740.0 673.56 L1741.0 673.39 L1742.0 673.40 L1743.0 672.83 L1744.0 673.11 L1745.0 673.09 L1746.0 673.41 L1747.0 673.44 L1748.0 673.70 L1749.0 673.02 L1750.0 672.90 L1751.0 673.20 L1752.0 672.95 L1753.0 673.03 L1754.0 673.40 L1755.0 673.21 L1756.0 672.67 L1757.0 672.82 L1758.0 673.19 L1759.0 673.36 L1760.0 672.87 L1761.0 673.40 L1762.0 672.66 L1763.0 673.36 L1764.0 672.97 L1765.0 673.47 L1766.0 672.62 L1767.0 672.56 L1768.0 673.28 L1769.0 673.01 L1770.0 672.97 L1771.0 672.93 L1772.0 673.07 L1773.0 672.71 L1774.0 672.66 L1775.0 673.04 L1776.0 672.79 L1777.0 672.91 L1778.0 672.96 L1779.0 672.55 L1780.0 672.43 L1781.0 673.00 L1782.0 672.77 L1783.0 673.15 L1784.0 672.78 L1785.0 672.39 L1786.0 672.92 L1787.0 673.02 L1788.0 672.58 L1789.0 672.83 L1790.0 672.44 L1791.0 672.31 L1792.0 672.32 L1793.0 672.58 L1794.0 672.68 L1795.0 672.19 L1796.0 672.46 L1797.0 672.16 L1798.0 672.61 L1799.0 672.30 L1800.0 672.12 L1801.0 672.33 L1802.0 672.81 L1803.0 672.48 L1804.0 672.44 L1805.0 672.33 L1806.0 672.18 L1807.0 672.95 L1808.0 672.95 L1809.0 672.56 L1810.0 672.02 L1811.0 672.14 L1812.0 672.48 L1813.0 672.67 L1814.0 672.51 L1815.0 672.84 L1816.0 672.47 L1817.0 671.98 L1818.0 672.59 L1819.0 672.01 L1820.0 672.71 L1821.0 671.86 L1822.0 672.22 L1823.0 671.78 L1824.0 672.70 L1825.0 672.48 L1826.0 672.44 L1827.0 672.65 L1828.0 672.56 L1829.0 671.91 L1830.0 672.55 L1831.0 671.79 L1832.0 672.49 L1833.0 672.32 L1834.0 672.29 L1835.0 671.93 L1836.0 671.69 L1837.0 671.83 L1838.0 671.71 L1839.0 672.44 L1840.0 672.34 L1841.0 672.50 L1842.0 671.81 L1843.0 671.63 L1844.0 671.61 L1845.0 672.05 L1846.0 672.30 L1847.0 672.16 L1848.0 672.04 L1849.0 672.23 L1850.0 672.14 L1851.0 671.67 L1852.0 672.08 L1853.0 671.69 L1854.0 671.41 L1855.0 672.25 L1856.0 671.60 L1857.0 672.19 L1858.0 672.16 L1859.0 671.99 L1860.0 671.57 L1861.0 671.98 L1862.0 672.05 L1863.0 671.37 L1864.0 671.79 L1865.0 671.29 L1866.0 671.80 L1867.0 671.93 L1868.0 672.05 L1869.0 671.26 L1870.0 671.43 L1871.0 671.62 L1872.0 671.11 L1872.0 678.22 L1871.0 677.99 L1870.0 677.72 L1869.0 678.26 L1868.0 677.70 L1867.0 678.27 L1866.0 677.58 L1865.0 677.49 L1864.0 677.91 L1863.0 677.82 L1862.0 677.60 L1861.0 677.47 L1860.0 678.38 L1859.0 678.08 L1858.0 677.62 L1857.0 678.35 L1856.0 678.11 L1855.0 677.54 L1854.0 678.18 L1853.0 677.99 L1852.0 678.33 L1851.0 678.27 L1850.0 677.76 L1849.0 678.34 L1848.0 677.89 L1847.0 678.51 L1846.0 677.66 L1845.0 678.49 L1844.0 678.17 L1843.0 678.42 L1842.0 678.29 L1841.0 677.85 L1840.0 678.41 L1839.0 678.12 L1838.0 678.33 L1837.0 678.57 L1836.0 677.92 L1835.0 677.78 L1834.0 678.04 L1833.0 678.57 L1832.0 678.40 L1831.0 677.81 L1830.0 678.42 L1829.0 677.84 L1828.0 678.01 L1827.0 678.61 L1826.0 678.51 L1825.0 678.49 L1824.0 678.10 L1823.0 678.42 L1822.0 678.55 L1821.0 678.65 L1820.0 678.02 L1819.0 678.01 L1818.0 678.84 L1817.0 678.66 L1816.0 678.23 L1815.0 678.51 L1814.0 678.39 L1813.0 678.47 L1812.0 678.43 L1811.0 678.26 L1810.0 678.72 L1809.0 678.62 L1808.0 678.83 L1807.0 678.70 L1806.0 678.16 L1805.0 678.17 L1804.0 678.70 L1803.0 678.66 L1802.0 678.63 L1801.0 678.20 L1800.0 678.61 L1799.0 678.97 L1798.0 678.39 L1797.0 678.39 L1796.0 679.14 L1795.0 678.57 L1794.0 679.04 L1793.0 678.53 L1792.0 679.11 L1791.0 678.62 L1790.0 678.95 L1789.0 679.14 L1788.0 678.67 L1787.0 678.46 L1786.0 679.15 L1785.0 679.23 L1784.0 678.48 L1783.0 678.77 L1782.0 679.32 L1781.0 678.67 L1780.0 679.33 L1779.0 679.08 L1778.0 678.90 L1777.0 678.91 L1776.0 678.90 L1775.0 679.09 L1774.0 679.51 L1773.0 679.23 L1772.0 678.74 L1771.0 679.26 L1770.0 678.78 L1769.0 678.87 L1768.0 678.72 L1767.0 678.63 L1766.0 678.68 L1765.0 679.27 L1764.0 678.87 L1763.0 678.85 L1762.0 679.11 L1761.0 679.54 L1760.0 678.92 L1759.0 679.46 L1758.0 679.58 L1757.0 679.20 L1756.0 679.28 L1755.0 679.25 L1754.0 679.31 L1753.0 679.32 L1752.0 679.51 L1751.0 679.17 L1750.0 679.25 L1749.0 678.87 L1748.0 678.86 L1747.0 678.90 L1746.0 679.68 L1745.0 679.10 L1744.0 679.35 L1743.0 679.77 L1742.0 679.57 L1741.0 679.14 L1740.0 679.58 L1739.0 679.63 L1738.0 679.68 L1737.0 679.88 L1736.0 679.87 L1735.0 679.97 L1734.0 679.46 L1733.0 679.57 L1732.0 679.38 L1731.0 679.85 L1730.0 679.26 L1729.0 679.90 L1728.0 680.07 L1727.0 679.22 L1726.0 679.37 L1725.0 679.85 L1724.0 679.25 L1723.0 679.27 L1722.0 679.80 L1721.0 679.49 L1720.0 679.84 L1719.0 679.44 L1718.0 680.09 L1717.0 680.16 L1716.0 679.44 L1715.0 680.06 L1714.0 680.07 L1713.0 679.65 L1712.0 679.50 L1711.0 680.03 L1710.0 679.42 L1709.0 679.54 L1708.0 680.27 L1707.0 679.35 L1706.0 679.51 L1705.0 679.40 L1704.0 680.22 L1703.0 679.55 L1702.0 679.76 L1701.0 680.11 L1700.0 680.41 L1699.0 679.47 L1698.0 679.60 L1697.0 679.76 L1696.0 679.51 L1695.0 680.46 L1694.0 680.22 L1693.0 680.20 L1692.0 680.43 L1691.0 680.18 L1690.0 679.59 L1689.0 680.02 L1688.0 680.28 L1687.0 680.26 L1686.0 680.08 L1685.0 679.95 L1684.0 680.23 L1683.0 679.98 L1682.0 680.25 L1681.0 680.49 L1680.0 680.08 L1679.0 679.75 L1678.0 680.21 L1677.0 680.65 L1676.0 680.29 L1675.0 680.31 L1674.0 680.21 L1673.0 680.67 L1672.0 680.53 L1671.0 680.74 L1670.0 680.68 L1669.0 680.77 L1668.0 680.12 L1667.0 680.51 L1666.0 680.46 L1665.0 680.03 L1664.0 680.26 L1663.0 680.62 L1662.0 680.74 L1661.0 680.50 L1660.0 679.94 L1659.0 680.15 L1658.0 680.44 L1657.0 680.72 L1656.0 680.25 L1655.0 680.88 L1654.0 680.55 L1653.0 680.30 L1652.0 680.29 L1651.0 680.54 L1650.0 680.48 L1649.0 680.58 L1648.0 680.68 L1647.0 681.01 L1646.0 680.43 L1645.0 680.81 L1644.0 680.97 L1643.0 680.28 L1642.0 680.83 L1641.0 680.41 L1640.0 681.07 L1639.0 680.58 L1638.0 680.35 L1637.0 680.72 L1636.0 680.95 L1635.0 680.51 L1634.0 680.58 L1633.0 680.41 L1632.0 680.46 L1631.0 681.17 L1630.0 681.17 L1629.0 681.23 L1628.0 681.23 L1627.0 681.07 L1626.0 680.67 L1625.0 680.89 L1624.0 680.77 L1623.0 681.30 L1622.0 680.88 L1621.0 681.21 L1620.0 681.18 L1619.0 680.67 L1618.0 680.80 L1617.0 680.78 L1616.0 680.55 L1615.0 680.63 L1614.0 680.65 L1613.0 680.82 L1612.0 680.92 L1611.0 680.68 L1610.0 680.79 L1609.0 681.47 L1608.0 680.97 L1607.0 680.78 L1606.0 680.94 L1605.0 681.45 L1604.0 680.97 L1603.0 680.91 L1602.0 680.73 L1601.0 681.07 L1600.0 680.72 L1599.0 681.61 L1598.0 681.15 L1597.0 681.40 L1596.0 680.95 L1595.0 681.59 L1594.0 681.71 L1593.0 681.18 L1592.0 681.40 L1591.0 681.53 L1590.0 681.55 L1589.0 681.32 L1588.0 681.73 L1587.0 681.77 L1586.0 681.59 L1585.0 681.69 L1584.0 680.88 L1583.0 680.99 L1582.0 681.66 L1581.0 680.97 L1580.0 681.16 L1579.0 681.19 L1578.0 681.27 L1577.0 681.34 L1576.0 681.33 L1575.0 681.70 L1574.0 681.23 L1573.0 681.91 L1572.0 681.36 L1571.0 681.73 L1570.0 681.72 L1569.0 681.82 L1568.0 681.97 L1567.0 681.99 L1566.0 681.50 L1565.0 681.30 L1564.0 681.70 L1563.0 681.54 L1562.0 681.88 L1561.0 681.23 L1560.0 681.67 L1559.0 681.92 L1558.0 681.61 L1557.0 681.53 L1556.0 681.40 L1555.0 681.59 L1554.0 682.09 L1553.0 681.75 L1552.0 682.03 L1551.0 681.49 L1550.0 682.08 L1549.0 681.56 L1548.0 681.73 L1547.0 681.78 L1546.0 682.21 L1545.0 682.21 L1544.0 682.03 L1543.0 681.82 L1542.0 682.24 L1541.0 681.86 L1540.0 681.72 L1539.0 681.65 L1538.0 682.06 L1537.0 682.11 L1536.0 682.05 L1535.0 681.60 L1534.0 681.81 L1533.0 682.15 L1532.0 681.83 L1531.0 682.26 L1530.0 682.09 L1529.0 682.05 L1528.0 681.73 L1527.0 682.17 L1526.0 682.16 L1525.0 681.47 L1524.0 681.62 L1523.0 682.44 L1522.0 681.86 L1521.0 681.54 L1520.0 682.49 L1519.0 682.35 L1518.0 682.45 L1517.0 681.95 L1516.0 681.94 L1515.0 681.62 L1514.0 681.99 L1513.0 682.17 L1512.0 682.31 L1511.0 681.73 L1510.0 682.54 L1509.0 682.16 L1508.0 681.72 L1507.0 682.20 L1506.0 681.73 L1505.0 682.32 L1504.0 682.03 L1503.0 682.44 L1502.0 682.08 L1501.0 682.68 L1500.0 681.84 L1499.0 681.97 L1498.0 682.75 L1497.0 682.14 L1496.0 682.38 L1495.0 682.08 L1494.0 681.95 L1493.0 682.65 L1492.0 682.65 L1491.0 682.80 L1490.0 682.31 L1489.0 682.23 L1488.0 682.43 L1487.0 682.53 L1486.0 682.86 L1485.0 682.59 L1484.0 682.64 L1483.0 682.36 L1482.0 682.93 L1481.0 682.25 L1480.0 682.48 L1479.0 682.96 L1478.0 682.78 L1477.0 682.58 L1476.0 682.57 L1475.0 682.39 L1474.0 682.69 L1473.0 682.56 L1472.0 682.11 L1471.0 682.89 L1470.0 682.81 L1469.0 682.86 L1468.0 682.76 L1467.0 682.17 L1466.0 683.03 L1465.0 682.72 L1464.0 682.89 L1463.0 682.85 L1462.0 682.67 L1461.0 682.87 L1460.0 682.21 L1459.0 682.35 L1458.0 682.43 L1457.0 682.24 L1456.0 682.41 L1455.0 683.06 L1454.0 682.83 L1453.0 682.55 L1452.0 682.65 L1451.0 682.73 L1450.0 682.63 L1449.0 683.24 L1448.0 682.74 L1447.0 683.05 L1446.0 682.72 L1445.0 682.93 L1444.0 683.30 L1443.0 682.44 L1442.0 683.19 L1441.0 683.00 L1440.0 683.27 L1439.0 682.78 L1438.0 683.17 L1437.0 682.60 L1436.0 683.03 L1435.0 682.71 L1434.0 682.50 L1433.0 682.70 L1432.0 683.39 L1431.0 682.59 L1430.0 682.72 L1429.0 683.05 L1428.0 682.98 L1427.0 682.71 L1426.0 683.20 L1425.0 683.46 L1424.0 683.19 L1423.0 682.78 L1422.0 683.47 L1421.0 683.27 L1420.0 683.02 L1419.0 682.72 L1418.0 682.78 L1417.0 682.82 L1416.0 683.28 L1415.0 683.49 L1414.0 683.54 L1413.0 683.55 L1412.0 683.63 L1411.0 683.37 L1410.0 683.41 L1409.0 683.25 L1408.0 683.07 L1407.0 682.89 L1406.0 683.24 L1405.0 683.67 L1404.0 683.60 L1403.0 683.29 L1402.0 683.58 L1401.0 683.80 L1400.0 683.11 L1399.0 683.03 L1398.0 683.76 L1397.0 683.17 L1396.0 683.03 L1395.0 683.72 L1394.0 683.14 L1393.0 683.89 L1392.0 683.88 L1391.0 683.27 L1390.0 683.11 L1389.0 683.14 L1388.0 683.02 L1387.0 683.26 L1386.0 683.99 L1385.0 683.12 L1384.0 683.85 L1383.0 683.18 L1382.0 683.92 L1381.0 683.59 L1380.0 683.62 L1379.0 683.15 L1378.0 683.91 L1377.0 683.81 L1376.0 683.25 L1375.0 683.39 L1374.0 683.21 L1373.0 683.35 L1372.0 683.75 L1371.0 683.67 L1370.0 683.30 L1369.0 683.54 L1368.0 684.17 L1367.0 684.17 L1366.0 683.80 L1365.0 683.85 L1364.0 683.52 L1363.0 683.53 L1362.0 683.96 L1361.0 683.75 L1360.0 683.30 L1359.0 683.56 L1358.0 683.77 L1357.0 683.67 L1356.0 684.25 L1355.0 683.78 L1354.0 683.69 L1353.0 684.35 L1352.0 683.87 L1351.0 683.53 L1350.0 683.87 L1349.0 683.65 L1348.0 683.52 L1347.0 683.47 L1346.0 684.38 L1345.0 684.14 L1344.0 684.41 L1343.0 684.01 L1342.0 684.03 L1341.0 684.46 L1340.0 684.14 L1339.0 684.21 L1338.0 684.19 L1337.0 684.39 L1336.0 683.79 L1335.0 683.56 L1334.0 684.47 L1333.0 684.38 L1332.0 684.47 L1331.0 684.27 L1330.0 684.44 L1329.0 683.71 L1328.0 684.07 L1327.0 684.14 L1326.0 684.15 L1325.0 684.35 L1324.0 683.85 L1323.0 684.57 L1322.0 684.61 L1321.0 683.88 L1320.0 683.84 L1319.0 684.03 L1318.0 684.73 L1317.0 683.96 L1316.0 683.79 L1315.0 684.19 L1314.0 684.24 L1313.0 683.83 L1312.0 684.78 L1311.0 684.36 L1310.0 684.80 L1309.0 684.75 L1308.0 684.44 L1307.0 684.74 L1306.0 684.24 L1305.0 684.75 L1304.0 684.35 L1303.0 684.07 L1302.0 684.66 L1301.0 684.69 L1300.0 684.06 L1299.0 684.39 L1298.0 684.62 L1297.0 684.47 L1296.0 684.61 L1295.0 684.05 L1294.0 684.29 L1293.0 684.45 L1292.0 684.73 L1291.0 684.25 L1290.0 684.95 L1289.0 684.57 L1288.0 684.89 L1287.0 684.50 L1286.0 684.94 L1285.0 684.78 L1284.0 684.72 L1283.0 684.27 L1282.0 684.84 L1281.0 685.13 L1280.0 684.40 L1279.0 684.66 L1278.0 684.75 L1277.0 684.54 L1276.0 685.14 L1275.0 684.79 L1274.0 684.32 L1273.0 685.22 L1272.0 684.38 L1271.0 684.40 L1270.0 685.25 L1269.0 684.44 L1268.0 684.68 L1267.0 684.64 L1266.0 684.47 L1265.0 684.64 L1264.0 684.35 L1263.0 684.58 L1262.0 685.05 L1261.0 684.45 L1260.0 685.04 L1259.0 685.00 L1258.0 684.64 L1257.0 685.35 L1256.0 685.33 L1255.0 685.32 L1254.0 684.61 L1253.0 684.77 L1252.0 684.66 L1251.0 685.08 L1250.0 684.75 L1249.0 684.53 L1248.0 684.84 L1247.0 684.61 L1246.0 685.04 L1245.0 685.31 L1244.0 685.45 L1243.0 684.94 L1242.0 685.25 L1241.0 685.15 L1240.0 684.88 L1239.0 685.10 L1238.0 685.50 L1237.0 684.62 L1236.0 685.09 L1235.0 685.19 L1234.0 685.43 L1233.0 684.96 L1232.0 685.09 L1231.0 685.59 L1230.0 685.02 L1229.0 685.66 L1228.0 685.21 L1227.0 684.77 L1226.0 685.11 L1225.0 685.16 L1224.0 685.50 L1223.0 685.55 L1222.0 684.97 L1221.0 685.32 L1220.0 684.93 L1219.0 685.10 L1218.0 685.32 L1217.0 685.40 L1216.0 685.58 L1215.0 685.26 L1214.0 685.68 L1213.0 685.43 L1212.0 685.74 L1211.0 685.42 L1210.0 685.15 L1209.0 685.65 L1208.0 685.48 L1207.0 684.96 L1206.0 685.43 L1205.0 685.86 L1204.0 685.66 L1203.0 685.09 L1202.0 684.94 L1201.0 685.00 L1200.0 685.12 L1199.0 684.97 L1198.0 685.31 L1197.0 685.54 L1196.0 685.00 L1195.0 685.27 L1194.0 685.92 L1193.0 685.23 L1192.0 685.09 L1191.0 685.20 L1190.0 685.89 L1189.0 685.32 L1188.0 686.00 L1187.0 685.33 L1186.0 685.42 L1185.0 685.51 L1184.0 685.64 L1183.0 685.60 L1182.0 685.48 L1181.0 685.22 L1180.0 685.21 L1179.0 685.93 L1178.0 686.02 L1177.0 685.24 L1176.0 685.65 L1175.0 685.73 L1174.0 685.78 L1173.0 685.99 L1172.0 686.01 L1171.0 685.25 L1170.0 685.88 L1169.0 685.37 L1168.0 685.57 L1167.0 685.63 L1166.0 686.18 L1165.0 685.35 L1164.0 685.43 L1163.0 685.90 L1162.0 685.42 L1161.0 685.47 L1160.0 686.16 L1159.0 686.14 L1158.0 685.71 L1157.0 685.85 L1156.0 685.75 L1155.0 685.42 L1154.0 686.05 L1153.0 686.30 L1152.0 685.53 L1151.0 685.36 L1150.0 686.19 L1149.0 686.25 L1148.0 685.59 L1147.0 686.37 L1146.0 685.59 L1145.0 686.26 L1144.0 686.08 L1143.0 686.16 L1142.0 685.47 L1141.0 685.56 L1140.0 685.87 L1139.0 686.19 L1138.0 685.78 L1137.0 685.48 L1136.0 685.48 L1135.0 686.09 L1134.0 685.70 L1133.0 685.56 L1132.0 686.19 L1131.0 686.48 L1130.0 685.57 L1129.0 686.10 L1128.0 685.73 L1127.0 686.36 L1126.0 686.24 L1125.0 685.63 L1124.0 685.72 L1123.0 686.17 L1122.0 686.44 L1121.0 686.48 L1120.0 686.34 L1119.0 686.57 L1118.0 686.08 L1117.0 686.09 L1116.0 686.20 L1115.0 686.54 L1114.0 686.27 L1113.0 685.77 L1112.0 685.74 L1111.0 686.55 L1110.0 685.96 L1109.0 686.13 L1108.0 686.12 L1107.0 686.49 L1106.0 686.32 L1105.0 686.26 L1104.0 685.95 L1103.0 686.46 L1102.0 686.57 L1101.0 685.99 L1100.0 685.87 L1099.0 686.23 L1098.0 686.03 L1097.0 685.96 L1096.0 686.52 L1095.0 686.38 L1094.0 686.60 L1093.0 686.07 L1092.0 686.01 L1091.0 686.47 L1090.0 686.85 L1089.0 686.75 L1088.0 686.49 L1087.0 685.93 L1086.0 686.06 L1085.0 685.96 L1084.0 686.02 L1083.0 686.16 L1082.0 686.41 L1081.0 686.89 L1080.0 686.23 L1079.0 685.96 L1078.0 686.74 L1077.0 686.92 L1076.0 686.70 L1075.0 686.80 L1074.0 686.44 L1073.0 686.92 L1072.0 686.11 L1071.0 686.64 L1070.0 686.07 L1069.0 686.52 L1068.0 686.47 L1067.0 686.99 L1066.0 686.99 L1065.0 686.91 L1064.0 686.66 L1063.0 686.50 L1062.0 686.10 L1061.0 686.63 L1060.0 686.87 L1059.0 686.14 L1058.0 686.52 L1057.0 686.25 L1056.0 686.56 L1055.0 686.45 L1054.0 687.01 L1053.0 686.55 L1052.0 686.31 L1051.0 686.69 L1050.0 686.88 L1049.0 686.89 L1048.0 686.59 L1047.0 686.72 L1046.0 687.00 L1045.0 686.73 L1044.0 686.61 L1043.0 686.97 L1042.0 686.57 L1041.0 687.01 L1040.0 686.70 L1039.0 686.81 L1038.0 687.16 L1037.0 686.79 L1036.0 686.34 L1035.0 686.99 L1034.0 686.26 L1033.0 686.40 L1032.0 686.78 L1031.0 686.40 L1030.0 686.72 L1029.0 687.07 L1028.0 686.37 L1027.0 686.29 L1026.0 686.63 L1025.0 687.01 L1024.0 686.89 L1023.0 686.42 L1022.0 686.43 L1021.0 686.55 L1020.0 686.59 L1019.0 687.20 L1018.0 687.00 L1017.0 687.07 L1016.0 687.27 L1015.0 686.95 L1014.0 686.62 L1013.0 686.81 L1012.0 686.56 L1011.0 686.92 L1010.0 687.02 L1009.0 686.56 L1008.0 687.21 L1007.0 687.13 L1006.0 687.31 L1005.0 686.67 L1004.0 687.14 L1003.0 686.61 L1002.0 686.84 L1001.0 686.59 L1000.0 686.56 L999.0 686.68 L998.0 687.42 L997.0 687.46 L996.0 686.82 L995.0 686.72 L994.0 687.26 L993.0 686.93 L992.0 687.51 L991.0 687.34 L990.0 687.01 L989.0 686.92 L988.0 687.46 L987.0 686.89 L986.0 687.01 L985.0 686.98 L984.0 687.07 L983.0 686.96 L982.0 687.36 L981.0 687.20 L980.0 686.66 L979.0 687.33 L978.0 686.87 L977.0 687.29 L976.0 687.31 L975.0 687.45 L974.0 687.56 L973.0 687.39 L972.0 687.08 L971.0 686.71 L970.0 687.01 L969.0 687.12 L968.0 687.21 L967.0 687.30 L966.0 686.95 L965.0 687.20 L964.0 686.86 L963.0 686.86 L962.0 686.74 L961.0 687.16 L960.0 687.48 L959.0 687.57 L958.0 687.24 L957.0 687.06 L956.0 686.86 L955.0 687.59 L954.0 687.35 L953.0 687.26 L952.0 686.98 L951.0 687.70 L950.0 687.06 L949.0 687.57 L948.0 687.23 L947.0 687.67 L946.0 687.76 L945.0 687.09 L944.0 686.84 L943.0 687.63 L942.0 687.32 L941.0 687.17 L940.0 687.63 L939.0 687.59 L938.0 687.50 L937.0 687.70 L936.0 687.76 L935.0 687.01 L934.0 686.94 L933.0 687.00 L932.0 687.88 L931.0 687.46 L930.0 687.47 L929.0 687.05 L928.0 687.79 L927.0 687.53 L926.0 687.88 L925.0 687.90 L924.0 687.69 L923.0 687.78 L922.0 687.36 L921.0 687.14 L920.0 687.25 L919.0 687.13 L918.0 687.90 L917.0 687.82 L916.0 687.56 L915.0 688.02 L914.0 687.48 L913.0 687.17 L912.0 687.44 L911.0 687.28 L910.0 687.18 L909.0 687.21 L908.0 687.37 L907.0 687.64 L906.0 687.28 L905.0 687.10 L904.0 687.86 L903.0 687.51 L902.0 687.47 L901.0 687.40 L900.0 687.45 L899.0 687.31 L898.0 687.68 L897.0 687.67 L896.0 687.37 L895.0 687.10 L894.0 687.21 L893.0 687.64 L892.0 686.94 L891.0 687.38 L890.0 686.95 L889.0 687.01 L888.0 686.65 L887.0 687.28 L886.0 686.31 L885.0 686.59 L884.0 686.63 L883.0 686.66 L882.0 686.18 L881.0 686.57 L880.0 686.12 L879.0 686.49 L878.0 686.29 L877.0 686.25 L876.0 686.30 L875.0 686.48 L874.0 686.17 L873.0 686.24 L872.0 686.13 L871.0 686.13 L870.0 685.36 L869.0 685.98 L868.0 685.22 L867.0 685.95 L866.0 685.35 L865.0 685.54 L864.0 685.20 L863.0 685.01 L862.0 685.20 L861.0 685.04 L860.0 685.04 L859.0 685.05 L858.0 684.64 L857.0 685.08 L856.0 685.09 L855.0 684.97 L854.0 685.01 L853.0 684.27 L852.0 684.52 L851.0 684.46 L850.0 684.72 L849.0 684.75 L848.0 684.64 L847.0 684.53 L846.0 684.52 L845.0 684.53 L844.0 683.87 L843.0 684.14 L842.0 683.90 L841.0 683.62 L840.0 683.48 L839.0 683.51 L838.0 683.45 L837.0 684.02 L836.0 683.82 Z" fill="#ff0000"/>
<rect x="725.5" y="786.4" width="1184" height="282.80000000000007" rx="6.5" fill="#222222"/>
<rect x="726" y="786.9" width="1183" height="281.80000000000007" rx="6" fill="#ffffff"/>
<line x1="1072.88" y1="856.3" x2="1072.88" y2="1026.5" stroke="#e0e0e0" stroke-width="1"/>
<line x1="1333.75" y1="856.3" x2="1333.75" y2="1026.5" stroke="#e0e0e0" stroke-width="1"/>
<line x1="1594.62" y1="856.3" x2="1594.62" y2="1026.5" stroke="#e0e0e0" stroke-width="1"/>
<line x1="812" y1="856.30" x2="1855.5" y2="856.30" stroke="#e0e0e0" stroke-width="1"/>
<line x1="812" y1="898.85" x2="1855.5" y2="898.85" stroke="#e0e0e0" stroke-width="1"/>
<line x1="812" y1="941.40" x2="1855.5" y2="941.40" stroke="#e0e0e0" stroke-width="1"/>
<line x1="812" y1="983.95" x2="1855.5" y2="983.95" stroke="#e0e0e0" stroke-width="1"/>
<line x1="812" y1="1026.5" x2="1855.5" y2="1026.5" stroke="#d6d6d6" stroke-width="1.6"/>
<line x1="812" y1="856.3" x2="812" y2="1026.5" stroke="#d6d6d6" stroke-width="1.6"/>
<line x1="1855.5" y1="856.3" x2="1855.5" y2="1026.5" stroke="#d6d6d6" stroke-width="1.6"/>
<text x="806.5" y="860.6999999999999" font-size="13" fill="#2a2a2a" text-anchor="end" >151.2</text>
<line x1="807" y1="856.30" x2="812" y2="856.30" stroke="#d6d6d6" stroke-width="1"/>
<text x="806.5" y="903.2499999999999" font-size="13" fill="#2a2a2a" text-anchor="end" >77.7</text>
<line x1="807" y1="898.85" x2="812" y2="898.85" stroke="#d6d6d6" stroke-width="1"/>
<text x="806.5" y="945.8" font-size="13" fill="#2a2a2a" text-anchor="end" >4.2</text>
<line x1="807" y1="941.40" x2="812" y2="941.40" stroke="#d6d6d6" stroke-width="1"/>
<text x="806.5" y="988.35" font-size="13" fill="#2a2a2a" text-anchor="end" >-69.4</text>
<line x1="807" y1="983.95" x2="812" y2="983.95" stroke="#d6d6d6" stroke-width="1"/>
<text x="806.5" y="1030.9" font-size="13" fill="#2a2a2a" text-anchor="end" >-142.9</text>
<line x1="807" y1="1026.50" x2="812" y2="1026.50" stroke="#d6d6d6" stroke-width="1"/>
<text x="1861.1" y="860.6999999999999" font-size="13" fill="#2a2a2a" text-anchor="start" >1.00</text>
<line x1="1855.5" y1="856.30" x2="1860.5" y2="856.30" stroke="#d6d6d6" stroke-width="1"/>
<text x="1861.1" y="903.2499999999999" font-size="13" fill="#2a2a2a" text-anchor="start" >0.75</text>
<line x1="1855.5" y1="898.85" x2="1860.5" y2="898.85" stroke="#d6d6d6" stroke-width="1"/>
<text x="1861.1" y="945.8" font-size="13" fill="#2a2a2a" text-anchor="start" >0.50</text>
<line x1="1855.5" y1="941.40" x2="1860.5" y2="941.40" stroke="#d6d6d6" stroke-width="1"/>
<text x="1861.1" y="988.35" font-size="13" fill="#2a2a2a" text-anchor="start" >0.25</text>
<line x1="1855.5" y1="983.95" x2="1860.5" y2="983.95" stroke="#d6d6d6" stroke-width="1"/>
<text x="1861.1" y="1030.9" font-size="13" fill="#2a2a2a" text-anchor="start" >0.00</text>
<line x1="1855.5" y1="1026.50" x2="1860.5" y2="1026.50" stroke="#d6d6d6" stroke-width="1"/>
<text x="812.00" y="1044" font-size="13" fill="#2a2a2a" text-anchor="middle" >0.0</text>
<line x1="812.00" y1="1026.5" x2="812.00" y2="1031.5" stroke="#d6d6d6" stroke-width="1"/>
<text x="1072.88" y="1044" font-size="13" fill="#2a2a2a" text-anchor="middle" >3.7</text>
<line x1="1072.88" y1="1026.5" x2="1072.88" y2="1031.5" stroke="#d6d6d6" stroke-width="1"/>
<text x="1333.75" y="1044" font-size="13" fill="#2a2a2a" text-anchor="middle" >7.5</text>
<line x1="1333.75" y1="1026.5" x2="1333.75" y2="1031.5" stroke="#d6d6d6" stroke-width="1"/>
<text x="1594.62" y="1044" font-size="13" fill="#2a2a2a" text-anchor="middle" >11.2</text>
<line x1="1594.62" y1="1026.5" x2="1594.62" y2="1031.5" stroke="#d6d6d6" stroke-width="1"/>
<text x="1855.50" y="1044" font-size="13" fill="#2a2a2a" text-anchor="middle" >15.0</text>
<line x1="1855.50" y1="1026.5" x2="1855.50" y2="1031.5" stroke="#d6d6d6" stroke-width="1"/>
<text transform="translate(757 942) rotate(-90)" x="0" y="4.5" font-size="13" font-weight="bold" fill="#2a2a2a" text-anchor="middle">Amps (A)</text>
<rect x="1154.8" y="824.6" width="7" height="7" fill="#0000ff" stroke="#000" stroke-width="1.3"/>
<text x="1167.4" y="832.0" font-size="13" fill="#2a2a2a" text-anchor="start" >Iq (A)</text>
<rect x="1207.8999999999999" y="824.6" width="7" height="7" fill="#ff0000" stroke="#000" stroke-width="1.3"/>
<text x="1220.6" y="832.0" font-size="13" fill="#2a2a2a" text-anchor="start" >Id (A)</text>
<rect x="1261.0" y="824.6" width="7" height="7" fill="#f6a625" stroke="#000" stroke-width="1.3"/>
<text x="1273.7" y="832.0" font-size="13" fill="#2a2a2a" text-anchor="start" >Ifw (A)</text>
<rect x="1321.8" y="824.6" width="7" height="7" fill="#6d5fd5" stroke="#000" stroke-width="1.3"/>
<text x="1334.4" y="832.0" font-size="13" fill="#2a2a2a" text-anchor="start" >Throttle Reduction (%)</text>
<line x1="812" y1="944" x2="812" y2="1026" stroke="#ff0000" stroke-width="1.5"/>
<line x1="812" y1="942" x2="812" y2="856" stroke="#0000ff" stroke-width="2"/>
<path d="M812.00 1020.00 C813.32 1018.97 816.33 1013.93 819.90 1013.80 C823.47 1013.67 829.22 1019.95 833.40 1019.20 C837.58 1018.45 840.63 1012.17 845.00 1009.30 C849.37 1006.43 853.87 1004.42 859.60 1002.00 C865.33 999.58 872.67 996.90 879.40 994.80 C886.13 992.70 889.97 991.07 900.00 989.40 C910.03 987.73 926.27 985.70 939.60 984.80 C952.93 983.90 969.93 984.08 980.00 984.00 C990.07 983.92 996.67 984.25 1000.00 984.30" stroke="#ff0000" stroke-width="3.5" fill="none"/>
<path d="M998.0 982.18 L1000.0 981.62 L1002.0 981.89 L1004.0 982.04 L1006.0 982.88 L1008.0 981.96 L1010.0 982.29 L1012.0 981.86 L1014.0 982.45 L1016.0 982.91 L1018.0 981.86 L1020.0 982.10 L1022.0 981.79 L1024.0 982.34 L1026.0 982.23 L1028.0 982.97 L1030.0 982.47 L1032.0 982.92 L1034.0 982.06 L1036.0 983.11 L1038.0 983.08 L1040.0 982.70 L1042.0 982.69 L1044.0 982.06 L1046.0 982.48 L1048.0 982.53 L1050.0 982.89 L1052.0 983.00 L1054.0 982.54 L1056.0 983.11 L1058.0 982.10 L1060.0 982.87 L1062.0 982.57 L1064.0 983.32 L1066.0 982.90 L1068.0 983.01 L1070.0 982.43 L1072.0 983.29 L1074.0 982.22 L1076.0 982.68 L1078.0 982.90 L1080.0 982.18 L1082.0 982.93 L1084.0 983.13 L1086.0 983.32 L1088.0 982.38 L1090.0 982.44 L1092.0 982.44 L1094.0 982.30 L1096.0 982.51 L1098.0 982.67 L1100.0 983.44 L1102.0 982.72 L1104.0 982.86 L1106.0 983.35 L1108.0 982.63 L1110.0 983.07 L1112.0 982.87 L1114.0 983.03 L1116.0 982.64 L1118.0 983.21 L1120.0 983.16 L1122.0 982.68 L1124.0 983.11 L1126.0 983.24 L1128.0 982.47 L1130.0 982.89 L1132.0 982.40 L1134.0 983.31 L1136.0 982.95 L1138.0 983.05 L1140.0 982.99 L1142.0 982.75 L1144.0 983.18 L1146.0 983.07 L1148.0 983.76 L1150.0 982.50 L1152.0 983.19 L1154.0 983.53 L1156.0 983.14 L1158.0 983.79 L1160.0 982.66 L1162.0 982.56 L1164.0 982.68 L1166.0 983.83 L1168.0 982.89 L1170.0 983.04 L1172.0 982.87 L1174.0 983.83 L1176.0 983.67 L1178.0 983.58 L1180.0 983.23 L1182.0 982.68 L1184.0 983.95 L1186.0 983.53 L1188.0 982.90 L1190.0 983.04 L1192.0 983.58 L1194.0 983.31 L1196.0 983.38 L1198.0 983.87 L1200.0 983.15 L1202.0 983.79 L1204.0 983.78 L1206.0 983.05 L1208.0 983.70 L1210.0 983.40 L1212.0 983.42 L1214.0 983.91 L1216.0 983.91 L1218.0 983.72 L1220.0 983.00 L1222.0 983.62 L1224.0 983.94 L1226.0 983.16 L1228.0 983.76 L1230.0 983.22 L1232.0 983.83 L1234.0 983.89 L1236.0 984.21 L1238.0 983.59 L1240.0 983.09 L1242.0 984.03 L1244.0 984.17 L1246.0 983.28 L1248.0 983.03 L1250.0 983.89 L1252.0 983.11 L1254.0 984.13 L1256.0 983.26 L1258.0 983.48 L1260.0 983.31 L1262.0 984.08 L1264.0 983.27 L1266.0 984.02 L1268.0 983.86 L1270.0 984.13 L1272.0 984.36 L1274.0 984.34 L1276.0 983.79 L1278.0 984.10 L1280.0 983.28 L1282.0 983.48 L1284.0 984.19 L1286.0 983.34 L1288.0 984.19 L1290.0 984.00 L1292.0 984.25 L1294.0 983.50 L1296.0 983.90 L1298.0 983.70 L1300.0 983.40 L1302.0 984.26 L1304.0 983.93 L1306.0 983.68 L1308.0 983.35 L1310.0 983.48 L1312.0 983.99 L1314.0 983.35 L1316.0 983.38 L1318.0 984.60 L1320.0 984.39 L1322.0 984.61 L1324.0 984.09 L1326.0 984.29 L1328.0 984.35 L1330.0 984.21 L1332.0 983.98 L1334.0 984.68 L1336.0 984.03 L1338.0 983.82 L1340.0 983.95 L1342.0 983.52 L1344.0 984.63 L1346.0 984.16 L1348.0 983.80 L1350.0 983.53 L1352.0 983.76 L1354.0 984.15 L1356.0 984.33 L1358.0 983.59 L1360.0 984.34 L1362.0 983.89 L1364.0 984.61 L1366.0 984.82 L1368.0 984.54 L1370.0 984.76 L1372.0 984.29 L1374.0 984.08 L1376.0 984.50 L1378.0 984.83 L1380.0 984.35 L1382.0 984.26 L1384.0 984.38 L1386.0 983.85 L1388.0 984.15 L1390.0 983.79 L1392.0 984.25 L1394.0 984.03 L1396.0 984.61 L1398.0 984.84 L1400.0 984.31 L1402.0 984.68 L1404.0 984.95 L1406.0 984.58 L1408.0 984.41 L1410.0 984.09 L1412.0 984.78 L1414.0 984.57 L1416.0 984.15 L1418.0 984.03 L1420.0 984.50 L1422.0 984.85 L1424.0 984.86 L1426.0 984.87 L1428.0 984.09 L1430.0 984.89 L1432.0 985.15 L1434.0 984.82 L1436.0 984.09 L1438.0 985.11 L1440.0 983.95 L1442.0 984.37 L1444.0 984.77 L1446.0 984.14 L1448.0 984.98 L1450.0 984.45 L1452.0 984.44 L1454.0 984.48 L1456.0 985.09 L1458.0 985.06 L1460.0 984.31 L1462.0 985.24 L1464.0 984.76 L1466.0 984.74 L1468.0 985.01 L1470.0 984.49 L1472.0 984.86 L1474.0 984.04 L1476.0 984.96 L1478.0 984.72 L1480.0 985.17 L1482.0 984.91 L1484.0 984.38 L1486.0 984.74 L1488.0 985.32 L1490.0 984.99 L1492.0 984.68 L1494.0 985.31 L1496.0 985.31 L1498.0 984.94 L1500.0 985.14 L1502.0 984.63 L1504.0 985.37 L1506.0 985.35 L1508.0 984.55 L1510.0 984.97 L1512.0 984.65 L1514.0 985.34 L1516.0 984.61 L1518.0 984.67 L1520.0 985.39 L1522.0 985.20 L1524.0 984.48 L1526.0 984.34 L1528.0 985.04 L1530.0 984.87 L1532.0 984.63 L1534.0 984.56 L1536.0 984.75 L1538.0 984.35 L1540.0 984.79 L1542.0 984.59 L1544.0 984.54 L1546.0 984.26 L1548.0 984.57 L1550.0 985.40 L1552.0 985.39 L1554.0 984.29 L1556.0 985.07 L1558.0 984.78 L1560.0 985.39 L1562.0 984.47 L1564.0 984.78 L1566.0 985.04 L1568.0 984.53 L1570.0 985.34 L1572.0 985.50 L1574.0 984.99 L1576.0 984.92 L1578.0 985.44 L1580.0 984.61 L1582.0 984.38 L1584.0 985.30 L1586.0 984.61 L1588.0 984.65 L1590.0 984.78 L1592.0 984.82 L1594.0 985.30 L1596.0 984.85 L1598.0 985.35 L1600.0 985.30 L1602.0 985.37 L1604.0 984.72 L1606.0 985.20 L1608.0 985.26 L1610.0 984.66 L1612.0 984.54 L1614.0 984.59 L1616.0 985.08 L1618.0 985.05 L1620.0 985.42 L1622.0 985.28 L1624.0 984.81 L1626.0 985.60 L1628.0 984.58 L1630.0 985.67 L1632.0 985.31 L1634.0 985.13 L1636.0 985.07 L1638.0 985.80 L1640.0 985.47 L1642.0 984.67 L1644.0 984.64 L1646.0 985.01 L1648.0 985.15 L1650.0 985.57 L1652.0 985.78 L1654.0 985.64 L1656.0 985.02 L1658.0 984.71 L1660.0 985.62 L1662.0 985.40 L1664.0 985.25 L1666.0 984.69 L1668.0 985.32 L1670.0 985.02 L1672.0 984.94 L1674.0 985.02 L1676.0 985.40 L1678.0 984.73 L1680.0 985.91 L1682.0 984.89 L1684.0 985.07 L1686.0 985.19 L1688.0 985.00 L1690.0 985.63 L1692.0 985.70 L1694.0 985.81 L1696.0 984.79 L1698.0 985.33 L1700.0 985.89 L1702.0 985.62 L1704.0 984.80 L1706.0 985.59 L1708.0 985.37 L1710.0 985.72 L1712.0 985.54 L1714.0 985.67 L1716.0 985.54 L1718.0 985.77 L1720.0 985.82 L1722.0 985.61 L1724.0 984.82 L1726.0 985.57 L1728.0 985.28 L1730.0 986.05 L1732.0 985.37 L1734.0 985.90 L1736.0 984.87 L1738.0 985.81 L1740.0 985.25 L1742.0 985.98 L1744.0 985.74 L1746.0 984.92 L1748.0 984.91 L1750.0 985.84 L1752.0 985.72 L1754.0 985.43 L1756.0 984.99 L1758.0 985.77 L1760.0 985.74 L1762.0 985.79 L1764.0 985.65 L1766.0 985.16 L1768.0 985.03 L1770.0 985.79 L1772.0 985.33 L1774.0 985.46 L1776.0 985.89 L1778.0 985.69 L1780.0 986.04 L1782.0 985.08 L1784.0 986.10 L1786.0 985.46 L1788.0 985.73 L1790.0 985.97 L1792.0 986.01 L1794.0 986.30 L1796.0 986.13 L1798.0 985.48 L1800.0 985.62 L1802.0 986.26 L1804.0 985.10 L1806.0 986.16 L1808.0 985.37 L1810.0 985.41 L1812.0 986.07 L1814.0 986.01 L1816.0 985.40 L1818.0 985.52 L1820.0 985.47 L1822.0 986.22 L1824.0 985.11 L1826.0 985.53 L1828.0 985.59 L1830.0 985.57 L1832.0 986.07 L1834.0 986.36 L1836.0 985.25 L1838.0 985.91 L1840.0 985.34 L1842.0 986.25 L1844.0 986.39 L1846.0 985.50 L1848.0 985.21 L1850.0 985.84 L1852.0 985.81 L1854.0 985.84 L1854.0 990.55 L1852.0 990.42 L1850.0 990.19 L1848.0 989.82 L1846.0 989.81 L1844.0 989.97 L1842.0 989.91 L1840.0 990.45 L1838.0 990.47 L1836.0 989.46 L1834.0 990.33 L1832.0 989.58 L1830.0 990.30 L1828.0 989.63 L1826.0 990.41 L1824.0 989.92 L1822.0 989.94 L1820.0 989.70 L1818.0 989.62 L1816.0 990.42 L1814.0 990.10 L1812.0 989.78 L1810.0 989.78 L1808.0 990.01 L1806.0 990.34 L1804.0 989.55 L1802.0 989.94 L1800.0 989.35 L1798.0 989.73 L1796.0 989.42 L1794.0 990.45 L1792.0 989.31 L1790.0 989.70 L1788.0 990.29 L1786.0 990.25 L1784.0 989.36 L1782.0 989.67 L1780.0 990.46 L1778.0 989.90 L1776.0 989.27 L1774.0 989.70 L1772.0 989.97 L1770.0 990.25 L1768.0 989.95 L1766.0 990.06 L1764.0 989.26 L1762.0 990.10 L1760.0 989.49 L1758.0 989.72 L1756.0 990.12 L1754.0 989.97 L1752.0 990.39 L1750.0 990.36 L1748.0 989.32 L1746.0 989.45 L1744.0 990.37 L1742.0 989.78 L1740.0 990.22 L1738.0 989.35 L1736.0 990.32 L1734.0 989.80 L1732.0 989.53 L1730.0 989.42 L1728.0 989.28 L1726.0 989.59 L1724.0 989.66 L1722.0 990.19 L1720.0 989.73 L1718.0 990.04 L1716.0 989.73 L1714.0 989.27 L1712.0 990.23 L1710.0 989.36 L1708.0 990.22 L1706.0 989.25 L1704.0 990.20 L1702.0 989.69 L1700.0 989.60 L1698.0 990.13 L1696.0 989.15 L1694.0 989.64 L1692.0 989.28 L1690.0 990.06 L1688.0 989.08 L1686.0 989.43 L1684.0 989.94 L1682.0 989.16 L1680.0 989.33 L1678.0 988.93 L1676.0 989.15 L1674.0 988.89 L1672.0 989.51 L1670.0 989.00 L1668.0 989.79 L1666.0 990.14 L1664.0 988.85 L1662.0 990.02 L1660.0 989.87 L1658.0 988.95 L1656.0 989.22 L1654.0 989.94 L1652.0 989.70 L1650.0 989.00 L1648.0 989.50 L1646.0 989.50 L1644.0 989.14 L1642.0 990.04 L1640.0 990.02 L1638.0 989.31 L1636.0 989.03 L1634.0 989.93 L1632.0 989.00 L1630.0 989.73 L1628.0 989.13 L1626.0 989.30 L1624.0 989.43 L1622.0 989.62 L1620.0 989.52 L1618.0 988.77 L1616.0 989.42 L1614.0 989.03 L1612.0 989.46 L1610.0 989.64 L1608.0 989.74 L1606.0 989.88 L1604.0 989.71 L1602.0 989.28 L1600.0 988.93 L1598.0 989.10 L1596.0 989.09 L1594.0 989.41 L1592.0 988.68 L1590.0 988.61 L1588.0 989.12 L1586.0 988.59 L1584.0 989.16 L1582.0 989.66 L1580.0 988.92 L1578.0 988.97 L1576.0 988.99 L1574.0 989.31 L1572.0 989.29 L1570.0 989.21 L1568.0 989.69 L1566.0 989.53 L1564.0 989.55 L1562.0 989.75 L1560.0 989.07 L1558.0 988.90 L1556.0 989.12 L1554.0 989.53 L1552.0 988.74 L1550.0 988.93 L1548.0 988.85 L1546.0 988.49 L1544.0 988.61 L1542.0 989.45 L1540.0 989.25 L1538.0 988.82 L1536.0 988.97 L1534.0 988.68 L1532.0 989.21 L1530.0 989.47 L1528.0 988.69 L1526.0 989.59 L1524.0 989.56 L1522.0 988.80 L1520.0 989.43 L1518.0 988.85 L1516.0 988.71 L1514.0 988.45 L1512.0 989.42 L1510.0 989.03 L1508.0 988.85 L1506.0 989.30 L1504.0 989.50 L1502.0 989.08 L1500.0 989.39 L1498.0 988.55 L1496.0 988.74 L1494.0 988.42 L1492.0 988.54 L1490.0 988.46 L1488.0 989.29 L1486.0 988.90 L1484.0 988.57 L1482.0 988.56 L1480.0 988.87 L1478.0 988.33 L1476.0 989.15 L1474.0 989.11 L1472.0 988.81 L1470.0 989.42 L1468.0 989.11 L1466.0 988.54 L1464.0 989.02 L1462.0 988.17 L1460.0 989.34 L1458.0 988.80 L1456.0 988.17 L1454.0 989.33 L1452.0 989.20 L1450.0 988.98 L1448.0 989.13 L1446.0 988.97 L1444.0 988.87 L1442.0 989.39 L1440.0 988.10 L1438.0 988.80 L1436.0 988.57 L1434.0 988.99 L1432.0 988.12 L1430.0 988.21 L1428.0 988.85 L1426.0 988.60 L1424.0 988.72 L1422.0 988.15 L1420.0 989.04 L1418.0 988.86 L1416.0 989.13 L1414.0 988.16 L1412.0 988.64 L1410.0 988.32 L1408.0 988.51 L1406.0 988.04 L1404.0 989.02 L1402.0 988.50 L1400.0 988.21 L1398.0 989.14 L1396.0 987.98 L1394.0 988.01 L1392.0 988.77 L1390.0 988.84 L1388.0 988.27 L1386.0 987.99 L1384.0 988.86 L1382.0 988.27 L1380.0 988.98 L1378.0 987.83 L1376.0 987.84 L1374.0 988.20 L1372.0 988.20 L1370.0 987.91 L1368.0 989.07 L1366.0 988.92 L1364.0 988.81 L1362.0 987.93 L1360.0 987.88 L1358.0 987.78 L1356.0 988.51 L1354.0 987.90 L1352.0 987.84 L1350.0 987.69 L1348.0 988.31 L1346.0 988.09 L1344.0 988.13 L1342.0 988.64 L1340.0 988.80 L1338.0 987.98 L1336.0 988.80 L1334.0 988.29 L1332.0 988.60 L1330.0 987.92 L1328.0 987.97 L1326.0 988.35 L1324.0 987.66 L1322.0 987.70 L1320.0 987.86 L1318.0 988.13 L1316.0 987.74 L1314.0 988.12 L1312.0 988.01 L1310.0 988.11 L1308.0 988.67 L1306.0 987.76 L1304.0 988.55 L1302.0 987.95 L1300.0 988.42 L1298.0 987.58 L1296.0 987.97 L1294.0 988.61 L1292.0 988.31 L1290.0 987.96 L1288.0 988.18 L1286.0 988.57 L1284.0 987.80 L1282.0 987.60 L1280.0 988.53 L1278.0 987.69 L1276.0 987.84 L1274.0 988.16 L1272.0 988.01 L1270.0 987.67 L1268.0 988.43 L1266.0 987.34 L1264.0 987.79 L1262.0 988.34 L1260.0 987.51 L1258.0 988.20 L1256.0 988.34 L1254.0 987.31 L1252.0 987.83 L1250.0 988.27 L1248.0 988.11 L1246.0 987.55 L1244.0 987.56 L1242.0 988.32 L1240.0 987.59 L1238.0 987.65 L1236.0 987.24 L1234.0 987.32 L1232.0 987.37 L1230.0 988.09 L1228.0 988.02 L1226.0 987.58 L1224.0 987.94 L1222.0 987.81 L1220.0 988.24 L1218.0 988.03 L1216.0 987.67 L1214.0 987.69 L1212.0 987.94 L1210.0 987.44 L1208.0 987.50 L1206.0 987.12 L1204.0 988.19 L1202.0 987.37 L1200.0 987.29 L1198.0 987.20 L1196.0 987.23 L1194.0 987.17 L1192.0 987.28 L1190.0 987.20 L1188.0 986.87 L1186.0 987.80 L1184.0 987.78 L1182.0 987.32 L1180.0 987.85 L1178.0 987.22 L1176.0 987.46 L1174.0 987.45 L1172.0 987.30 L1170.0 987.83 L1168.0 987.01 L1166.0 987.40 L1164.0 987.78 L1162.0 986.81 L1160.0 987.47 L1158.0 987.28 L1156.0 987.56 L1154.0 986.99 L1152.0 987.61 L1150.0 987.70 L1148.0 986.95 L1146.0 987.22 L1144.0 987.25 L1142.0 987.16 L1140.0 987.48 L1138.0 986.81 L1136.0 987.22 L1134.0 987.00 L1132.0 987.51 L1130.0 986.99 L1128.0 987.23 L1126.0 987.25 L1124.0 987.65 L1122.0 987.21 L1120.0 986.50 L1118.0 986.70 L1116.0 986.74 L1114.0 987.69 L1112.0 987.09 L1110.0 987.04 L1108.0 987.03 L1106.0 986.77 L1104.0 986.72 L1102.0 986.68 L1100.0 986.47 L1098.0 986.87 L1096.0 987.43 L1094.0 986.45 L1092.0 986.38 L1090.0 987.50 L1088.0 986.99 L1086.0 986.56 L1084.0 986.47 L1082.0 986.52 L1080.0 987.02 L1078.0 987.19 L1076.0 987.12 L1074.0 986.25 L1072.0 987.49 L1070.0 986.60 L1068.0 987.00 L1066.0 986.77 L1064.0 987.13 L1062.0 986.49 L1060.0 987.30 L1058.0 986.52 L1056.0 986.95 L1054.0 986.79 L1052.0 986.85 L1050.0 987.07 L1048.0 986.50 L1046.0 987.26 L1044.0 986.31 L1042.0 986.99 L1040.0 987.22 L1038.0 986.93 L1036.0 986.42 L1034.0 987.12 L1032.0 986.97 L1030.0 987.19 L1028.0 987.10 L1026.0 986.27 L1024.0 987.00 L1022.0 986.11 L1020.0 986.55 L1018.0 986.00 L1016.0 986.85 L1014.0 987.08 L1012.0 986.99 L1010.0 986.16 L1008.0 986.06 L1006.0 986.22 L1004.0 985.85 L1002.0 986.60 L1000.0 986.05 L998.0 986.71 Z" fill="#ff0000"/>
<path d="M812.00 944.30 L820.50 944.30" stroke="#f6a625" stroke-width="3.5" fill="none"/>
<path d="M820.50 944.30 C820.85 945.80 821.52 950.30 822.60 953.30 C823.68 956.30 824.77 959.43 827.00 962.30 C829.23 965.17 832.08 968.38 836.00 970.50 C839.92 972.62 843.87 973.80 850.50 975.00 C857.13 976.20 867.55 976.95 875.80 977.70 C884.05 978.45 885.97 978.80 900.00 979.50 C914.03 980.20 931.33 981.07 960.00 981.90 C988.67 982.73 998.67 983.73 1072.00 984.50 C1145.33 985.27 1269.50 985.92 1400.00 986.50 C1530.50 987.08 1779.17 987.75 1855.00 988.00" stroke="#f6a625" stroke-width="3.5" fill="none"/>
<path d="M812.00 856.50 L820.40 856.50" stroke="#0000ff" stroke-width="3.5" fill="none"/>
<path d="M820.40 856.50 C820.67 859.08 821.18 867.00 822.00 872.00 C822.82 877.00 823.85 882.17 825.30 886.50 C826.75 890.83 828.60 894.75 830.70 898.00 C832.80 901.25 834.90 903.70 837.90 906.00 C840.90 908.30 843.58 910.08 848.70 911.80 C853.82 913.52 860.05 914.85 868.60 916.30 C877.15 917.75 884.73 919.12 900.00 920.50 C915.27 921.88 938.70 923.43 960.20 924.60 C981.70 925.77 1005.70 926.78 1029.00 927.50 C1052.30 928.22 1038.17 928.15 1100.00 928.90 C1161.83 929.65 1316.67 931.23 1400.00 932.00 C1483.33 932.77 1524.17 933.17 1600.00 933.50 C1675.83 933.83 1812.50 933.92 1855.00 934.00" stroke="#0000ff" stroke-width="3.8" fill="none"/>
<rect x="37" y="373" width="676" height="1" fill="#5e5e5e"/>
<rect x="37" y="389" width="676" height="1" fill="#5e5e5e"/>
<rect x="37" y="374" width="676" height="15" fill="#2f2f2f"/>
<rect x="43" y="374" width="1.2" height="1.2" fill="#9a9a9a"/><rect x="46" y="374" width="1.2" height="1.2" fill="#9a9a9a"/>
<rect x="43" y="377" width="1.2" height="1.2" fill="#9a9a9a"/><rect x="46" y="377" width="1.2" height="1.2" fill="#9a9a9a"/>
<rect x="43" y="380" width="1.2" height="1.2" fill="#9a9a9a"/><rect x="46" y="380" width="1.2" height="1.2" fill="#9a9a9a"/>
<rect x="43" y="383" width="1.2" height="1.2" fill="#9a9a9a"/><rect x="46" y="383" width="1.2" height="1.2" fill="#9a9a9a"/>
<rect x="43" y="386" width="1.2" height="1.2" fill="#9a9a9a"/><rect x="46" y="386" width="1.2" height="1.2" fill="#9a9a9a"/>
<rect x="79.5" y="419.0" width="178.5" height="461.0" rx="2" fill="none" stroke="#3d3d3d" stroke-width="1"/>
<rect x="280.0" y="419.0" width="198.0" height="550.5" rx="2" fill="none" stroke="#3d3d3d" stroke-width="1"/>
<rect x="499.5" y="418.5" width="168.70000000000005" height="331.5" rx="2" fill="none" stroke="#3d3d3d" stroke-width="1"/>
<rect x="499.5" y="778.5" width="168.5" height="251.29999999999995" rx="2" fill="none" stroke="#3d3d3d" stroke-width="1"/>
<text x="78" y="412.9" font-size="13" fill="#ececec" text-anchor="start" >Vehicle Parameters</text>
<text x="278.8" y="413" font-size="13" fill="#ececec" text-anchor="start" >OpenInverter Parameters</text>
<text x="498.6" y="412.6" font-size="13" fill="#ececec" text-anchor="start" >Run Controls</text>
<text x="498" y="773" font-size="13" fill="#ececec" text-anchor="start" >Window Visibility</text>
<text x="78" y="435.7" font-size="13" fill="#ececec" text-anchor="start" >Vehicle Weight (kg)</text>
<rect x="212" y="420.2" width="46.5" height="21.6" rx="3" fill="#262626"/>
<text x="215.2" y="435.7" font-size="13" fill="#ececec" text-anchor="start" >800</text>
<text x="78" y="463.7" font-size="13" fill="#ececec" text-anchor="start" >Wheel Radius (m)</text>
<rect x="212" y="448.2" width="46.5" height="21.6" rx="3" fill="#262626"/>
<text x="215.2" y="463.7" font-size="13" fill="#ececec" text-anchor="start" >0.28</text>
<text x="78" y="491.7" font-size="13" fill="#ececec" text-anchor="start" >Gear Ratio</text>
<rect x="212" y="476.2" width="46.5" height="21.6" rx="3" fill="#262626"/>
<text x="215.2" y="491.7" font-size="13" fill="#ececec" text-anchor="start" >6.859</text>
<text x="78" y="519.7" font-size="13" fill="#ececec" text-anchor="start" >Vdc (V)</text>
<rect x="212" y="504.2" width="46.5" height="21.6" rx="3" fill="#262626"/>
<text x="215.2" y="519.7" font-size="13" fill="#ececec" text-anchor="start" >360</text>
<text x="78" y="547.7" font-size="13" fill="#ececec" text-anchor="start" >Lq (mH)</text>
<rect x="212" y="532.2" width="46.5" height="21.6" rx="3" fill="#262626"/>
<text x="215.2" y="547.7" font-size="13" fill="#ececec" text-anchor="start" >6</text>
<text x="78" y="575.7" font-size="13" fill="#ececec" text-anchor="start" >Ld (mH)</text>
<rect x="212" y="560.2" width="46.5" height="21.6" rx="3" fill="#262626"/>
<text x="215.2" y="575.7" font-size="13" fill="#ececec" text-anchor="start" >2</text>
<text x="78" y="603.7" font-size="13" fill="#ececec" text-anchor="start" >Rs (Ohm)</text>
<rect x="212" y="588.2" width="46.5" height="21.6" rx="3" fill="#262626"/>
<text x="215.2" y="603.7" font-size="13" fill="#ececec" text-anchor="start" >0.075</text>
<text x="78" y="631.7" font-size="13" fill="#ececec" text-anchor="start" >λ ( mWeber)</text>
<rect x="212" y="616.2" width="46.5" height="21.6" rx="3" fill="#262626"/>
<text x="215.2" y="631.7" font-size="13" fill="#ececec" text-anchor="start" >108</text>
<text x="78" y="659.7" font-size="13" fill="#ececec" text-anchor="start" >SyncDel (us)</text>
<rect x="212" y="644.2" width="46.5" height="21.6" rx="3" fill="#262626"/>
<text x="215.2" y="659.7" font-size="13" fill="#ececec" text-anchor="start" >16</text>
<text x="78" y="687.7" font-size="13" fill="#ececec" text-anchor="start" >Loop Frequency (Hz)</text>
<rect x="212" y="672.2" width="46.5" height="21.6" rx="3" fill="#262626"/>
<text x="215.2" y="687.7" font-size="13" fill="#ececec" text-anchor="start" >8800</text>
<text x="78" y="715.7" font-size="13" fill="#ececec" text-anchor="start" >Sampling Point (%)</text>
<rect x="212" y="700.2" width="46.5" height="21.6" rx="3" fill="#262626"/>
<text x="215.2" y="715.7" font-size="13" fill="#ececec" text-anchor="start" >50</text>
<text x="85.8" y="742.7" font-size="13" fill="#ececec" text-anchor="start" >Extra Cycle Delay</text>
<rect x="191.8" y="731.8" width="13.5" height="13" fill="#262626"/>
<path d="M195.0 737.3 L198.20000000000002 742.0999999999999 L202.60000000000002 733.9" fill="none" stroke="#e0e0e0" stroke-width="1.9"/>
<text x="84.6" y="769.7" font-size="13" fill="#ececec" text-anchor="start" >Add Noise (Ap-p)</text>
<rect x="189.5" y="758.7" width="13.5" height="13" fill="#262626"/>
<rect x="212" y="755.4000000000001" width="46.5" height="21.6" rx="3" fill="#262626"/>
<text x="215.2" y="770.9000000000001" font-size="13" fill="#ececec" text-anchor="start" >10</text>
<text x="78" y="798.7" font-size="13" fill="#ececec" text-anchor="start" >Road Gradient (%)</text>
<rect x="212" y="783.2" width="46.5" height="21.6" rx="3" fill="#262626"/>
<text x="215.2" y="798.7" font-size="13" fill="#ececec" text-anchor="start" >0</text>
<text x="85.2" y="825.7" font-size="13" fill="#ececec" text-anchor="start" >Use Throt Ramps</text>
<rect x="190.3" y="814.8" width="13.5" height="13" fill="#262626"/>
<text x="278.8" y="435.7" font-size="13" fill="#ececec" text-anchor="start" >Torque Demand (%)</text>
<rect x="429" y="420.2" width="50" height="21.6" rx="3" fill="#262626"/>
<text x="432.8" y="435.7" font-size="13" fill="#ececec" text-anchor="start" >100</text>
<text x="278.8" y="463.7" font-size="13" fill="#ececec" text-anchor="start" >Throttle Current (A/%)</text>
<rect x="429" y="448.2" width="50" height="21.6" rx="3" fill="#262626"/>
<text x="432.8" y="463.7" font-size="13" fill="#ececec" text-anchor="start" >2</text>
<text x="278.8" y="491.7" font-size="13" fill="#ececec" text-anchor="start" >Mode (1=Run,2=Man)</text>
<rect x="429" y="476.2" width="50" height="21.6" rx="3" fill="#262626"/>
<text x="432.8" y="491.7" font-size="13" fill="#ececec" text-anchor="start" >1</text>
<text x="278.8" y="519.7" font-size="13" fill="#ececec" text-anchor="start" >Direction (-1=R,0=N,1=F)</text>
<rect x="429" y="504.2" width="50" height="21.6" rx="3" fill="#262626"/>
<text x="432.8" y="519.7" font-size="13" fill="#ececec" text-anchor="start" >1</text>
<text x="278.8" y="547.7" font-size="13" fill="#ececec" text-anchor="start" >Iq Manual</text>
<rect x="429" y="532.2" width="50" height="21.6" rx="3" fill="#262626"/>
<text x="432.8" y="547.7" font-size="13" fill="#ececec" text-anchor="start" >0.0</text>
<text x="278.8" y="575.7" font-size="13" fill="#ececec" text-anchor="start" >Id Manual</text>
<rect x="429" y="560.2" width="50" height="21.6" rx="3" fill="#262626"/>
<text x="432.8" y="575.7" font-size="13" fill="#ececec" text-anchor="start" >0.0</text>
<text x="278.8" y="619.7" font-size="13" fill="#ececec" text-anchor="start" >Motor Poles</text>
<rect x="429" y="604.2" width="50" height="21.6" rx="3" fill="#262626"/>
<text x="432.8" y="619.7" font-size="13" fill="#ececec" text-anchor="start" >4</text>
<text x="278.8" y="647.7" font-size="13" fill="#ececec" text-anchor="start" >Current Kp</text>
<rect x="429" y="632.2" width="50" height="21.6" rx="3" fill="#262626"/>
<text x="432.8" y="647.7" font-size="13" fill="#ececec" text-anchor="start" >1400</text>
<text x="278.8" y="675.7" font-size="13" fill="#ececec" text-anchor="start" >Current Ki</text>
<rect x="429" y="660.2" width="50" height="21.6" rx="3" fill="#262626"/>
<text x="432.8" y="675.7" font-size="13" fill="#ececec" text-anchor="start" >10000</text>
<text x="278.8" y="703.7" font-size="13" fill="#ececec" text-anchor="start" >VLim Margin</text>
<rect x="429" y="688.2" width="50" height="21.6" rx="3" fill="#262626"/>
<text x="432.8" y="703.7" font-size="13" fill="#ececec" text-anchor="start" >2000</text>
<text x="278.8" y="731.7" font-size="13" fill="#ececec" text-anchor="start" >VLim Flt</text>
<rect x="429" y="716.2" width="50" height="21.6" rx="3" fill="#262626"/>
<text x="432.8" y="731.7" font-size="13" fill="#ececec" text-anchor="start" >10</text>
<text x="278.8" y="759.7" font-size="13" fill="#ececec" text-anchor="start" >Lq - Ld (mH)</text>
<rect x="429" y="744.2" width="50" height="21.6" rx="3" fill="#262626"/>
<text x="432.8" y="759.7" font-size="13" fill="#ececec" text-anchor="start" >4</text>
<text x="278.8" y="787.7" font-size="13" fill="#ececec" text-anchor="start" >SyncAdv (dig/Hz)</text>
<rect x="429" y="772.2" width="50" height="21.6" rx="3" fill="#262626"/>
<text x="432.8" y="787.7" font-size="13" fill="#ececec" text-anchor="start" >10</text>
<text x="278.8" y="815.7" font-size="13" fill="#ececec" text-anchor="start" >SyncOfs</text>
<rect x="429" y="800.2" width="50" height="21.6" rx="3" fill="#262626"/>
<text x="432.8" y="815.7" font-size="13" fill="#ececec" text-anchor="start" >0</text>
<text x="278.8" y="843.7" font-size="13" fill="#ececec" text-anchor="start" >FW Current Max (A)</text>
<rect x="429" y="828.2" width="50" height="21.6" rx="3" fill="#262626"/>
<text x="432.8" y="843.7" font-size="13" fill="#ececec" text-anchor="start" >-85</text>
<text x="278.8" y="871.7" font-size="13" fill="#ececec" text-anchor="start" >FMax (Hz)</text>
<rect x="429" y="856.2" width="50" height="21.6" rx="3" fill="#262626"/>
<text x="432.8" y="871.7" font-size="13" fill="#ececec" text-anchor="start" >400.0</text>
<rect x="499" y="420.9" width="78" height="21" rx="3" fill="#1e1e1e"/>
<rect x="500" y="421.9" width="76" height="19" rx="2.2" fill="#4a4a4a"/>
<rect x="500.6" y="422.5" width="74.8" height="17.8" rx="1.8" fill="#3a3a3a"/>
<text x="538.0" y="436.09999999999997" font-size="13" fill="#ececec" text-anchor="middle" >Run For (s)</text>
<rect x="586" y="420.2" width="83" height="21.6" rx="3" fill="#262626"/>
<text x="589" y="435.7" font-size="13" fill="#ececec" text-anchor="start" >15</text>
<rect x="499" y="450.1" width="78" height="21" rx="3" fill="#1e1e1e"/>
<rect x="500" y="451.1" width="76" height="19" rx="2.2" fill="#4a4a4a"/>
<rect x="500.6" y="451.70000000000005" width="74.8" height="17.8" rx="1.8" fill="#3a3a3a"/>
<text x="538.0" y="465.3" font-size="13" fill="#ececec" text-anchor="middle" >Run (10s)</text>
<rect x="499" y="479.0" width="78" height="21" rx="3" fill="#1e1e1e"/>
<rect x="500" y="480.0" width="76" height="19" rx="2.2" fill="#4a4a4a"/>
<rect x="500.6" y="480.6" width="74.8" height="17.8" rx="1.8" fill="#3a3a3a"/>
<text x="538.0" y="494.2" font-size="13" fill="#ececec" text-anchor="middle" >Run (1s)</text>
<rect x="499" y="508.1" width="80" height="21" rx="3" fill="#1e1e1e"/>
<rect x="500" y="509.1" width="78" height="19" rx="2.2" fill="#4a4a4a"/>
<rect x="500.6" y="509.70000000000005" width="76.8" height="17.8" rx="1.8" fill="#3a3a3a"/>
<text x="539.0" y="523.3000000000001" font-size="13" fill="#ececec" text-anchor="middle" >Run (100ms)</text>
<rect x="499" y="537.0" width="78" height="21" rx="3" fill="#1e1e1e"/>
<rect x="500" y="538.0" width="76" height="19" rx="2.2" fill="#4a4a4a"/>
<rect x="500.6" y="538.6" width="74.8" height="17.8" rx="1.8" fill="#3a3a3a"/>
<text x="538.0" y="552.2" font-size="13" fill="#ececec" text-anchor="middle" >Run (10ms)</text>
<rect x="499" y="566.0" width="78" height="21" rx="3" fill="#1e1e1e"/>
<rect x="500" y="567.0" width="76" height="19" rx="2.2" fill="#4a4a4a"/>
<rect x="500.6" y="567.6" width="74.8" height="17.8" rx="1.8" fill="#3a3a3a"/>
<text x="538.0" y="581.2" font-size="13" fill="#ececec" text-anchor="middle" >Step</text>
<rect x="499" y="595.1" width="78" height="21" rx="3" fill="#1e1e1e"/>
<rect x="500" y="596.1" width="76" height="19" rx="2.2" fill="#4a4a4a"/>
<rect x="500.6" y="596.7" width="74.8" height="17.8" rx="1.8" fill="#3a3a3a"/>
<text x="538.0" y="610.3000000000001" font-size="13" fill="#ececec" text-anchor="middle" >Transient</text>
<rect x="499" y="624.1" width="78" height="21" rx="3" fill="#1e1e1e"/>
<rect x="500" y="625.1" width="76" height="19" rx="2.2" fill="#4a4a4a"/>
<rect x="500.6" y="625.7" width="74.8" height="17.8" rx="1.8" fill="#3a3a3a"/>
<text x="538.0" y="639.3000000000001" font-size="13" fill="#ececec" text-anchor="middle" >Accel/Coast</text>
<rect x="499" y="699.1" width="78" height="21" rx="3" fill="#1e1e1e"/>
<rect x="500" y="700.1" width="76" height="19" rx="2.2" fill="#4a4a4a"/>
<rect x="500.6" y="700.7" width="74.8" height="17.8" rx="1.8" fill="#3a3a3a"/>
<text x="538.0" y="714.3000000000001" font-size="13" fill="#ececec" text-anchor="middle" >Restart</text>
<rect x="498.3" y="787.3" width="13.5" height="13" fill="#262626"/>
<text x="517.5" y="798.8" font-size="13" fill="#ececec" text-anchor="start" >Operating Point</text>
<rect x="498.3" y="818.3" width="13.5" height="13" fill="#262626"/>
<path d="M501.5 823.8 L504.7 828.5999999999999 L509.1 820.4" fill="none" stroke="#e0e0e0" stroke-width="1.9"/>
<text x="517.5" y="829.8" font-size="13" fill="#ececec" text-anchor="start" >Simulation</text>
<rect x="498.3" y="849.5" width="13.5" height="13" fill="#262626"/>
<path d="M501.5 855 L504.7 859.8 L509.1 851.6" fill="none" stroke="#e0e0e0" stroke-width="1.9"/>
<text x="517.5" y="861" font-size="13" fill="#ececec" text-anchor="start" >Controller Voltages</text>
<rect x="498.3" y="880.5" width="13.5" height="13" fill="#262626"/>
<path d="M501.5 886 L504.7 890.8 L509.1 882.6" fill="none" stroke="#e0e0e0" stroke-width="1.9"/>
<text x="517.5" y="892" font-size="13" fill="#ececec" text-anchor="start" >Controller Currents</text>
<rect x="498.3" y="911.7" width="13.5" height="13" fill="#262626"/>
<text x="517.5" y="923.2" font-size="13" fill="#ececec" text-anchor="start" >Motor Voltages</text>
<rect x="498.3" y="942.7" width="13.5" height="13" fill="#262626"/>
<text x="517.5" y="954.2" font-size="13" fill="#ececec" text-anchor="start" >Motor Currents</text>
<rect x="498.3" y="973.8" width="13.5" height="13" fill="#262626"/>
<path d="M501.5 979.3 L504.7 984.0999999999999 L509.1 975.9" fill="none" stroke="#e0e0e0" stroke-width="1.9"/>
<text x="517.5" y="985.3" font-size="13" fill="#ececec" text-anchor="start" >Power/Torque</text>
<circle cx="545" cy="1015" r="6.9" fill="#262626"/><circle cx="545" cy="1015" r="3.3" fill="#b8b8b8"/>
<text x="558.1" y="1019.7" font-size="13" fill="#ececec" text-anchor="start" >Speed</text>
<circle cx="611" cy="1015" r="6.9" fill="#262626"/>
<text x="624.1" y="1019.7" font-size="13" fill="#ececec" text-anchor="start" >Time</text>
<rect x="709" y="1076" width="1.2" height="1.2" fill="#8a8a8a"/>
<rect x="706" y="1076" width="1.2" height="1.2" fill="#8a8a8a"/>
<rect x="703" y="1076" width="1.2" height="1.2" fill="#8a8a8a"/>
<rect x="709" y="1073" width="1.2" height="1.2" fill="#8a8a8a"/>
<rect x="706" y="1073" width="1.2" height="1.2" fill="#8a8a8a"/>
<rect x="709" y="1070" width="1.2" height="1.2" fill="#8a8a8a"/>
<rect x="37" y="0" width="1" height="1080" fill="#282828"/>
<circle cx="1786" cy="12.7" r="5.6" fill="none" stroke="#dfe3e7" stroke-width="1.3"/>
<line x1="1790" y1="16.8" x2="1793.6" y2="20.4" stroke="#dfe3e7" stroke-width="1.4"/>
<rect x="1820" y="18.7" width="12" height="1.5" fill="#dfe3e7"/>
<path d="M1860.5 10.5 V8.2 H1869.8 V17.2 H1867.2" fill="none" stroke="#dfe3e7" stroke-width="1.2"/>
<rect x="1857.6" y="11.2" width="9.4" height="8.8" fill="none" stroke="#dfe3e7" stroke-width="1.2"/>
<path d="M1895 8.5 L1906.8 20.2 M1906.8 8.5 L1895 20.2" stroke="#dfe3e7" stroke-width="1.3"/>
<path d="M1736.5 46.5 H1740 L1741.5 43.6 H1745 L1746.5 46.5 H1749.8 V55.6 H1736.5 Z" fill="none" stroke="#dfe3e7" stroke-width="1.1" stroke-linejoin="round"/>
<circle cx="1743" cy="50.5" r="2.3" fill="none" stroke="#dfe3e7" stroke-width="1.1"/>
<path d="M1769 43 L1775 45.2 V50.5 Q1775 55 1769 57 Q1763 55 1763 50.5 V45.2 Z" fill="#7ccdf2"/>
<path d="M1766.2 50 L1768.4 52.2 L1772 48.2" fill="none" stroke="#263240" stroke-width="1.5"/>
<path d="M1795 56.4 L1789.2 50.6 Q1787.2 48.3 1788.6 45.8 Q1790.5 43.3 1793.2 44.4 Q1794.3 44.9 1795 46 Q1795.7 44.9 1796.8 44.4 Q1799.5 43.3 1801.4 45.8 Q1802.8 48.3 1800.8 50.6 Z" fill="none" stroke="#dfe3e7" stroke-width="1.1" stroke-linejoin="round"/>
<rect x="1811" y="36" width="1" height="29" fill="#66717c"/>
<circle cx="1833" cy="50" r="10" fill="#6f7d8c"/>
<circle cx="1833" cy="46.5" r="3.5" fill="#dfe4ea"/>
<path d="M1826.5 56.5 Q1827.5 51.8 1833 51.8 Q1838.5 51.8 1839.5 56.5 Q1836.8 60 1833 60 Q1829.2 60 1826.5 56.5 Z" fill="#dfe4ea"/>
<path d="M1865.3 44 V52.5 M1861.8 49.2 L1865.3 52.6 L1868.8 49.2 M1859 52 V55.6 H1871.6 V52" fill="none" stroke="#dfe3e7" stroke-width="1.2"/>
<rect x="1892.7" y="45.0" width="12.3" height="1.2" fill="#dfe3e7"/><rect x="1894.9" y="43.6" width="1.2" height="4" fill="#dfe3e7"/>
<rect x="1892.7" y="49.4" width="12.3" height="1.2" fill="#dfe3e7"/><rect x="1901.4" y="48" width="1.2" height="4" fill="#dfe3e7"/>
<rect x="1892.7" y="53.6" width="12.3" height="1.2" fill="#dfe3e7"/><rect x="1894.9" y="52.2" width="1.2" height="4" fill="#dfe3e7"/>
<path d="M37.5 337.5 H41.5 L37.5 341.5 Z" fill="#bdbdbd"/>
<path d="M714 337.5 H710 L714 341.5 Z" fill="#8a8a8a"/>
<path d="M716.5 403 H720.5 L716.5 406 Z" fill="#bdbdbd"/>
<rect x="716" y="406" width="1" height="2" fill="#2050a0"/>
<path d="M1919.5 403.5 H1915.5 L1919.5 407.5 Z" fill="#b0b0b0"/>
<path d="M716.5 742.5 H720 L716.5 746 Z" fill="#a8a8a8"/>
<path d="M1919.5 742.5 H1916 L1919.5 746 Z" fill="#a8a8a8"/>
</svg>
</body></html>
